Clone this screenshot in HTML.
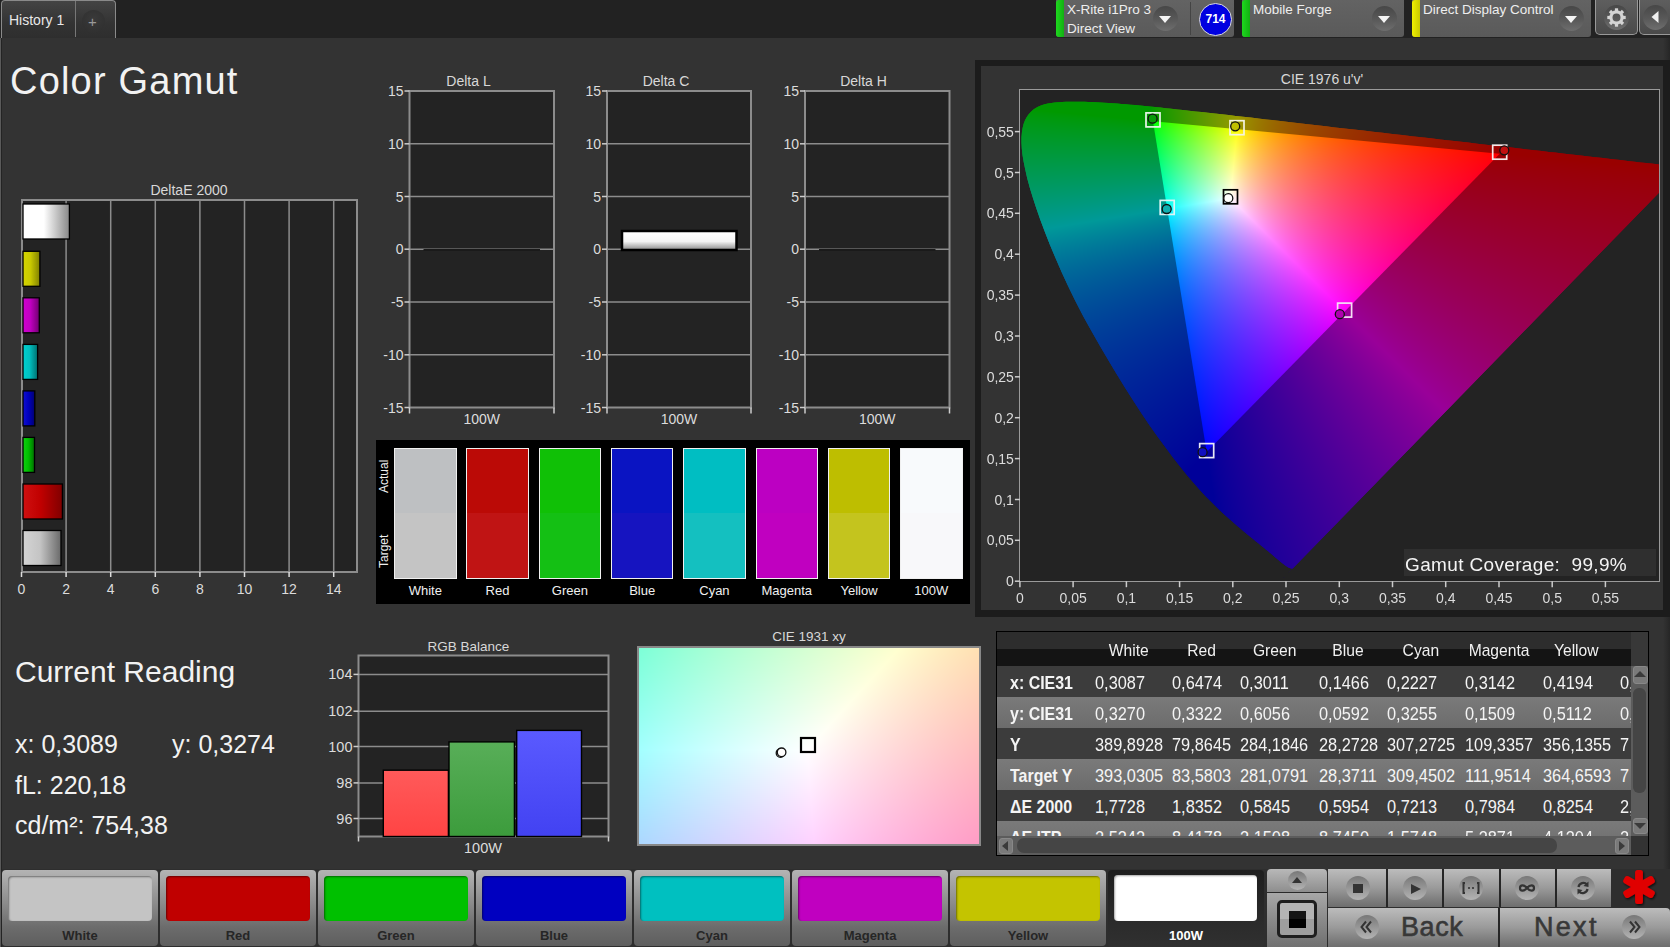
<!DOCTYPE html>
<html><head><meta charset="utf-8">
<style>
*{box-sizing:border-box;margin:0;padding:0}
html,body{width:1670px;height:947px;overflow:hidden;background:#2e2e2e;font-family:"Liberation Sans",sans-serif;color:#e6e6e6}
.a{position:absolute}
.t{position:absolute;white-space:nowrap;line-height:1}
.dd{width:25px;height:25px;border-radius:50%;background:linear-gradient(#474747,#595959 55%,#6e6e6e)}
.dd::after{content:"";position:absolute;left:6px;top:10px;border-left:6.5px solid transparent;border-right:6.5px solid transparent;border-top:7px solid #f4f4f4}
#main{position:absolute;left:2px;top:38px;width:1668px;height:831px;background:#333333}
svg text{font-family:"Liberation Sans",sans-serif}
</style></head><body>
<div class="a" style="left:0;top:0;width:1670px;height:38px;background:#222"></div>
<div id="main"></div><div class="a" style="left:0;top:38px;width:1px;height:909px;background:#5a5a5a"></div><div class="a" style="left:1px;top:38px;width:1px;height:909px;background:#242424"></div><div class="a" style="left:1663px;top:38px;width:7px;height:831px;background:linear-gradient(90deg,#333,#262626)"></div>
<!-- TAB -->
<div class="a" style="left:1px;top:0;width:115px;height:38px;border:1px solid #8a8a8a;border-bottom:none;border-radius:4px 4px 0 0;background:linear-gradient(#444,#333 60%,#2e2e2e)"></div>
<div class="a" style="left:75px;top:1px;width:1px;height:36px;background:#777"></div>
<div class="t" style="left:9px;top:13px;font-size:14px;color:#e8e8e8">History 1</div>
<div class="a" style="left:82px;top:10px;width:23px;height:23px;border-radius:50%;background:radial-gradient(circle at 50% 40%,#3a3a3a,#2d2d2d)"></div>
<div class="t" style="left:88px;top:14px;font-size:15px;color:#999">+</div>

<!-- DEVICE CHIPS -->
<div class="a" style="left:1056px;top:0;width:178px;height:37px;border-radius:0 0 3px 3px;background:linear-gradient(#636363,#5a5a5a)"></div>
<div class="a" style="left:1056px;top:0;width:8px;height:37px;border-radius:3px 0 0 3px;background:linear-gradient(90deg,#1ed81e,#12b012)"></div>
<div class="a" style="left:1190px;top:2px;width:1px;height:33px;background:#444"></div>
<div class="t" style="left:1067px;top:3px;font-size:13.5px;color:#eee">X-Rite i1Pro 3</div>
<div class="t" style="left:1067px;top:22px;font-size:13.5px;color:#eee">Direct View</div>
<div class="a dd" style="left:1153px;top:6px"></div>
<div class="a" style="left:1199px;top:3px;width:33px;height:33px;border-radius:50%;background:#0000e0;border:1.5px solid #ddd"></div>
<div class="t" style="left:1199px;top:13px;width:33px;text-align:center;font-size:12px;font-weight:bold;color:#fff">714</div>

<div class="a" style="left:1242px;top:0;width:162px;height:37px;border-radius:0 0 3px 3px;background:linear-gradient(#636363,#5a5a5a)"></div>
<div class="a" style="left:1242px;top:0;width:8px;height:37px;border-radius:3px 0 0 3px;background:linear-gradient(90deg,#1ed81e,#12b012)"></div>
<div class="t" style="left:1253px;top:3px;font-size:13.5px;color:#eee">Mobile Forge</div>
<div class="a dd" style="left:1372px;top:6px"></div>

<div class="a" style="left:1412px;top:0;width:179px;height:37px;border-radius:0 0 3px 3px;background:linear-gradient(#636363,#5a5a5a)"></div>
<div class="a" style="left:1412px;top:0;width:8px;height:37px;border-radius:3px 0 0 3px;background:linear-gradient(90deg,#f0f000,#c8c800)"></div>
<div class="t" style="left:1423px;top:3px;font-size:13.5px;color:#eee">Direct Display Control</div>
<div class="a dd" style="left:1559px;top:6px"></div>

<div class="a" style="left:1595px;top:0;width:43px;height:35px;border:1px solid #999;border-top:none;border-radius:0 0 5px 5px;background:linear-gradient(#5e5e5e,#4a4a4a)"></div>
<div class="a" style="left:1604px;top:5px;width:25px;height:25px;border-radius:50%;background:linear-gradient(#474747,#595959 55%,#6e6e6e)"></div>
<svg class="a" style="left:1604px;top:5px" width="25" height="25" viewBox="0 0 25 25"><g transform="translate(12.5 12.5)"><circle r="5.6" fill="none" stroke="#d4d4d4" stroke-width="3.2"/><rect x="-1.6" y="-9.2" width="3.2" height="4" fill="#d4d4d4" transform="rotate(0)"/><rect x="-1.6" y="-9.2" width="3.2" height="4" fill="#d4d4d4" transform="rotate(45)"/><rect x="-1.6" y="-9.2" width="3.2" height="4" fill="#d4d4d4" transform="rotate(90)"/><rect x="-1.6" y="-9.2" width="3.2" height="4" fill="#d4d4d4" transform="rotate(135)"/><rect x="-1.6" y="-9.2" width="3.2" height="4" fill="#d4d4d4" transform="rotate(180)"/><rect x="-1.6" y="-9.2" width="3.2" height="4" fill="#d4d4d4" transform="rotate(225)"/><rect x="-1.6" y="-9.2" width="3.2" height="4" fill="#d4d4d4" transform="rotate(270)"/><rect x="-1.6" y="-9.2" width="3.2" height="4" fill="#d4d4d4" transform="rotate(315)"/></g></svg>
<div class="a" style="left:1639px;top:0;width:35px;height:35px;border:1px solid #999;border-top:none;border-radius:0 0 0 5px;background:linear-gradient(#5e5e5e,#4a4a4a)"></div>
<div class="a" style="left:1643px;top:5px;width:25px;height:25px;border-radius:50%;background:linear-gradient(#474747,#595959 55%,#6e6e6e)"></div>
<svg class="a" style="left:1643px;top:5px" width="25" height="25"><path d="M8.5 12 L15.5 6 L15.5 18 Z" fill="#f0f0f0"/></svg>


<div class="t" style="left:10px;top:62px;font-size:38px;letter-spacing:1.2px;color:#f2f2f2">Color Gamut</div>
<svg class="a" style="left:0;top:0" width="370" height="610">
<text x="189" y="195" font-size="14" fill="#d8d8d8" text-anchor="middle">DeltaE 2000</text>
<rect x="22" y="200" width="335" height="372" fill="#232323" stroke="#8c8c8c" stroke-width="2"/>
<line x1="66.1" y1="200" x2="66.1" y2="572" stroke="#8c8c8c" stroke-width="1.5"/>
<line x1="110.7" y1="200" x2="110.7" y2="572" stroke="#8c8c8c" stroke-width="1.5"/>
<line x1="155.3" y1="200" x2="155.3" y2="572" stroke="#8c8c8c" stroke-width="1.5"/>
<line x1="199.9" y1="200" x2="199.9" y2="572" stroke="#8c8c8c" stroke-width="1.5"/>
<line x1="244.5" y1="200" x2="244.5" y2="572" stroke="#8c8c8c" stroke-width="1.5"/>
<line x1="289.1" y1="200" x2="289.1" y2="572" stroke="#8c8c8c" stroke-width="1.5"/>
<line x1="333.7" y1="200" x2="333.7" y2="572" stroke="#8c8c8c" stroke-width="1.5"/>
<line x1="21.5" y1="572" x2="21.5" y2="577" stroke="#ddd" stroke-width="1.5"/>
<text x="21.5" y="594" font-size="14" fill="#dcdcdc" text-anchor="middle">0</text>
<line x1="66.1" y1="572" x2="66.1" y2="577" stroke="#ddd" stroke-width="1.5"/>
<text x="66.1" y="594" font-size="14" fill="#dcdcdc" text-anchor="middle">2</text>
<line x1="110.7" y1="572" x2="110.7" y2="577" stroke="#ddd" stroke-width="1.5"/>
<text x="110.7" y="594" font-size="14" fill="#dcdcdc" text-anchor="middle">4</text>
<line x1="155.3" y1="572" x2="155.3" y2="577" stroke="#ddd" stroke-width="1.5"/>
<text x="155.3" y="594" font-size="14" fill="#dcdcdc" text-anchor="middle">6</text>
<line x1="199.9" y1="572" x2="199.9" y2="577" stroke="#ddd" stroke-width="1.5"/>
<text x="199.9" y="594" font-size="14" fill="#dcdcdc" text-anchor="middle">8</text>
<line x1="244.5" y1="572" x2="244.5" y2="577" stroke="#ddd" stroke-width="1.5"/>
<text x="244.5" y="594" font-size="14" fill="#dcdcdc" text-anchor="middle">10</text>
<line x1="289.1" y1="572" x2="289.1" y2="577" stroke="#ddd" stroke-width="1.5"/>
<text x="289.1" y="594" font-size="14" fill="#dcdcdc" text-anchor="middle">12</text>
<line x1="333.7" y1="572" x2="333.7" y2="577" stroke="#ddd" stroke-width="1.5"/>
<text x="333.7" y="594" font-size="14" fill="#dcdcdc" text-anchor="middle">14</text>
<defs>
<linearGradient id="dg0" x1="0" x2="1" y1="0" y2="0"><stop offset="0" stop-color="#ffffff"/><stop offset="0.45" stop-color="#ffffff"/><stop offset="1" stop-color="#888"/></linearGradient>
<linearGradient id="dg1" x1="0" x2="1" y1="0" y2="0"><stop offset="0" stop-color="#d4d400"/><stop offset="0.45" stop-color="#c8c800"/><stop offset="1" stop-color="#808000"/></linearGradient>
<linearGradient id="dg2" x1="0" x2="1" y1="0" y2="0"><stop offset="0" stop-color="#d000d0"/><stop offset="0.45" stop-color="#c000c0"/><stop offset="1" stop-color="#700070"/></linearGradient>
<linearGradient id="dg3" x1="0" x2="1" y1="0" y2="0"><stop offset="0" stop-color="#00d0d0"/><stop offset="0.45" stop-color="#00c0c0"/><stop offset="1" stop-color="#007070"/></linearGradient>
<linearGradient id="dg4" x1="0" x2="1" y1="0" y2="0"><stop offset="0" stop-color="#1010d0"/><stop offset="0.45" stop-color="#0000c0"/><stop offset="1" stop-color="#000070"/></linearGradient>
<linearGradient id="dg5" x1="0" x2="1" y1="0" y2="0"><stop offset="0" stop-color="#10d010"/><stop offset="0.45" stop-color="#00c000"/><stop offset="1" stop-color="#007000"/></linearGradient>
<linearGradient id="dg6" x1="0" x2="1" y1="0" y2="0"><stop offset="0" stop-color="#d01010"/><stop offset="0.45" stop-color="#c00000"/><stop offset="1" stop-color="#800000"/></linearGradient>
<linearGradient id="dg7" x1="0" x2="1" y1="0" y2="0"><stop offset="0" stop-color="#d4d4d4"/><stop offset="0.45" stop-color="#c4c4c4"/><stop offset="1" stop-color="#6a6a6a"/></linearGradient>
</defs>
<rect x="23" y="204.0" width="46.4" height="35" fill="url(#dg0)" stroke="#000" stroke-width="1.3"/>
<rect x="23" y="251.3" width="16.9" height="35" fill="url(#dg1)" stroke="#000" stroke-width="1.3"/>
<rect x="23" y="297.8" width="16.3" height="35" fill="url(#dg2)" stroke="#000" stroke-width="1.3"/>
<rect x="23" y="344.4" width="14.6" height="35" fill="url(#dg3)" stroke="#000" stroke-width="1.3"/>
<rect x="23" y="390.9" width="11.8" height="35" fill="url(#dg4)" stroke="#000" stroke-width="1.3"/>
<rect x="23" y="437.4" width="11.5" height="35" fill="url(#dg5)" stroke="#000" stroke-width="1.3"/>
<rect x="23" y="484.0" width="39.4" height="35" fill="url(#dg6)" stroke="#000" stroke-width="1.3"/>
<rect x="23" y="530.5" width="38.0" height="35" fill="url(#dg7)" stroke="#000" stroke-width="1.3"/>
</svg>
<svg class="a" style="left:370px;top:60px" width="600" height="380">
<defs><linearGradient id="cbar" x1="0" x2="0" y1="0" y2="1"><stop offset="0" stop-color="#fff"/><stop offset="0.55" stop-color="#f4f4f4"/><stop offset="1" stop-color="#8a8a8a"/></linearGradient></defs>
<text x="98.5" y="26" font-size="14" fill="#d8d8d8" text-anchor="middle">Delta L</text>
<rect x="39.5" y="31" width="144.5" height="316.5" fill="#232323" stroke="#8c8c8c" stroke-width="2"/>
<line x1="34.5" y1="31.0" x2="39.5" y2="31.0" stroke="#ccc" stroke-width="1.5"/>
<text x="33.5" y="36.0" font-size="14" fill="#dcdcdc" text-anchor="end">15</text>
<line x1="39.5" y1="83.8" x2="184" y2="83.8" stroke="#8c8c8c" stroke-width="1.5"/>
<line x1="34.5" y1="83.8" x2="39.5" y2="83.8" stroke="#ccc" stroke-width="1.5"/>
<text x="33.5" y="88.8" font-size="14" fill="#dcdcdc" text-anchor="end">10</text>
<line x1="39.5" y1="136.5" x2="184" y2="136.5" stroke="#8c8c8c" stroke-width="1.5"/>
<line x1="34.5" y1="136.5" x2="39.5" y2="136.5" stroke="#ccc" stroke-width="1.5"/>
<text x="33.5" y="141.5" font-size="14" fill="#dcdcdc" text-anchor="end">5</text>
<line x1="39.5" y1="189.2" x2="184" y2="189.2" stroke="#8c8c8c" stroke-width="1.5"/>
<line x1="34.5" y1="189.2" x2="39.5" y2="189.2" stroke="#ccc" stroke-width="1.5"/>
<text x="33.5" y="194.2" font-size="14" fill="#dcdcdc" text-anchor="end">0</text>
<line x1="39.5" y1="242.0" x2="184" y2="242.0" stroke="#8c8c8c" stroke-width="1.5"/>
<line x1="34.5" y1="242.0" x2="39.5" y2="242.0" stroke="#ccc" stroke-width="1.5"/>
<text x="33.5" y="247.0" font-size="14" fill="#dcdcdc" text-anchor="end">-5</text>
<line x1="39.5" y1="294.8" x2="184" y2="294.8" stroke="#8c8c8c" stroke-width="1.5"/>
<line x1="34.5" y1="294.8" x2="39.5" y2="294.8" stroke="#ccc" stroke-width="1.5"/>
<text x="33.5" y="299.8" font-size="14" fill="#dcdcdc" text-anchor="end">-10</text>
<line x1="34.5" y1="347.5" x2="39.5" y2="347.5" stroke="#ccc" stroke-width="1.5"/>
<text x="33.5" y="352.5" font-size="14" fill="#dcdcdc" text-anchor="end">-15</text>
<line x1="39.5" y1="347.5" x2="39.5" y2="353.5" stroke="#ccc" stroke-width="1.5"/>
<line x1="184" y1="347.5" x2="184" y2="353.5" stroke="#ccc" stroke-width="1.5"/>
<text x="111.75" y="364" font-size="14" fill="#dcdcdc" text-anchor="middle">100W</text>
<line x1="53.5" y1="190" x2="170" y2="190" stroke="#1a1a1a" stroke-width="2"/>
<text x="296" y="26" font-size="14" fill="#d8d8d8" text-anchor="middle">Delta C</text>
<rect x="237" y="31" width="144" height="316.5" fill="#232323" stroke="#8c8c8c" stroke-width="2"/>
<line x1="232" y1="31.0" x2="237" y2="31.0" stroke="#ccc" stroke-width="1.5"/>
<text x="231" y="36.0" font-size="14" fill="#dcdcdc" text-anchor="end">15</text>
<line x1="237" y1="83.8" x2="381" y2="83.8" stroke="#8c8c8c" stroke-width="1.5"/>
<line x1="232" y1="83.8" x2="237" y2="83.8" stroke="#ccc" stroke-width="1.5"/>
<text x="231" y="88.8" font-size="14" fill="#dcdcdc" text-anchor="end">10</text>
<line x1="237" y1="136.5" x2="381" y2="136.5" stroke="#8c8c8c" stroke-width="1.5"/>
<line x1="232" y1="136.5" x2="237" y2="136.5" stroke="#ccc" stroke-width="1.5"/>
<text x="231" y="141.5" font-size="14" fill="#dcdcdc" text-anchor="end">5</text>
<line x1="237" y1="189.2" x2="381" y2="189.2" stroke="#8c8c8c" stroke-width="1.5"/>
<line x1="232" y1="189.2" x2="237" y2="189.2" stroke="#ccc" stroke-width="1.5"/>
<text x="231" y="194.2" font-size="14" fill="#dcdcdc" text-anchor="end">0</text>
<line x1="237" y1="242.0" x2="381" y2="242.0" stroke="#8c8c8c" stroke-width="1.5"/>
<line x1="232" y1="242.0" x2="237" y2="242.0" stroke="#ccc" stroke-width="1.5"/>
<text x="231" y="247.0" font-size="14" fill="#dcdcdc" text-anchor="end">-5</text>
<line x1="237" y1="294.8" x2="381" y2="294.8" stroke="#8c8c8c" stroke-width="1.5"/>
<line x1="232" y1="294.8" x2="237" y2="294.8" stroke="#ccc" stroke-width="1.5"/>
<text x="231" y="299.8" font-size="14" fill="#dcdcdc" text-anchor="end">-10</text>
<line x1="232" y1="347.5" x2="237" y2="347.5" stroke="#ccc" stroke-width="1.5"/>
<text x="231" y="352.5" font-size="14" fill="#dcdcdc" text-anchor="end">-15</text>
<line x1="237" y1="347.5" x2="237" y2="353.5" stroke="#ccc" stroke-width="1.5"/>
<line x1="381" y1="347.5" x2="381" y2="353.5" stroke="#ccc" stroke-width="1.5"/>
<text x="309.0" y="364" font-size="14" fill="#dcdcdc" text-anchor="middle">100W</text>
<rect x="252" y="171" width="114.5" height="19" fill="url(#cbar)" stroke="#000" stroke-width="2.5"/>
<text x="493.5" y="26" font-size="14" fill="#d8d8d8" text-anchor="middle">Delta H</text>
<rect x="435" y="31" width="144.5" height="316.5" fill="#232323" stroke="#8c8c8c" stroke-width="2"/>
<line x1="430" y1="31.0" x2="435" y2="31.0" stroke="#ccc" stroke-width="1.5"/>
<text x="429" y="36.0" font-size="14" fill="#dcdcdc" text-anchor="end">15</text>
<line x1="435" y1="83.8" x2="579.5" y2="83.8" stroke="#8c8c8c" stroke-width="1.5"/>
<line x1="430" y1="83.8" x2="435" y2="83.8" stroke="#ccc" stroke-width="1.5"/>
<text x="429" y="88.8" font-size="14" fill="#dcdcdc" text-anchor="end">10</text>
<line x1="435" y1="136.5" x2="579.5" y2="136.5" stroke="#8c8c8c" stroke-width="1.5"/>
<line x1="430" y1="136.5" x2="435" y2="136.5" stroke="#ccc" stroke-width="1.5"/>
<text x="429" y="141.5" font-size="14" fill="#dcdcdc" text-anchor="end">5</text>
<line x1="435" y1="189.2" x2="579.5" y2="189.2" stroke="#8c8c8c" stroke-width="1.5"/>
<line x1="430" y1="189.2" x2="435" y2="189.2" stroke="#ccc" stroke-width="1.5"/>
<text x="429" y="194.2" font-size="14" fill="#dcdcdc" text-anchor="end">0</text>
<line x1="435" y1="242.0" x2="579.5" y2="242.0" stroke="#8c8c8c" stroke-width="1.5"/>
<line x1="430" y1="242.0" x2="435" y2="242.0" stroke="#ccc" stroke-width="1.5"/>
<text x="429" y="247.0" font-size="14" fill="#dcdcdc" text-anchor="end">-5</text>
<line x1="435" y1="294.8" x2="579.5" y2="294.8" stroke="#8c8c8c" stroke-width="1.5"/>
<line x1="430" y1="294.8" x2="435" y2="294.8" stroke="#ccc" stroke-width="1.5"/>
<text x="429" y="299.8" font-size="14" fill="#dcdcdc" text-anchor="end">-10</text>
<line x1="430" y1="347.5" x2="435" y2="347.5" stroke="#ccc" stroke-width="1.5"/>
<text x="429" y="352.5" font-size="14" fill="#dcdcdc" text-anchor="end">-15</text>
<line x1="435" y1="347.5" x2="435" y2="353.5" stroke="#ccc" stroke-width="1.5"/>
<line x1="579.5" y1="347.5" x2="579.5" y2="353.5" stroke="#ccc" stroke-width="1.5"/>
<text x="507.25" y="364" font-size="14" fill="#dcdcdc" text-anchor="middle">100W</text>
<line x1="449" y1="190" x2="565.5" y2="190" stroke="#1a1a1a" stroke-width="2"/>
</svg>
<div class="a" style="left:376px;top:440px;width:594px;height:164px;background:#000"></div>
<div class="a" style="left:394.0px;top:448px;width:62.5px;height:131px;border:1.5px solid #f0f0f0;background:linear-gradient(#bec0c2 50%,#c4c4c4 50%)"></div>
<div class="t" style="left:374.0px;top:584px;width:102.5px;text-align:center;font-size:13px;color:#f0f0f0">White</div>
<div class="a" style="left:466.3px;top:448px;width:62.5px;height:131px;border:1.5px solid #f0f0f0;background:linear-gradient(#bb0a06 50%,#c01414 50%)"></div>
<div class="t" style="left:446.3px;top:584px;width:102.5px;text-align:center;font-size:13px;color:#f0f0f0">Red</div>
<div class="a" style="left:538.6px;top:448px;width:62.5px;height:131px;border:1.5px solid #f0f0f0;background:linear-gradient(#10c006 50%,#14c014 50%)"></div>
<div class="t" style="left:518.6px;top:584px;width:102.5px;text-align:center;font-size:13px;color:#f0f0f0">Green</div>
<div class="a" style="left:610.9px;top:448px;width:62.5px;height:131px;border:1.5px solid #f0f0f0;background:linear-gradient(#0a14c2 50%,#1614c0 50%)"></div>
<div class="t" style="left:590.9px;top:584px;width:102.5px;text-align:center;font-size:13px;color:#f0f0f0">Blue</div>
<div class="a" style="left:683.2px;top:448px;width:62.5px;height:131px;border:1.5px solid #f0f0f0;background:linear-gradient(#00bec2 50%,#14c0c0 50%)"></div>
<div class="t" style="left:663.2px;top:584px;width:102.5px;text-align:center;font-size:13px;color:#f0f0f0">Cyan</div>
<div class="a" style="left:755.5px;top:448px;width:62.5px;height:131px;border:1.5px solid #f0f0f0;background:linear-gradient(#bc00c2 50%,#c000c0 50%)"></div>
<div class="t" style="left:735.5px;top:584px;width:102.5px;text-align:center;font-size:13px;color:#f0f0f0">Magenta</div>
<div class="a" style="left:827.8px;top:448px;width:62.5px;height:131px;border:1.5px solid #f0f0f0;background:linear-gradient(#bebe00 50%,#c4c41e 50%)"></div>
<div class="t" style="left:807.8px;top:584px;width:102.5px;text-align:center;font-size:13px;color:#f0f0f0">Yellow</div>
<div class="a" style="left:900.1px;top:448px;width:62.5px;height:131px;border:1.5px solid #f0f0f0;background:linear-gradient(#f8fafc 50%,#f8f8fa 50%)"></div>
<div class="t" style="left:880.1px;top:584px;width:102.5px;text-align:center;font-size:13px;color:#f0f0f0">100W</div>
<div class="t" style="left:378px;top:469px;font-size:12px;color:#eee;transform:rotate(-90deg);transform-origin:0 0;top:493px">Actual</div>
<div class="t" style="left:378px;top:568px;font-size:12px;color:#eee;transform:rotate(-90deg);transform-origin:0 0">Target</div>
<div class="a" style="left:975px;top:60px;width:695px;height:557px;background:#1c1c1c"></div>
<div class="a" style="left:981px;top:66px;width:682px;height:544px;background:#333"></div>
<div class="t" style="left:981px;top:72px;width:682px;text-align:center;font-size:14px;color:#d8d8d8">CIE 1976 u'v'</div>
<div class="a" style="left:1019px;top:89px;width:641px;height:493px;background:#232323;border:1.5px solid #9a9a9a"></div>
<svg class="a" style="left:1020px;top:90px" width="639" height="491"><defs><clipPath id="lc"><polygon points="273.4,477.8 245.9,506.0 248.8,503.0 264.0,487.4 273.0,478.1 272.8,478.2 272.7,478.3 272.5,478.3 272.2,478.4 272.0,478.4 271.7,478.4 271.4,478.4 271.0,478.4 270.5,478.3 269.8,478.1 269.2,477.9 268.5,477.6 267.9,477.2 267.2,476.8 266.5,476.3 265.7,475.8 264.9,475.2 264.0,474.5 263.1,473.7 262.0,472.9 260.8,472.0 259.5,470.9 258.1,469.8 256.6,468.6 255.1,467.2 253.4,465.8 251.7,464.3 249.9,462.8 247.9,461.1 245.8,459.4 243.6,457.6 241.3,455.7 238.7,453.6 236.0,451.4 233.1,449.0 230.0,446.5 226.9,443.9 223.6,441.2 220.1,438.3 216.5,435.2 212.6,431.8 208.6,428.2 204.3,424.4 199.8,420.2 195.2,415.8 190.5,411.1 185.4,405.9 179.9,399.9 173.8,393.0 167.3,385.4 160.5,377.0 153.4,368.0 146.0,358.1 138.2,347.5 130.2,336.3 122.1,324.3 113.8,311.6 105.2,298.1 96.6,284.1 88.2,270.0 79.7,255.6 71.3,240.8 63.1,225.9 55.5,211.3 48.4,196.8 41.8,182.4 35.6,168.3 30.0,154.9 24.9,142.1 20.3,129.8 16.2,118.1 12.7,107.3 9.7,97.4 7.2,88.2 5.3,79.8 3.7,72.0 2.5,64.9 1.8,58.5 1.5,52.7 1.5,47.4 1.9,42.5 2.6,38.0 3.6,34.1 4.9,30.5 6.6,27.2 8.5,24.4 10.7,21.9 13.1,19.7 15.7,17.9 18.5,16.4 21.5,15.3 24.6,14.3 27.9,13.5 31.3,12.9 34.8,12.5 38.3,12.2 42.0,12.0 45.7,11.8 49.5,11.8 53.3,11.7 57.1,11.7 60.8,11.7 64.6,11.8 68.5,11.9 72.4,12.1 76.3,12.2 80.3,12.4 84.3,12.7 88.5,12.9 92.7,13.2 97.0,13.5 101.4,13.9 105.9,14.3 110.5,14.7 115.2,15.1 120.0,15.6 124.9,16.0 129.9,16.5 135.1,17.1 140.4,17.6 145.8,18.2 151.4,18.8 157.1,19.4 163.0,20.0 169.0,20.7 175.2,21.4 181.5,22.1 188.0,22.8 194.7,23.6 201.5,24.3 208.5,25.1 215.7,25.9 223.0,26.8 230.6,27.6 238.2,28.5 246.1,29.4 254.1,30.3 262.4,31.3 270.7,32.3 279.3,33.2 288.0,34.2 296.9,35.3 305.9,36.3 315.1,37.4 324.4,38.4 333.8,39.5 343.4,40.6 352.9,41.7 362.6,42.8 372.4,43.9 382.2,45.1 391.8,46.2 401.4,47.3 410.8,48.3 420.2,49.4 429.5,50.5 438.9,51.6 448.2,52.6 457.3,53.7 466.2,54.7 474.9,55.7 483.3,56.6 491.5,57.6 499.5,58.5 507.2,59.4 514.7,60.2 521.9,61.1 528.9,61.9 535.1,62.6 540.8,63.2 546.8,63.9 553.9,64.8 562.8,65.8 573.0,66.9 583.2,68.1 592.5,69.2 600.5,70.1 607.8,70.9 614.6,71.7 620.7,72.4 626.2,73.1 631.1,73.6 635.4,74.1 639.3,74.5 642.6,74.9 645.4,75.2 647.9,75.5 650.3,75.8 653.0,76.1 655.6,76.4 658.0,76.7 659.9,76.9 670.5,67.7 686.8,52.2 690.6,49.1 663.7,77.3"/></clipPath><clipPath id="tc"><polygon points="479.7,63.7 133.0,31.4 186.7,362.1"/></clipPath></defs><g clip-path="url(#lc)"><path fill="#009900" d="M0 0h14v14h-14z"/><path fill="#009900" d="M14 0h14v14h-14z"/><path fill="#009900" d="M28 0h14v14h-14z"/><path fill="#009900" d="M42 0h14v14h-14z"/><path fill="#009900" d="M56 0h14v14h-14z"/><path fill="#009900" d="M70 0h14v14h-14z"/><path fill="#009900" d="M84 0h14v14h-14z"/><path fill="#009900" d="M98 0h14v14h-14z"/><path fill="#009900" d="M112 0h14v14h-14z"/><path fill="#0a9900" d="M126 0h14v14h-14z"/><path fill="#239900" d="M140 0h14v14h-14z"/><path fill="#3a9900" d="M154 0h14v14h-14z"/><path fill="#509900" d="M168 0h14v14h-14z"/><path fill="#669900" d="M182 0h14v14h-14z"/><path fill="#7c9900" d="M196 0h14v14h-14z"/><path fill="#949900" d="M210 0h14v14h-14z"/><path fill="#998800" d="M224 0h14v14h-14z"/><path fill="#997600" d="M238 0h14v14h-14z"/><path fill="#996800" d="M252 0h14v14h-14z"/><path fill="#995c00" d="M266 0h14v14h-14z"/><path fill="#995100" d="M280 0h14v14h-14z"/><path fill="#994900" d="M294 0h14v14h-14z"/><path fill="#994100" d="M308 0h14v14h-14z"/><path fill="#993a00" d="M322 0h14v14h-14z"/><path fill="#993400" d="M336 0h14v14h-14z"/><path fill="#992f00" d="M350 0h14v14h-14z"/><path fill="#992a00" d="M364 0h14v14h-14z"/><path fill="#992500" d="M378 0h14v14h-14z"/><path fill="#992100" d="M392 0h14v14h-14z"/><path fill="#991d00" d="M406 0h14v14h-14z"/><path fill="#991900" d="M420 0h14v14h-14z"/><path fill="#991600" d="M434 0h14v14h-14z"/><path fill="#991300" d="M448 0h14v14h-14z"/><path fill="#990f00" d="M462 0h14v14h-14z"/><path fill="#990c00" d="M476 0h14v14h-14z"/><path fill="#990900" d="M490 0h14v14h-14z"/><path fill="#990600" d="M504 0h14v14h-14z"/><path fill="#990300" d="M518 0h14v14h-14z"/><path fill="#990000" d="M532 0h14v14h-14z"/><path fill="#990000" d="M546 0h14v14h-14z"/><path fill="#990000" d="M560 0h14v14h-14z"/><path fill="#990000" d="M574 0h14v14h-14z"/><path fill="#990000" d="M588 0h14v14h-14z"/><path fill="#990000" d="M602 0h14v14h-14z"/><path fill="#990000" d="M616 0h14v14h-14z"/><path fill="#990000" d="M630 0h14v14h-14z"/><path fill="#009903" d="M0 14h14v14h-14z"/><path fill="#009900" d="M14 14h14v14h-14z"/><path fill="#009900" d="M28 14h14v14h-14z"/><path fill="#009900" d="M42 14h14v14h-14z"/><path fill="#009900" d="M56 14h14v14h-14z"/><path fill="#009900" d="M70 14h14v14h-14z"/><path fill="#009900" d="M84 14h14v14h-14z"/><path fill="#009900" d="M98 14h14v14h-14z"/><path fill="#009900" d="M112 14h14v14h-14z"/><path fill="#059900" d="M126 14h14v14h-14z"/><path fill="#219900" d="M140 14h14v14h-14z"/><path fill="#389900" d="M154 14h14v14h-14z"/><path fill="#4f9900" d="M168 14h14v14h-14z"/><path fill="#669900" d="M182 14h14v14h-14z"/><path fill="#7d9900" d="M196 14h14v14h-14z"/><path fill="#969900" d="M210 14h14v14h-14z"/><path fill="#998500" d="M224 14h14v14h-14z"/><path fill="#997300" d="M238 14h14v14h-14z"/><path fill="#996500" d="M252 14h14v14h-14z"/><path fill="#995900" d="M266 14h14v14h-14z"/><path fill="#994f00" d="M280 14h14v14h-14z"/><path fill="#994600" d="M294 14h14v14h-14z"/><path fill="#993e00" d="M308 14h14v14h-14z"/><path fill="#993700" d="M322 14h14v14h-14z"/><path fill="#993100" d="M336 14h14v14h-14z"/><path fill="#992c00" d="M350 14h14v14h-14z"/><path fill="#992700" d="M364 14h14v14h-14z"/><path fill="#992300" d="M378 14h14v14h-14z"/><path fill="#991e00" d="M392 14h14v14h-14z"/><path fill="#991a00" d="M406 14h14v14h-14z"/><path fill="#991700" d="M420 14h14v14h-14z"/><path fill="#991300" d="M434 14h14v14h-14z"/><path fill="#991000" d="M448 14h14v14h-14z"/><path fill="#990d00" d="M462 14h14v14h-14z"/><path fill="#990a00" d="M476 14h14v14h-14z"/><path fill="#990700" d="M490 14h14v14h-14z"/><path fill="#990300" d="M504 14h14v14h-14z"/><path fill="#990000" d="M518 14h14v14h-14z"/><path fill="#990000" d="M532 14h14v14h-14z"/><path fill="#990000" d="M546 14h14v14h-14z"/><path fill="#990000" d="M560 14h14v14h-14z"/><path fill="#990000" d="M574 14h14v14h-14z"/><path fill="#990000" d="M588 14h14v14h-14z"/><path fill="#990000" d="M602 14h14v14h-14z"/><path fill="#990000" d="M616 14h14v14h-14z"/><path fill="#990000" d="M630 14h14v14h-14z"/><path fill="#009918" d="M0 28h14v14h-14z"/><path fill="#009917" d="M14 28h14v14h-14z"/><path fill="#009916" d="M28 28h14v14h-14z"/><path fill="#009914" d="M42 28h14v14h-14z"/><path fill="#009913" d="M56 28h14v14h-14z"/><path fill="#009912" d="M70 28h14v14h-14z"/><path fill="#009910" d="M84 28h14v14h-14z"/><path fill="#00990e" d="M98 28h14v14h-14z"/><path fill="#00990c" d="M112 28h14v14h-14z"/><path fill="#00990a" d="M126 28h14v14h-14z"/><path fill="#1e9907" d="M140 28h14v14h-14z"/><path fill="#369904" d="M154 28h14v14h-14z"/><path fill="#4e9900" d="M168 28h14v14h-14z"/><path fill="#669900" d="M182 28h14v14h-14z"/><path fill="#7f9900" d="M196 28h14v14h-14z"/><path fill="#989900" d="M210 28h14v14h-14z"/><path fill="#998300" d="M224 28h14v14h-14z"/><path fill="#997100" d="M238 28h14v14h-14z"/><path fill="#996200" d="M252 28h14v14h-14z"/><path fill="#995600" d="M266 28h14v14h-14z"/><path fill="#994c00" d="M280 28h14v14h-14z"/><path fill="#994300" d="M294 28h14v14h-14z"/><path fill="#993b00" d="M308 28h14v14h-14z"/><path fill="#993500" d="M322 28h14v14h-14z"/><path fill="#992f00" d="M336 28h14v14h-14z"/><path fill="#992900" d="M350 28h14v14h-14z"/><path fill="#992400" d="M364 28h14v14h-14z"/><path fill="#992000" d="M378 28h14v14h-14z"/><path fill="#991c00" d="M392 28h14v14h-14z"/><path fill="#991800" d="M406 28h14v14h-14z"/><path fill="#991400" d="M420 28h14v14h-14z"/><path fill="#991100" d="M434 28h14v14h-14z"/><path fill="#990d00" d="M448 28h14v14h-14z"/><path fill="#990a00" d="M462 28h14v14h-14z"/><path fill="#990700" d="M476 28h14v14h-14z"/><path fill="#990300" d="M490 28h14v14h-14z"/><path fill="#990000" d="M504 28h14v14h-14z"/><path fill="#990000" d="M518 28h14v14h-14z"/><path fill="#990000" d="M532 28h14v14h-14z"/><path fill="#990000" d="M546 28h14v14h-14z"/><path fill="#990000" d="M560 28h14v14h-14z"/><path fill="#990000" d="M574 28h14v14h-14z"/><path fill="#990000" d="M588 28h14v14h-14z"/><path fill="#990000" d="M602 28h14v14h-14z"/><path fill="#990000" d="M616 28h14v14h-14z"/><path fill="#990000" d="M630 28h14v14h-14z"/><path fill="#009929" d="M0 42h14v14h-14z"/><path fill="#009929" d="M14 42h14v14h-14z"/><path fill="#009928" d="M28 42h14v14h-14z"/><path fill="#009928" d="M42 42h14v14h-14z"/><path fill="#009927" d="M56 42h14v14h-14z"/><path fill="#009926" d="M70 42h14v14h-14z"/><path fill="#009926" d="M84 42h14v14h-14z"/><path fill="#009925" d="M98 42h14v14h-14z"/><path fill="#009924" d="M112 42h14v14h-14z"/><path fill="#009923" d="M126 42h14v14h-14z"/><path fill="#1a9922" d="M140 42h14v14h-14z"/><path fill="#349921" d="M154 42h14v14h-14z"/><path fill="#4d9920" d="M168 42h14v14h-14z"/><path fill="#66991e" d="M182 42h14v14h-14z"/><path fill="#80991d" d="M196 42h14v14h-14z"/><path fill="#99971b" d="M210 42h14v14h-14z"/><path fill="#998015" d="M224 42h14v14h-14z"/><path fill="#996e10" d="M238 42h14v14h-14z"/><path fill="#995f0d" d="M252 42h14v14h-14z"/><path fill="#99530a" d="M266 42h14v14h-14z"/><path fill="#994907" d="M280 42h14v14h-14z"/><path fill="#994004" d="M294 42h14v14h-14z"/><path fill="#993902" d="M308 42h14v14h-14z"/><path fill="#993200" d="M322 42h14v14h-14z"/><path fill="#992c00" d="M336 42h14v14h-14z"/><path fill="#992700" d="M350 42h14v14h-14z"/><path fill="#992200" d="M364 42h14v14h-14z"/><path fill="#991d00" d="M378 42h14v14h-14z"/><path fill="#991900" d="M392 42h14v14h-14z"/><path fill="#991500" d="M406 42h14v14h-14z"/><path fill="#991200" d="M420 42h14v14h-14z"/><path fill="#990e00" d="M434 42h14v14h-14z"/><path fill="#990b00" d="M448 42h14v14h-14z"/><path fill="#990700" d="M462 42h14v14h-14z"/><path fill="#990400" d="M476 42h14v14h-14z"/><path fill="#990000" d="M490 42h14v14h-14z"/><path fill="#990000" d="M504 42h14v14h-14z"/><path fill="#990000" d="M518 42h14v14h-14z"/><path fill="#990000" d="M532 42h14v14h-14z"/><path fill="#990000" d="M546 42h14v14h-14z"/><path fill="#990000" d="M560 42h14v14h-14z"/><path fill="#990000" d="M574 42h14v14h-14z"/><path fill="#990000" d="M588 42h14v14h-14z"/><path fill="#990000" d="M602 42h14v14h-14z"/><path fill="#990000" d="M616 42h14v14h-14z"/><path fill="#990000" d="M630 42h14v14h-14z"/><path fill="#00993a" d="M0 56h14v14h-14z"/><path fill="#00993a" d="M14 56h14v14h-14z"/><path fill="#00993a" d="M28 56h14v14h-14z"/><path fill="#00993a" d="M42 56h14v14h-14z"/><path fill="#00993a" d="M56 56h14v14h-14z"/><path fill="#00993a" d="M70 56h14v14h-14z"/><path fill="#00993a" d="M84 56h14v14h-14z"/><path fill="#00993a" d="M98 56h14v14h-14z"/><path fill="#00993a" d="M112 56h14v14h-14z"/><path fill="#00993a" d="M126 56h14v14h-14z"/><path fill="#179939" d="M140 56h14v14h-14z"/><path fill="#329939" d="M154 56h14v14h-14z"/><path fill="#4c9939" d="M168 56h14v14h-14z"/><path fill="#669939" d="M182 56h14v14h-14z"/><path fill="#819939" d="M196 56h14v14h-14z"/><path fill="#999537" d="M210 56h14v14h-14z"/><path fill="#997d2f" d="M224 56h14v14h-14z"/><path fill="#996a28" d="M238 56h14v14h-14z"/><path fill="#995c22" d="M252 56h14v14h-14z"/><path fill="#99501e" d="M266 56h14v14h-14z"/><path fill="#99461a" d="M280 56h14v14h-14z"/><path fill="#993d17" d="M294 56h14v14h-14z"/><path fill="#993614" d="M308 56h14v14h-14z"/><path fill="#992f11" d="M322 56h14v14h-14z"/><path fill="#99290f" d="M336 56h14v14h-14z"/><path fill="#99240d" d="M350 56h14v14h-14z"/><path fill="#991f0b" d="M364 56h14v14h-14z"/><path fill="#991a09" d="M378 56h14v14h-14z"/><path fill="#991608" d="M392 56h14v14h-14z"/><path fill="#991206" d="M406 56h14v14h-14z"/><path fill="#990f05" d="M420 56h14v14h-14z"/><path fill="#990b03" d="M434 56h14v14h-14z"/><path fill="#990802" d="M448 56h14v14h-14z"/><path fill="#990400" d="M462 56h14v14h-14z"/><path fill="#990000" d="M476 56h14v14h-14z"/><path fill="#990000" d="M490 56h14v14h-14z"/><path fill="#990000" d="M504 56h14v14h-14z"/><path fill="#990000" d="M518 56h14v14h-14z"/><path fill="#990000" d="M532 56h14v14h-14z"/><path fill="#990000" d="M546 56h14v14h-14z"/><path fill="#990000" d="M560 56h14v14h-14z"/><path fill="#990000" d="M574 56h14v14h-14z"/><path fill="#990000" d="M588 56h14v14h-14z"/><path fill="#990000" d="M602 56h14v14h-14z"/><path fill="#990000" d="M616 56h14v14h-14z"/><path fill="#990000" d="M630 56h14v14h-14z"/><path fill="#00994a" d="M0 70h14v14h-14z"/><path fill="#00994b" d="M14 70h14v14h-14z"/><path fill="#00994b" d="M28 70h14v14h-14z"/><path fill="#00994c" d="M42 70h14v14h-14z"/><path fill="#00994c" d="M56 70h14v14h-14z"/><path fill="#00994d" d="M70 70h14v14h-14z"/><path fill="#00994d" d="M84 70h14v14h-14z"/><path fill="#00994e" d="M98 70h14v14h-14z"/><path fill="#00994f" d="M112 70h14v14h-14z"/><path fill="#009950" d="M126 70h14v14h-14z"/><path fill="#139951" d="M140 70h14v14h-14z"/><path fill="#309951" d="M154 70h14v14h-14z"/><path fill="#4b9953" d="M168 70h14v14h-14z"/><path fill="#679954" d="M182 70h14v14h-14z"/><path fill="#839955" d="M196 70h14v14h-14z"/><path fill="#999252" d="M210 70h14v14h-14z"/><path fill="#997a46" d="M224 70h14v14h-14z"/><path fill="#99673d" d="M238 70h14v14h-14z"/><path fill="#995935" d="M252 70h14v14h-14z"/><path fill="#994d2f" d="M266 70h14v14h-14z"/><path fill="#99432a" d="M280 70h14v14h-14z"/><path fill="#993a26" d="M294 70h14v14h-14z"/><path fill="#993322" d="M308 70h14v14h-14z"/><path fill="#992c1f" d="M322 70h14v14h-14z"/><path fill="#99261c" d="M336 70h14v14h-14z"/><path fill="#992119" d="M350 70h14v14h-14z"/><path fill="#991c17" d="M364 70h14v14h-14z"/><path fill="#991815" d="M378 70h14v14h-14z"/><path fill="#991313" d="M392 70h14v14h-14z"/><path fill="#990f12" d="M406 70h14v14h-14z"/><path fill="#990c10" d="M420 70h14v14h-14z"/><path fill="#99080e" d="M434 70h14v14h-14z"/><path fill="#99040d" d="M448 70h14v14h-14z"/><path fill="#99000c" d="M462 70h14v14h-14z"/><path fill="#99000b" d="M476 70h14v14h-14z"/><path fill="#990009" d="M490 70h14v14h-14z"/><path fill="#990008" d="M504 70h14v14h-14z"/><path fill="#990007" d="M518 70h14v14h-14z"/><path fill="#990006" d="M532 70h14v14h-14z"/><path fill="#990005" d="M546 70h14v14h-14z"/><path fill="#990004" d="M560 70h14v14h-14z"/><path fill="#990003" d="M574 70h14v14h-14z"/><path fill="#990002" d="M588 70h14v14h-14z"/><path fill="#990001" d="M602 70h14v14h-14z"/><path fill="#990000" d="M616 70h14v14h-14z"/><path fill="#990000" d="M630 70h14v14h-14z"/><path fill="#00995a" d="M0 84h14v14h-14z"/><path fill="#00995b" d="M14 84h14v14h-14z"/><path fill="#00995c" d="M28 84h14v14h-14z"/><path fill="#00995d" d="M42 84h14v14h-14z"/><path fill="#00995f" d="M56 84h14v14h-14z"/><path fill="#009960" d="M70 84h14v14h-14z"/><path fill="#009961" d="M84 84h14v14h-14z"/><path fill="#009963" d="M98 84h14v14h-14z"/><path fill="#009964" d="M112 84h14v14h-14z"/><path fill="#009966" d="M126 84h14v14h-14z"/><path fill="#0e9968" d="M140 84h14v14h-14z"/><path fill="#2d996a" d="M154 84h14v14h-14z"/><path fill="#4a996c" d="M168 84h14v14h-14z"/><path fill="#67996f" d="M182 84h14v14h-14z"/><path fill="#859971" d="M196 84h14v14h-14z"/><path fill="#998f6c" d="M210 84h14v14h-14z"/><path fill="#99765c" d="M224 84h14v14h-14z"/><path fill="#996451" d="M238 84h14v14h-14z"/><path fill="#995547" d="M252 84h14v14h-14z"/><path fill="#994940" d="M266 84h14v14h-14z"/><path fill="#993f39" d="M280 84h14v14h-14z"/><path fill="#993734" d="M294 84h14v14h-14z"/><path fill="#992f2f" d="M308 84h14v14h-14z"/><path fill="#99292b" d="M322 84h14v14h-14z"/><path fill="#992328" d="M336 84h14v14h-14z"/><path fill="#991e25" d="M350 84h14v14h-14z"/><path fill="#991922" d="M364 84h14v14h-14z"/><path fill="#991420" d="M378 84h14v14h-14z"/><path fill="#99101d" d="M392 84h14v14h-14z"/><path fill="#990c1b" d="M406 84h14v14h-14z"/><path fill="#990819" d="M420 84h14v14h-14z"/><path fill="#990418" d="M434 84h14v14h-14z"/><path fill="#990016" d="M448 84h14v14h-14z"/><path fill="#990014" d="M462 84h14v14h-14z"/><path fill="#990013" d="M476 84h14v14h-14z"/><path fill="#990012" d="M490 84h14v14h-14z"/><path fill="#990010" d="M504 84h14v14h-14z"/><path fill="#99000f" d="M518 84h14v14h-14z"/><path fill="#99000e" d="M532 84h14v14h-14z"/><path fill="#99000d" d="M546 84h14v14h-14z"/><path fill="#99000c" d="M560 84h14v14h-14z"/><path fill="#99000b" d="M574 84h14v14h-14z"/><path fill="#99000a" d="M588 84h14v14h-14z"/><path fill="#990009" d="M602 84h14v14h-14z"/><path fill="#990008" d="M616 84h14v14h-14z"/><path fill="#990008" d="M630 84h14v14h-14z"/><path fill="#00996b" d="M0 98h14v14h-14z"/><path fill="#00996c" d="M14 98h14v14h-14z"/><path fill="#00996e" d="M28 98h14v14h-14z"/><path fill="#009970" d="M42 98h14v14h-14z"/><path fill="#009972" d="M56 98h14v14h-14z"/><path fill="#009974" d="M70 98h14v14h-14z"/><path fill="#009976" d="M84 98h14v14h-14z"/><path fill="#009978" d="M98 98h14v14h-14z"/><path fill="#00997a" d="M112 98h14v14h-14z"/><path fill="#00997d" d="M126 98h14v14h-14z"/><path fill="#089980" d="M140 98h14v14h-14z"/><path fill="#2a9983" d="M154 98h14v14h-14z"/><path fill="#499987" d="M168 98h14v14h-14z"/><path fill="#67998b" d="M182 98h14v14h-14z"/><path fill="#87998f" d="M196 98h14v14h-14z"/><path fill="#998b87" d="M210 98h14v14h-14z"/><path fill="#997373" d="M224 98h14v14h-14z"/><path fill="#996064" d="M238 98h14v14h-14z"/><path fill="#995259" d="M252 98h14v14h-14z"/><path fill="#99464f" d="M266 98h14v14h-14z"/><path fill="#993c48" d="M280 98h14v14h-14z"/><path fill="#993342" d="M294 98h14v14h-14z"/><path fill="#992c3c" d="M308 98h14v14h-14z"/><path fill="#992637" d="M322 98h14v14h-14z"/><path fill="#992033" d="M336 98h14v14h-14z"/><path fill="#991b30" d="M350 98h14v14h-14z"/><path fill="#99162c" d="M364 98h14v14h-14z"/><path fill="#991129" d="M378 98h14v14h-14z"/><path fill="#990d27" d="M392 98h14v14h-14z"/><path fill="#990924" d="M406 98h14v14h-14z"/><path fill="#990522" d="M420 98h14v14h-14z"/><path fill="#990020" d="M434 98h14v14h-14z"/><path fill="#99001e" d="M448 98h14v14h-14z"/><path fill="#99001c" d="M462 98h14v14h-14z"/><path fill="#99001b" d="M476 98h14v14h-14z"/><path fill="#990019" d="M490 98h14v14h-14z"/><path fill="#990018" d="M504 98h14v14h-14z"/><path fill="#990016" d="M518 98h14v14h-14z"/><path fill="#990015" d="M532 98h14v14h-14z"/><path fill="#990014" d="M546 98h14v14h-14z"/><path fill="#990013" d="M560 98h14v14h-14z"/><path fill="#990012" d="M574 98h14v14h-14z"/><path fill="#990011" d="M588 98h14v14h-14z"/><path fill="#990010" d="M602 98h14v14h-14z"/><path fill="#99000f" d="M616 98h14v14h-14z"/><path fill="#99000e" d="M630 98h14v14h-14z"/><path fill="#00997c" d="M0 112h14v14h-14z"/><path fill="#00997e" d="M14 112h14v14h-14z"/><path fill="#009980" d="M28 112h14v14h-14z"/><path fill="#009983" d="M42 112h14v14h-14z"/><path fill="#009985" d="M56 112h14v14h-14z"/><path fill="#009988" d="M70 112h14v14h-14z"/><path fill="#00998b" d="M84 112h14v14h-14z"/><path fill="#00998e" d="M98 112h14v14h-14z"/><path fill="#009991" d="M112 112h14v14h-14z"/><path fill="#009995" d="M126 112h14v14h-14z"/><path fill="#009999" d="M140 112h14v14h-14z"/><path fill="#269499" d="M154 112h14v14h-14z"/><path fill="#439099" d="M168 112h14v14h-14z"/><path fill="#5e8b99" d="M182 112h14v14h-14z"/><path fill="#788699" d="M196 112h14v14h-14z"/><path fill="#918199" d="M210 112h14v14h-14z"/><path fill="#996f89" d="M224 112h14v14h-14z"/><path fill="#995c78" d="M238 112h14v14h-14z"/><path fill="#994e6a" d="M252 112h14v14h-14z"/><path fill="#99425f" d="M266 112h14v14h-14z"/><path fill="#993856" d="M280 112h14v14h-14z"/><path fill="#99304f" d="M294 112h14v14h-14z"/><path fill="#992948" d="M308 112h14v14h-14z"/><path fill="#992243" d="M322 112h14v14h-14z"/><path fill="#991c3e" d="M336 112h14v14h-14z"/><path fill="#99173a" d="M350 112h14v14h-14z"/><path fill="#991236" d="M364 112h14v14h-14z"/><path fill="#990e33" d="M378 112h14v14h-14z"/><path fill="#990930" d="M392 112h14v14h-14z"/><path fill="#99052d" d="M406 112h14v14h-14z"/><path fill="#99002a" d="M420 112h14v14h-14z"/><path fill="#990028" d="M434 112h14v14h-14z"/><path fill="#990026" d="M448 112h14v14h-14z"/><path fill="#990024" d="M462 112h14v14h-14z"/><path fill="#990022" d="M476 112h14v14h-14z"/><path fill="#990020" d="M490 112h14v14h-14z"/><path fill="#99001f" d="M504 112h14v14h-14z"/><path fill="#99001d" d="M518 112h14v14h-14z"/><path fill="#99001c" d="M532 112h14v14h-14z"/><path fill="#99001a" d="M546 112h14v14h-14z"/><path fill="#990019" d="M560 112h14v14h-14z"/><path fill="#990018" d="M574 112h14v14h-14z"/><path fill="#990017" d="M588 112h14v14h-14z"/><path fill="#990016" d="M602 112h14v14h-14z"/><path fill="#990015" d="M616 112h14v14h-14z"/><path fill="#990014" d="M630 112h14v14h-14z"/><path fill="#00998d" d="M0 126h14v14h-14z"/><path fill="#009990" d="M14 126h14v14h-14z"/><path fill="#009993" d="M28 126h14v14h-14z"/><path fill="#009996" d="M42 126h14v14h-14z"/><path fill="#009999" d="M56 126h14v14h-14z"/><path fill="#009599" d="M70 126h14v14h-14z"/><path fill="#009299" d="M84 126h14v14h-14z"/><path fill="#008e99" d="M98 126h14v14h-14z"/><path fill="#008a99" d="M112 126h14v14h-14z"/><path fill="#008699" d="M126 126h14v14h-14z"/><path fill="#008299" d="M140 126h14v14h-14z"/><path fill="#1d7e99" d="M154 126h14v14h-14z"/><path fill="#377999" d="M168 126h14v14h-14z"/><path fill="#4f7599" d="M182 126h14v14h-14z"/><path fill="#667099" d="M196 126h14v14h-14z"/><path fill="#7c6b99" d="M210 126h14v14h-14z"/><path fill="#926699" d="M224 126h14v14h-14z"/><path fill="#99588b" d="M238 126h14v14h-14z"/><path fill="#994a7c" d="M252 126h14v14h-14z"/><path fill="#993e6f" d="M266 126h14v14h-14z"/><path fill="#993465" d="M280 126h14v14h-14z"/><path fill="#992c5c" d="M294 126h14v14h-14z"/><path fill="#992555" d="M308 126h14v14h-14z"/><path fill="#991e4e" d="M322 126h14v14h-14z"/><path fill="#991949" d="M336 126h14v14h-14z"/><path fill="#991444" d="M350 126h14v14h-14z"/><path fill="#990f40" d="M364 126h14v14h-14z"/><path fill="#990a3c" d="M378 126h14v14h-14z"/><path fill="#990538" d="M392 126h14v14h-14z"/><path fill="#990035" d="M406 126h14v14h-14z"/><path fill="#990032" d="M420 126h14v14h-14z"/><path fill="#990030" d="M434 126h14v14h-14z"/><path fill="#99002d" d="M448 126h14v14h-14z"/><path fill="#99002b" d="M462 126h14v14h-14z"/><path fill="#990029" d="M476 126h14v14h-14z"/><path fill="#990027" d="M490 126h14v14h-14z"/><path fill="#990025" d="M504 126h14v14h-14z"/><path fill="#990024" d="M518 126h14v14h-14z"/><path fill="#990022" d="M532 126h14v14h-14z"/><path fill="#990021" d="M546 126h14v14h-14z"/><path fill="#99001f" d="M560 126h14v14h-14z"/><path fill="#99001e" d="M574 126h14v14h-14z"/><path fill="#99001d" d="M588 126h14v14h-14z"/><path fill="#99001b" d="M602 126h14v14h-14z"/><path fill="#99001a" d="M616 126h14v14h-14z"/><path fill="#990019" d="M630 126h14v14h-14z"/><path fill="#009399" d="M0 140h14v14h-14z"/><path fill="#009099" d="M14 140h14v14h-14z"/><path fill="#008d99" d="M28 140h14v14h-14z"/><path fill="#008999" d="M42 140h14v14h-14z"/><path fill="#008699" d="M56 140h14v14h-14z"/><path fill="#008399" d="M70 140h14v14h-14z"/><path fill="#007f99" d="M84 140h14v14h-14z"/><path fill="#007c99" d="M98 140h14v14h-14z"/><path fill="#007899" d="M112 140h14v14h-14z"/><path fill="#007499" d="M126 140h14v14h-14z"/><path fill="#007099" d="M140 140h14v14h-14z"/><path fill="#166c99" d="M154 140h14v14h-14z"/><path fill="#2e6899" d="M168 140h14v14h-14z"/><path fill="#446499" d="M182 140h14v14h-14z"/><path fill="#585f99" d="M196 140h14v14h-14z"/><path fill="#6c5b99" d="M210 140h14v14h-14z"/><path fill="#805699" d="M224 140h14v14h-14z"/><path fill="#935199" d="M238 140h14v14h-14z"/><path fill="#99468d" d="M252 140h14v14h-14z"/><path fill="#993a7f" d="M266 140h14v14h-14z"/><path fill="#993073" d="M280 140h14v14h-14z"/><path fill="#992869" d="M294 140h14v14h-14z"/><path fill="#992161" d="M308 140h14v14h-14z"/><path fill="#991b5a" d="M322 140h14v14h-14z"/><path fill="#991553" d="M336 140h14v14h-14z"/><path fill="#99104e" d="M350 140h14v14h-14z"/><path fill="#990b49" d="M364 140h14v14h-14z"/><path fill="#990645" d="M378 140h14v14h-14z"/><path fill="#990041" d="M392 140h14v14h-14z"/><path fill="#99003d" d="M406 140h14v14h-14z"/><path fill="#99003a" d="M420 140h14v14h-14z"/><path fill="#990037" d="M434 140h14v14h-14z"/><path fill="#990035" d="M448 140h14v14h-14z"/><path fill="#990032" d="M462 140h14v14h-14z"/><path fill="#990030" d="M476 140h14v14h-14z"/><path fill="#99002e" d="M490 140h14v14h-14z"/><path fill="#99002c" d="M504 140h14v14h-14z"/><path fill="#99002a" d="M518 140h14v14h-14z"/><path fill="#990028" d="M532 140h14v14h-14z"/><path fill="#990026" d="M546 140h14v14h-14z"/><path fill="#990025" d="M560 140h14v14h-14z"/><path fill="#990023" d="M574 140h14v14h-14z"/><path fill="#990022" d="M588 140h14v14h-14z"/><path fill="#990021" d="M602 140h14v14h-14z"/><path fill="#99001f" d="M616 140h14v14h-14z"/><path fill="#99001e" d="M630 140h14v14h-14z"/><path fill="#008399" d="M0 154h14v14h-14z"/><path fill="#008099" d="M14 154h14v14h-14z"/><path fill="#007d99" d="M28 154h14v14h-14z"/><path fill="#007a99" d="M42 154h14v14h-14z"/><path fill="#007799" d="M56 154h14v14h-14z"/><path fill="#007499" d="M70 154h14v14h-14z"/><path fill="#007099" d="M84 154h14v14h-14z"/><path fill="#006d99" d="M98 154h14v14h-14z"/><path fill="#006999" d="M112 154h14v14h-14z"/><path fill="#006699" d="M126 154h14v14h-14z"/><path fill="#006299" d="M140 154h14v14h-14z"/><path fill="#105e99" d="M154 154h14v14h-14z"/><path fill="#275a99" d="M168 154h14v14h-14z"/><path fill="#3b5699" d="M182 154h14v14h-14z"/><path fill="#4d5299" d="M196 154h14v14h-14z"/><path fill="#5f4d99" d="M210 154h14v14h-14z"/><path fill="#714999" d="M224 154h14v14h-14z"/><path fill="#824499" d="M238 154h14v14h-14z"/><path fill="#933f99" d="M252 154h14v14h-14z"/><path fill="#99368e" d="M266 154h14v14h-14z"/><path fill="#992c81" d="M280 154h14v14h-14z"/><path fill="#992476" d="M294 154h14v14h-14z"/><path fill="#991d6d" d="M308 154h14v14h-14z"/><path fill="#991765" d="M322 154h14v14h-14z"/><path fill="#99115e" d="M336 154h14v14h-14z"/><path fill="#990b58" d="M350 154h14v14h-14z"/><path fill="#990652" d="M364 154h14v14h-14z"/><path fill="#99004e" d="M378 154h14v14h-14z"/><path fill="#990049" d="M392 154h14v14h-14z"/><path fill="#990045" d="M406 154h14v14h-14z"/><path fill="#990042" d="M420 154h14v14h-14z"/><path fill="#99003f" d="M434 154h14v14h-14z"/><path fill="#99003c" d="M448 154h14v14h-14z"/><path fill="#990039" d="M462 154h14v14h-14z"/><path fill="#990036" d="M476 154h14v14h-14z"/><path fill="#990034" d="M490 154h14v14h-14z"/><path fill="#990032" d="M504 154h14v14h-14z"/><path fill="#990030" d="M518 154h14v14h-14z"/><path fill="#99002e" d="M532 154h14v14h-14z"/><path fill="#99002c" d="M546 154h14v14h-14z"/><path fill="#99002a" d="M560 154h14v14h-14z"/><path fill="#990029" d="M574 154h14v14h-14z"/><path fill="#990027" d="M588 154h14v14h-14z"/><path fill="#990026" d="M602 154h14v14h-14z"/><path fill="#990025" d="M616 154h14v14h-14z"/><path fill="#990023" d="M630 154h14v14h-14z"/><path fill="#007699" d="M0 168h14v14h-14z"/><path fill="#007399" d="M14 168h14v14h-14z"/><path fill="#007099" d="M28 168h14v14h-14z"/><path fill="#006d99" d="M42 168h14v14h-14z"/><path fill="#006a99" d="M56 168h14v14h-14z"/><path fill="#006799" d="M70 168h14v14h-14z"/><path fill="#006499" d="M84 168h14v14h-14z"/><path fill="#006099" d="M98 168h14v14h-14z"/><path fill="#005d99" d="M112 168h14v14h-14z"/><path fill="#005999" d="M126 168h14v14h-14z"/><path fill="#005699" d="M140 168h14v14h-14z"/><path fill="#0b5299" d="M154 168h14v14h-14z"/><path fill="#204e99" d="M168 168h14v14h-14z"/><path fill="#334a99" d="M182 168h14v14h-14z"/><path fill="#444699" d="M196 168h14v14h-14z"/><path fill="#554299" d="M210 168h14v14h-14z"/><path fill="#653e99" d="M224 168h14v14h-14z"/><path fill="#753999" d="M238 168h14v14h-14z"/><path fill="#843499" d="M252 168h14v14h-14z"/><path fill="#942f99" d="M266 168h14v14h-14z"/><path fill="#99288f" d="M280 168h14v14h-14z"/><path fill="#991f83" d="M294 168h14v14h-14z"/><path fill="#991879" d="M308 168h14v14h-14z"/><path fill="#991270" d="M322 168h14v14h-14z"/><path fill="#990c68" d="M336 168h14v14h-14z"/><path fill="#990762" d="M350 168h14v14h-14z"/><path fill="#99005c" d="M364 168h14v14h-14z"/><path fill="#990056" d="M378 168h14v14h-14z"/><path fill="#990052" d="M392 168h14v14h-14z"/><path fill="#99004d" d="M406 168h14v14h-14z"/><path fill="#99004a" d="M420 168h14v14h-14z"/><path fill="#990046" d="M434 168h14v14h-14z"/><path fill="#990043" d="M448 168h14v14h-14z"/><path fill="#990040" d="M462 168h14v14h-14z"/><path fill="#99003d" d="M476 168h14v14h-14z"/><path fill="#99003a" d="M490 168h14v14h-14z"/><path fill="#990038" d="M504 168h14v14h-14z"/><path fill="#990036" d="M518 168h14v14h-14z"/><path fill="#990034" d="M532 168h14v14h-14z"/><path fill="#990032" d="M546 168h14v14h-14z"/><path fill="#990030" d="M560 168h14v14h-14z"/><path fill="#99002e" d="M574 168h14v14h-14z"/><path fill="#99002d" d="M588 168h14v14h-14z"/><path fill="#99002b" d="M602 168h14v14h-14z"/><path fill="#990029" d="M616 168h14v14h-14z"/><path fill="#990028" d="M630 168h14v14h-14z"/><path fill="#006b99" d="M0 182h14v14h-14z"/><path fill="#006899" d="M14 182h14v14h-14z"/><path fill="#006599" d="M28 182h14v14h-14z"/><path fill="#006299" d="M42 182h14v14h-14z"/><path fill="#005f99" d="M56 182h14v14h-14z"/><path fill="#005c99" d="M70 182h14v14h-14z"/><path fill="#005999" d="M84 182h14v14h-14z"/><path fill="#005699" d="M98 182h14v14h-14z"/><path fill="#005399" d="M112 182h14v14h-14z"/><path fill="#004f99" d="M126 182h14v14h-14z"/><path fill="#004c99" d="M140 182h14v14h-14z"/><path fill="#064899" d="M154 182h14v14h-14z"/><path fill="#1b4499" d="M168 182h14v14h-14z"/><path fill="#2d4199" d="M182 182h14v14h-14z"/><path fill="#3d3d99" d="M196 182h14v14h-14z"/><path fill="#4c3999" d="M210 182h14v14h-14z"/><path fill="#5b3499" d="M224 182h14v14h-14z"/><path fill="#6a3099" d="M238 182h14v14h-14z"/><path fill="#782b99" d="M252 182h14v14h-14z"/><path fill="#862799" d="M266 182h14v14h-14z"/><path fill="#942299" d="M280 182h14v14h-14z"/><path fill="#991b90" d="M294 182h14v14h-14z"/><path fill="#991485" d="M308 182h14v14h-14z"/><path fill="#990d7b" d="M322 182h14v14h-14z"/><path fill="#990773" d="M336 182h14v14h-14z"/><path fill="#99006b" d="M350 182h14v14h-14z"/><path fill="#990065" d="M364 182h14v14h-14z"/><path fill="#99005f" d="M378 182h14v14h-14z"/><path fill="#99005a" d="M392 182h14v14h-14z"/><path fill="#990055" d="M406 182h14v14h-14z"/><path fill="#990051" d="M420 182h14v14h-14z"/><path fill="#99004d" d="M434 182h14v14h-14z"/><path fill="#99004a" d="M448 182h14v14h-14z"/><path fill="#990046" d="M462 182h14v14h-14z"/><path fill="#990043" d="M476 182h14v14h-14z"/><path fill="#990041" d="M490 182h14v14h-14z"/><path fill="#99003e" d="M504 182h14v14h-14z"/><path fill="#99003c" d="M518 182h14v14h-14z"/><path fill="#990039" d="M532 182h14v14h-14z"/><path fill="#990037" d="M546 182h14v14h-14z"/><path fill="#990035" d="M560 182h14v14h-14z"/><path fill="#990033" d="M574 182h14v14h-14z"/><path fill="#990032" d="M588 182h14v14h-14z"/><path fill="#990030" d="M602 182h14v14h-14z"/><path fill="#99002e" d="M616 182h14v14h-14z"/><path fill="#99002d" d="M630 182h14v14h-14z"/><path fill="#006199" d="M0 196h14v14h-14z"/><path fill="#005e99" d="M14 196h14v14h-14z"/><path fill="#005c99" d="M28 196h14v14h-14z"/><path fill="#005999" d="M42 196h14v14h-14z"/><path fill="#005699" d="M56 196h14v14h-14z"/><path fill="#005399" d="M70 196h14v14h-14z"/><path fill="#005099" d="M84 196h14v14h-14z"/><path fill="#004d99" d="M98 196h14v14h-14z"/><path fill="#004a99" d="M112 196h14v14h-14z"/><path fill="#004699" d="M126 196h14v14h-14z"/><path fill="#004399" d="M140 196h14v14h-14z"/><path fill="#013f99" d="M154 196h14v14h-14z"/><path fill="#163c99" d="M168 196h14v14h-14z"/><path fill="#273899" d="M182 196h14v14h-14z"/><path fill="#363499" d="M196 196h14v14h-14z"/><path fill="#453199" d="M210 196h14v14h-14z"/><path fill="#532c99" d="M224 196h14v14h-14z"/><path fill="#602899" d="M238 196h14v14h-14z"/><path fill="#6e2499" d="M252 196h14v14h-14z"/><path fill="#7b1f99" d="M266 196h14v14h-14z"/><path fill="#881a99" d="M280 196h14v14h-14z"/><path fill="#951599" d="M294 196h14v14h-14z"/><path fill="#990e91" d="M308 196h14v14h-14z"/><path fill="#990886" d="M322 196h14v14h-14z"/><path fill="#99007d" d="M336 196h14v14h-14z"/><path fill="#990075" d="M350 196h14v14h-14z"/><path fill="#99006e" d="M364 196h14v14h-14z"/><path fill="#990068" d="M378 196h14v14h-14z"/><path fill="#990062" d="M392 196h14v14h-14z"/><path fill="#99005d" d="M406 196h14v14h-14z"/><path fill="#990059" d="M420 196h14v14h-14z"/><path fill="#990054" d="M434 196h14v14h-14z"/><path fill="#990051" d="M448 196h14v14h-14z"/><path fill="#99004d" d="M462 196h14v14h-14z"/><path fill="#99004a" d="M476 196h14v14h-14z"/><path fill="#990047" d="M490 196h14v14h-14z"/><path fill="#990044" d="M504 196h14v14h-14z"/><path fill="#990041" d="M518 196h14v14h-14z"/><path fill="#99003f" d="M532 196h14v14h-14z"/><path fill="#99003d" d="M546 196h14v14h-14z"/><path fill="#99003b" d="M560 196h14v14h-14z"/><path fill="#990039" d="M574 196h14v14h-14z"/><path fill="#990037" d="M588 196h14v14h-14z"/><path fill="#990035" d="M602 196h14v14h-14z"/><path fill="#990033" d="M616 196h14v14h-14z"/><path fill="#990031" d="M630 196h14v14h-14z"/><path fill="#005999" d="M0 210h14v14h-14z"/><path fill="#005699" d="M14 210h14v14h-14z"/><path fill="#005399" d="M28 210h14v14h-14z"/><path fill="#005099" d="M42 210h14v14h-14z"/><path fill="#004e99" d="M56 210h14v14h-14z"/><path fill="#004b99" d="M70 210h14v14h-14z"/><path fill="#004899" d="M84 210h14v14h-14z"/><path fill="#004599" d="M98 210h14v14h-14z"/><path fill="#004299" d="M112 210h14v14h-14z"/><path fill="#003f99" d="M126 210h14v14h-14z"/><path fill="#003b99" d="M140 210h14v14h-14z"/><path fill="#003899" d="M154 210h14v14h-14z"/><path fill="#123499" d="M168 210h14v14h-14z"/><path fill="#223199" d="M182 210h14v14h-14z"/><path fill="#312d99" d="M196 210h14v14h-14z"/><path fill="#3e2999" d="M210 210h14v14h-14z"/><path fill="#4b2599" d="M224 210h14v14h-14z"/><path fill="#582199" d="M238 210h14v14h-14z"/><path fill="#641d99" d="M252 210h14v14h-14z"/><path fill="#711899" d="M266 210h14v14h-14z"/><path fill="#7d1499" d="M280 210h14v14h-14z"/><path fill="#890e99" d="M294 210h14v14h-14z"/><path fill="#950899" d="M308 210h14v14h-14z"/><path fill="#990092" d="M322 210h14v14h-14z"/><path fill="#990088" d="M336 210h14v14h-14z"/><path fill="#99007f" d="M350 210h14v14h-14z"/><path fill="#990077" d="M364 210h14v14h-14z"/><path fill="#990071" d="M378 210h14v14h-14z"/><path fill="#99006a" d="M392 210h14v14h-14z"/><path fill="#990065" d="M406 210h14v14h-14z"/><path fill="#990060" d="M420 210h14v14h-14z"/><path fill="#99005c" d="M434 210h14v14h-14z"/><path fill="#990057" d="M448 210h14v14h-14z"/><path fill="#990054" d="M462 210h14v14h-14z"/><path fill="#990050" d="M476 210h14v14h-14z"/><path fill="#99004d" d="M490 210h14v14h-14z"/><path fill="#99004a" d="M504 210h14v14h-14z"/><path fill="#990047" d="M518 210h14v14h-14z"/><path fill="#990045" d="M532 210h14v14h-14z"/><path fill="#990042" d="M546 210h14v14h-14z"/><path fill="#990040" d="M560 210h14v14h-14z"/><path fill="#99003e" d="M574 210h14v14h-14z"/><path fill="#99003c" d="M588 210h14v14h-14z"/><path fill="#99003a" d="M602 210h14v14h-14z"/><path fill="#990038" d="M616 210h14v14h-14z"/><path fill="#990036" d="M630 210h14v14h-14z"/><path fill="#005199" d="M0 224h14v14h-14z"/><path fill="#004e99" d="M14 224h14v14h-14z"/><path fill="#004c99" d="M28 224h14v14h-14z"/><path fill="#004999" d="M42 224h14v14h-14z"/><path fill="#004699" d="M56 224h14v14h-14z"/><path fill="#004499" d="M70 224h14v14h-14z"/><path fill="#004199" d="M84 224h14v14h-14z"/><path fill="#003e99" d="M98 224h14v14h-14z"/><path fill="#003b99" d="M112 224h14v14h-14z"/><path fill="#003899" d="M126 224h14v14h-14z"/><path fill="#003599" d="M140 224h14v14h-14z"/><path fill="#003199" d="M154 224h14v14h-14z"/><path fill="#0f2e99" d="M168 224h14v14h-14z"/><path fill="#1e2a99" d="M182 224h14v14h-14z"/><path fill="#2c2799" d="M196 224h14v14h-14z"/><path fill="#392399" d="M210 224h14v14h-14z"/><path fill="#451f99" d="M224 224h14v14h-14z"/><path fill="#511b99" d="M238 224h14v14h-14z"/><path fill="#5d1799" d="M252 224h14v14h-14z"/><path fill="#681299" d="M266 224h14v14h-14z"/><path fill="#740d99" d="M280 224h14v14h-14z"/><path fill="#7f0899" d="M294 224h14v14h-14z"/><path fill="#8a0199" d="M308 224h14v14h-14z"/><path fill="#950099" d="M322 224h14v14h-14z"/><path fill="#990092" d="M336 224h14v14h-14z"/><path fill="#990089" d="M350 224h14v14h-14z"/><path fill="#990081" d="M364 224h14v14h-14z"/><path fill="#990079" d="M378 224h14v14h-14z"/><path fill="#990073" d="M392 224h14v14h-14z"/><path fill="#99006d" d="M406 224h14v14h-14z"/><path fill="#990068" d="M420 224h14v14h-14z"/><path fill="#990063" d="M434 224h14v14h-14z"/><path fill="#99005e" d="M448 224h14v14h-14z"/><path fill="#99005a" d="M462 224h14v14h-14z"/><path fill="#990056" d="M476 224h14v14h-14z"/><path fill="#990053" d="M490 224h14v14h-14z"/><path fill="#990050" d="M504 224h14v14h-14z"/><path fill="#99004d" d="M518 224h14v14h-14z"/><path fill="#99004a" d="M532 224h14v14h-14z"/><path fill="#990047" d="M546 224h14v14h-14z"/><path fill="#990045" d="M560 224h14v14h-14z"/><path fill="#990043" d="M574 224h14v14h-14z"/><path fill="#990041" d="M588 224h14v14h-14z"/><path fill="#99003e" d="M602 224h14v14h-14z"/><path fill="#99003d" d="M616 224h14v14h-14z"/><path fill="#99003b" d="M630 224h14v14h-14z"/><path fill="#004a99" d="M0 238h14v14h-14z"/><path fill="#004899" d="M14 238h14v14h-14z"/><path fill="#004599" d="M28 238h14v14h-14z"/><path fill="#004399" d="M42 238h14v14h-14z"/><path fill="#004099" d="M56 238h14v14h-14z"/><path fill="#003d99" d="M70 238h14v14h-14z"/><path fill="#003a99" d="M84 238h14v14h-14z"/><path fill="#003799" d="M98 238h14v14h-14z"/><path fill="#003599" d="M112 238h14v14h-14z"/><path fill="#003299" d="M126 238h14v14h-14z"/><path fill="#002e99" d="M140 238h14v14h-14z"/><path fill="#002b99" d="M154 238h14v14h-14z"/><path fill="#0b2899" d="M168 238h14v14h-14z"/><path fill="#1a2599" d="M182 238h14v14h-14z"/><path fill="#272199" d="M196 238h14v14h-14z"/><path fill="#341d99" d="M210 238h14v14h-14z"/><path fill="#3f1a99" d="M224 238h14v14h-14z"/><path fill="#4b1699" d="M238 238h14v14h-14z"/><path fill="#561199" d="M252 238h14v14h-14z"/><path fill="#610d99" d="M266 238h14v14h-14z"/><path fill="#6b0799" d="M280 238h14v14h-14z"/><path fill="#760199" d="M294 238h14v14h-14z"/><path fill="#800099" d="M308 238h14v14h-14z"/><path fill="#8b0099" d="M322 238h14v14h-14z"/><path fill="#950099" d="M336 238h14v14h-14z"/><path fill="#990093" d="M350 238h14v14h-14z"/><path fill="#99008a" d="M364 238h14v14h-14z"/><path fill="#990082" d="M378 238h14v14h-14z"/><path fill="#99007b" d="M392 238h14v14h-14z"/><path fill="#990075" d="M406 238h14v14h-14z"/><path fill="#99006f" d="M420 238h14v14h-14z"/><path fill="#99006a" d="M434 238h14v14h-14z"/><path fill="#990065" d="M448 238h14v14h-14z"/><path fill="#990061" d="M462 238h14v14h-14z"/><path fill="#99005d" d="M476 238h14v14h-14z"/><path fill="#990059" d="M490 238h14v14h-14z"/><path fill="#990056" d="M504 238h14v14h-14z"/><path fill="#990052" d="M518 238h14v14h-14z"/><path fill="#990050" d="M532 238h14v14h-14z"/><path fill="#99004d" d="M546 238h14v14h-14z"/><path fill="#99004a" d="M560 238h14v14h-14z"/><path fill="#990048" d="M574 238h14v14h-14z"/><path fill="#990045" d="M588 238h14v14h-14z"/><path fill="#990043" d="M602 238h14v14h-14z"/><path fill="#990041" d="M616 238h14v14h-14z"/><path fill="#99003f" d="M630 238h14v14h-14z"/><path fill="#004499" d="M0 252h14v14h-14z"/><path fill="#004299" d="M14 252h14v14h-14z"/><path fill="#003f99" d="M28 252h14v14h-14z"/><path fill="#003d99" d="M42 252h14v14h-14z"/><path fill="#003a99" d="M56 252h14v14h-14z"/><path fill="#003799" d="M70 252h14v14h-14z"/><path fill="#003599" d="M84 252h14v14h-14z"/><path fill="#003299" d="M98 252h14v14h-14z"/><path fill="#002f99" d="M112 252h14v14h-14z"/><path fill="#002c99" d="M126 252h14v14h-14z"/><path fill="#002999" d="M140 252h14v14h-14z"/><path fill="#002699" d="M154 252h14v14h-14z"/><path fill="#082399" d="M168 252h14v14h-14z"/><path fill="#171f99" d="M182 252h14v14h-14z"/><path fill="#231c99" d="M196 252h14v14h-14z"/><path fill="#2f1899" d="M210 252h14v14h-14z"/><path fill="#3a1499" d="M224 252h14v14h-14z"/><path fill="#451099" d="M238 252h14v14h-14z"/><path fill="#500c99" d="M252 252h14v14h-14z"/><path fill="#5a0799" d="M266 252h14v14h-14z"/><path fill="#640199" d="M280 252h14v14h-14z"/><path fill="#6e0099" d="M294 252h14v14h-14z"/><path fill="#780099" d="M308 252h14v14h-14z"/><path fill="#820099" d="M322 252h14v14h-14z"/><path fill="#8c0099" d="M336 252h14v14h-14z"/><path fill="#950099" d="M350 252h14v14h-14z"/><path fill="#990093" d="M364 252h14v14h-14z"/><path fill="#99008b" d="M378 252h14v14h-14z"/><path fill="#990083" d="M392 252h14v14h-14z"/><path fill="#99007d" d="M406 252h14v14h-14z"/><path fill="#990076" d="M420 252h14v14h-14z"/><path fill="#990071" d="M434 252h14v14h-14z"/><path fill="#99006c" d="M448 252h14v14h-14z"/><path fill="#990067" d="M462 252h14v14h-14z"/><path fill="#990063" d="M476 252h14v14h-14z"/><path fill="#99005f" d="M490 252h14v14h-14z"/><path fill="#99005c" d="M504 252h14v14h-14z"/><path fill="#990058" d="M518 252h14v14h-14z"/><path fill="#990055" d="M532 252h14v14h-14z"/><path fill="#990052" d="M546 252h14v14h-14z"/><path fill="#99004f" d="M560 252h14v14h-14z"/><path fill="#99004d" d="M574 252h14v14h-14z"/><path fill="#99004a" d="M588 252h14v14h-14z"/><path fill="#990048" d="M602 252h14v14h-14z"/><path fill="#990046" d="M616 252h14v14h-14z"/><path fill="#990044" d="M630 252h14v14h-14z"/><path fill="#003e99" d="M0 266h14v14h-14z"/><path fill="#003c99" d="M14 266h14v14h-14z"/><path fill="#003a99" d="M28 266h14v14h-14z"/><path fill="#003799" d="M42 266h14v14h-14z"/><path fill="#003599" d="M56 266h14v14h-14z"/><path fill="#003299" d="M70 266h14v14h-14z"/><path fill="#002f99" d="M84 266h14v14h-14z"/><path fill="#002d99" d="M98 266h14v14h-14z"/><path fill="#002a99" d="M112 266h14v14h-14z"/><path fill="#002799" d="M126 266h14v14h-14z"/><path fill="#002499" d="M140 266h14v14h-14z"/><path fill="#002199" d="M154 266h14v14h-14z"/><path fill="#051e99" d="M168 266h14v14h-14z"/><path fill="#131a99" d="M182 266h14v14h-14z"/><path fill="#201799" d="M196 266h14v14h-14z"/><path fill="#2b1399" d="M210 266h14v14h-14z"/><path fill="#361099" d="M224 266h14v14h-14z"/><path fill="#400b99" d="M238 266h14v14h-14z"/><path fill="#4a0799" d="M252 266h14v14h-14z"/><path fill="#540199" d="M266 266h14v14h-14z"/><path fill="#5e0099" d="M280 266h14v14h-14z"/><path fill="#670099" d="M294 266h14v14h-14z"/><path fill="#710099" d="M308 266h14v14h-14z"/><path fill="#7a0099" d="M322 266h14v14h-14z"/><path fill="#830099" d="M336 266h14v14h-14z"/><path fill="#8c0099" d="M350 266h14v14h-14z"/><path fill="#960099" d="M364 266h14v14h-14z"/><path fill="#990094" d="M378 266h14v14h-14z"/><path fill="#99008c" d="M392 266h14v14h-14z"/><path fill="#990084" d="M406 266h14v14h-14z"/><path fill="#99007e" d="M420 266h14v14h-14z"/><path fill="#990078" d="M434 266h14v14h-14z"/><path fill="#990073" d="M448 266h14v14h-14z"/><path fill="#99006e" d="M462 266h14v14h-14z"/><path fill="#990069" d="M476 266h14v14h-14z"/><path fill="#990065" d="M490 266h14v14h-14z"/><path fill="#990061" d="M504 266h14v14h-14z"/><path fill="#99005e" d="M518 266h14v14h-14z"/><path fill="#99005a" d="M532 266h14v14h-14z"/><path fill="#990057" d="M546 266h14v14h-14z"/><path fill="#990054" d="M560 266h14v14h-14z"/><path fill="#990052" d="M574 266h14v14h-14z"/><path fill="#99004f" d="M588 266h14v14h-14z"/><path fill="#99004d" d="M602 266h14v14h-14z"/><path fill="#99004a" d="M616 266h14v14h-14z"/><path fill="#990048" d="M630 266h14v14h-14z"/><path fill="#003999" d="M0 280h14v14h-14z"/><path fill="#003799" d="M14 280h14v14h-14z"/><path fill="#003599" d="M28 280h14v14h-14z"/><path fill="#003299" d="M42 280h14v14h-14z"/><path fill="#003099" d="M56 280h14v14h-14z"/><path fill="#002d99" d="M70 280h14v14h-14z"/><path fill="#002b99" d="M84 280h14v14h-14z"/><path fill="#002899" d="M98 280h14v14h-14z"/><path fill="#002599" d="M112 280h14v14h-14z"/><path fill="#002299" d="M126 280h14v14h-14z"/><path fill="#001f99" d="M140 280h14v14h-14z"/><path fill="#001c99" d="M154 280h14v14h-14z"/><path fill="#011999" d="M168 280h14v14h-14z"/><path fill="#111699" d="M182 280h14v14h-14z"/><path fill="#1d1399" d="M196 280h14v14h-14z"/><path fill="#270f99" d="M210 280h14v14h-14z"/><path fill="#320b99" d="M224 280h14v14h-14z"/><path fill="#3c0799" d="M238 280h14v14h-14z"/><path fill="#450199" d="M252 280h14v14h-14z"/><path fill="#4f0099" d="M266 280h14v14h-14z"/><path fill="#580099" d="M280 280h14v14h-14z"/><path fill="#610099" d="M294 280h14v14h-14z"/><path fill="#6a0099" d="M308 280h14v14h-14z"/><path fill="#730099" d="M322 280h14v14h-14z"/><path fill="#7c0099" d="M336 280h14v14h-14z"/><path fill="#840099" d="M350 280h14v14h-14z"/><path fill="#8d0099" d="M364 280h14v14h-14z"/><path fill="#960099" d="M378 280h14v14h-14z"/><path fill="#990094" d="M392 280h14v14h-14z"/><path fill="#99008c" d="M406 280h14v14h-14z"/><path fill="#990085" d="M420 280h14v14h-14z"/><path fill="#99007f" d="M434 280h14v14h-14z"/><path fill="#99007a" d="M448 280h14v14h-14z"/><path fill="#990074" d="M462 280h14v14h-14z"/><path fill="#990070" d="M476 280h14v14h-14z"/><path fill="#99006b" d="M490 280h14v14h-14z"/><path fill="#990067" d="M504 280h14v14h-14z"/><path fill="#990063" d="M518 280h14v14h-14z"/><path fill="#990060" d="M532 280h14v14h-14z"/><path fill="#99005d" d="M546 280h14v14h-14z"/><path fill="#990059" d="M560 280h14v14h-14z"/><path fill="#990057" d="M574 280h14v14h-14z"/><path fill="#990054" d="M588 280h14v14h-14z"/><path fill="#990051" d="M602 280h14v14h-14z"/><path fill="#99004f" d="M616 280h14v14h-14z"/><path fill="#99004d" d="M630 280h14v14h-14z"/><path fill="#003599" d="M0 294h14v14h-14z"/><path fill="#003299" d="M14 294h14v14h-14z"/><path fill="#003099" d="M28 294h14v14h-14z"/><path fill="#002e99" d="M42 294h14v14h-14z"/><path fill="#002b99" d="M56 294h14v14h-14z"/><path fill="#002999" d="M70 294h14v14h-14z"/><path fill="#002699" d="M84 294h14v14h-14z"/><path fill="#002399" d="M98 294h14v14h-14z"/><path fill="#002199" d="M112 294h14v14h-14z"/><path fill="#001e99" d="M126 294h14v14h-14z"/><path fill="#001b99" d="M140 294h14v14h-14z"/><path fill="#001899" d="M154 294h14v14h-14z"/><path fill="#001599" d="M168 294h14v14h-14z"/><path fill="#0e1299" d="M182 294h14v14h-14z"/><path fill="#1a0e99" d="M196 294h14v14h-14z"/><path fill="#240a99" d="M210 294h14v14h-14z"/><path fill="#2e0699" d="M224 294h14v14h-14z"/><path fill="#380199" d="M238 294h14v14h-14z"/><path fill="#410099" d="M252 294h14v14h-14z"/><path fill="#4a0099" d="M266 294h14v14h-14z"/><path fill="#530099" d="M280 294h14v14h-14z"/><path fill="#5b0099" d="M294 294h14v14h-14z"/><path fill="#640099" d="M308 294h14v14h-14z"/><path fill="#6c0099" d="M322 294h14v14h-14z"/><path fill="#750099" d="M336 294h14v14h-14z"/><path fill="#7d0099" d="M350 294h14v14h-14z"/><path fill="#850099" d="M364 294h14v14h-14z"/><path fill="#8e0099" d="M378 294h14v14h-14z"/><path fill="#960099" d="M392 294h14v14h-14z"/><path fill="#990094" d="M406 294h14v14h-14z"/><path fill="#99008d" d="M420 294h14v14h-14z"/><path fill="#990086" d="M434 294h14v14h-14z"/><path fill="#990080" d="M448 294h14v14h-14z"/><path fill="#99007b" d="M462 294h14v14h-14z"/><path fill="#990076" d="M476 294h14v14h-14z"/><path fill="#990071" d="M490 294h14v14h-14z"/><path fill="#99006d" d="M504 294h14v14h-14z"/><path fill="#990069" d="M518 294h14v14h-14z"/><path fill="#990065" d="M532 294h14v14h-14z"/><path fill="#990062" d="M546 294h14v14h-14z"/><path fill="#99005e" d="M560 294h14v14h-14z"/><path fill="#99005b" d="M574 294h14v14h-14z"/><path fill="#990059" d="M588 294h14v14h-14z"/><path fill="#990056" d="M602 294h14v14h-14z"/><path fill="#990053" d="M616 294h14v14h-14z"/><path fill="#990051" d="M630 294h14v14h-14z"/><path fill="#003099" d="M0 308h14v14h-14z"/><path fill="#002e99" d="M14 308h14v14h-14z"/><path fill="#002c99" d="M28 308h14v14h-14z"/><path fill="#002999" d="M42 308h14v14h-14z"/><path fill="#002799" d="M56 308h14v14h-14z"/><path fill="#002599" d="M70 308h14v14h-14z"/><path fill="#002299" d="M84 308h14v14h-14z"/><path fill="#001f99" d="M98 308h14v14h-14z"/><path fill="#001d99" d="M112 308h14v14h-14z"/><path fill="#001a99" d="M126 308h14v14h-14z"/><path fill="#001799" d="M140 308h14v14h-14z"/><path fill="#001499" d="M154 308h14v14h-14z"/><path fill="#001199" d="M168 308h14v14h-14z"/><path fill="#0b0e99" d="M182 308h14v14h-14z"/><path fill="#170a99" d="M196 308h14v14h-14z"/><path fill="#210699" d="M210 308h14v14h-14z"/><path fill="#2b0199" d="M224 308h14v14h-14z"/><path fill="#340099" d="M238 308h14v14h-14z"/><path fill="#3d0099" d="M252 308h14v14h-14z"/><path fill="#450099" d="M266 308h14v14h-14z"/><path fill="#4e0099" d="M280 308h14v14h-14z"/><path fill="#560099" d="M294 308h14v14h-14z"/><path fill="#5e0099" d="M308 308h14v14h-14z"/><path fill="#660099" d="M322 308h14v14h-14z"/><path fill="#6f0099" d="M336 308h14v14h-14z"/><path fill="#760099" d="M350 308h14v14h-14z"/><path fill="#7e0099" d="M364 308h14v14h-14z"/><path fill="#860099" d="M378 308h14v14h-14z"/><path fill="#8e0099" d="M392 308h14v14h-14z"/><path fill="#960099" d="M406 308h14v14h-14z"/><path fill="#990095" d="M420 308h14v14h-14z"/><path fill="#99008e" d="M434 308h14v14h-14z"/><path fill="#990087" d="M448 308h14v14h-14z"/><path fill="#990081" d="M462 308h14v14h-14z"/><path fill="#99007c" d="M476 308h14v14h-14z"/><path fill="#990077" d="M490 308h14v14h-14z"/><path fill="#990073" d="M504 308h14v14h-14z"/><path fill="#99006f" d="M518 308h14v14h-14z"/><path fill="#99006b" d="M532 308h14v14h-14z"/><path fill="#990067" d="M546 308h14v14h-14z"/><path fill="#990064" d="M560 308h14v14h-14z"/><path fill="#990060" d="M574 308h14v14h-14z"/><path fill="#99005d" d="M588 308h14v14h-14z"/><path fill="#99005b" d="M602 308h14v14h-14z"/><path fill="#990058" d="M616 308h14v14h-14z"/><path fill="#990055" d="M630 308h14v14h-14z"/><path fill="#002c99" d="M0 322h14v14h-14z"/><path fill="#002a99" d="M14 322h14v14h-14z"/><path fill="#002899" d="M28 322h14v14h-14z"/><path fill="#002599" d="M42 322h14v14h-14z"/><path fill="#002399" d="M56 322h14v14h-14z"/><path fill="#002199" d="M70 322h14v14h-14z"/><path fill="#001e99" d="M84 322h14v14h-14z"/><path fill="#001c99" d="M98 322h14v14h-14z"/><path fill="#001999" d="M112 322h14v14h-14z"/><path fill="#001699" d="M126 322h14v14h-14z"/><path fill="#001399" d="M140 322h14v14h-14z"/><path fill="#001099" d="M154 322h14v14h-14z"/><path fill="#000d99" d="M168 322h14v14h-14z"/><path fill="#090a99" d="M182 322h14v14h-14z"/><path fill="#140699" d="M196 322h14v14h-14z"/><path fill="#1e0199" d="M210 322h14v14h-14z"/><path fill="#280099" d="M224 322h14v14h-14z"/><path fill="#300099" d="M238 322h14v14h-14z"/><path fill="#390099" d="M252 322h14v14h-14z"/><path fill="#410099" d="M266 322h14v14h-14z"/><path fill="#4a0099" d="M280 322h14v14h-14z"/><path fill="#520099" d="M294 322h14v14h-14z"/><path fill="#590099" d="M308 322h14v14h-14z"/><path fill="#610099" d="M322 322h14v14h-14z"/><path fill="#690099" d="M336 322h14v14h-14z"/><path fill="#700099" d="M350 322h14v14h-14z"/><path fill="#780099" d="M364 322h14v14h-14z"/><path fill="#800099" d="M378 322h14v14h-14z"/><path fill="#870099" d="M392 322h14v14h-14z"/><path fill="#8f0099" d="M406 322h14v14h-14z"/><path fill="#960099" d="M420 322h14v14h-14z"/><path fill="#990095" d="M434 322h14v14h-14z"/><path fill="#99008e" d="M448 322h14v14h-14z"/><path fill="#990088" d="M462 322h14v14h-14z"/><path fill="#990082" d="M476 322h14v14h-14z"/><path fill="#99007d" d="M490 322h14v14h-14z"/><path fill="#990079" d="M504 322h14v14h-14z"/><path fill="#990074" d="M518 322h14v14h-14z"/><path fill="#990070" d="M532 322h14v14h-14z"/><path fill="#99006c" d="M546 322h14v14h-14z"/><path fill="#990069" d="M560 322h14v14h-14z"/><path fill="#990065" d="M574 322h14v14h-14z"/><path fill="#990062" d="M588 322h14v14h-14z"/><path fill="#99005f" d="M602 322h14v14h-14z"/><path fill="#99005c" d="M616 322h14v14h-14z"/><path fill="#99005a" d="M630 322h14v14h-14z"/><path fill="#002899" d="M0 336h14v14h-14z"/><path fill="#002699" d="M14 336h14v14h-14z"/><path fill="#002499" d="M28 336h14v14h-14z"/><path fill="#002299" d="M42 336h14v14h-14z"/><path fill="#001f99" d="M56 336h14v14h-14z"/><path fill="#001d99" d="M70 336h14v14h-14z"/><path fill="#001b99" d="M84 336h14v14h-14z"/><path fill="#001899" d="M98 336h14v14h-14z"/><path fill="#001599" d="M112 336h14v14h-14z"/><path fill="#001399" d="M126 336h14v14h-14z"/><path fill="#001099" d="M140 336h14v14h-14z"/><path fill="#000d99" d="M154 336h14v14h-14z"/><path fill="#000999" d="M168 336h14v14h-14z"/><path fill="#060699" d="M182 336h14v14h-14z"/><path fill="#120199" d="M196 336h14v14h-14z"/><path fill="#1c0099" d="M210 336h14v14h-14z"/><path fill="#250099" d="M224 336h14v14h-14z"/><path fill="#2d0099" d="M238 336h14v14h-14z"/><path fill="#360099" d="M252 336h14v14h-14z"/><path fill="#3e0099" d="M266 336h14v14h-14z"/><path fill="#460099" d="M280 336h14v14h-14z"/><path fill="#4d0099" d="M294 336h14v14h-14z"/><path fill="#550099" d="M308 336h14v14h-14z"/><path fill="#5c0099" d="M322 336h14v14h-14z"/><path fill="#640099" d="M336 336h14v14h-14z"/><path fill="#6b0099" d="M350 336h14v14h-14z"/><path fill="#720099" d="M364 336h14v14h-14z"/><path fill="#7a0099" d="M378 336h14v14h-14z"/><path fill="#810099" d="M392 336h14v14h-14z"/><path fill="#880099" d="M406 336h14v14h-14z"/><path fill="#8f0099" d="M420 336h14v14h-14z"/><path fill="#960099" d="M434 336h14v14h-14z"/><path fill="#990095" d="M448 336h14v14h-14z"/><path fill="#99008f" d="M462 336h14v14h-14z"/><path fill="#990089" d="M476 336h14v14h-14z"/><path fill="#990083" d="M490 336h14v14h-14z"/><path fill="#99007e" d="M504 336h14v14h-14z"/><path fill="#99007a" d="M518 336h14v14h-14z"/><path fill="#990075" d="M532 336h14v14h-14z"/><path fill="#990071" d="M546 336h14v14h-14z"/><path fill="#99006e" d="M560 336h14v14h-14z"/><path fill="#99006a" d="M574 336h14v14h-14z"/><path fill="#990067" d="M588 336h14v14h-14z"/><path fill="#990064" d="M602 336h14v14h-14z"/><path fill="#990061" d="M616 336h14v14h-14z"/><path fill="#99005e" d="M630 336h14v14h-14z"/><path fill="#002599" d="M0 350h14v14h-14z"/><path fill="#002399" d="M14 350h14v14h-14z"/><path fill="#002199" d="M28 350h14v14h-14z"/><path fill="#001e99" d="M42 350h14v14h-14z"/><path fill="#001c99" d="M56 350h14v14h-14z"/><path fill="#001a99" d="M70 350h14v14h-14z"/><path fill="#001799" d="M84 350h14v14h-14z"/><path fill="#001599" d="M98 350h14v14h-14z"/><path fill="#001299" d="M112 350h14v14h-14z"/><path fill="#000f99" d="M126 350h14v14h-14z"/><path fill="#000c99" d="M140 350h14v14h-14z"/><path fill="#000999" d="M154 350h14v14h-14z"/><path fill="#000699" d="M168 350h14v14h-14z"/><path fill="#040199" d="M182 350h14v14h-14z"/><path fill="#100099" d="M196 350h14v14h-14z"/><path fill="#190099" d="M210 350h14v14h-14z"/><path fill="#220099" d="M224 350h14v14h-14z"/><path fill="#2a0099" d="M238 350h14v14h-14z"/><path fill="#320099" d="M252 350h14v14h-14z"/><path fill="#3a0099" d="M266 350h14v14h-14z"/><path fill="#420099" d="M280 350h14v14h-14z"/><path fill="#490099" d="M294 350h14v14h-14z"/><path fill="#510099" d="M308 350h14v14h-14z"/><path fill="#580099" d="M322 350h14v14h-14z"/><path fill="#5f0099" d="M336 350h14v14h-14z"/><path fill="#660099" d="M350 350h14v14h-14z"/><path fill="#6d0099" d="M364 350h14v14h-14z"/><path fill="#740099" d="M378 350h14v14h-14z"/><path fill="#7b0099" d="M392 350h14v14h-14z"/><path fill="#820099" d="M406 350h14v14h-14z"/><path fill="#890099" d="M420 350h14v14h-14z"/><path fill="#8f0099" d="M434 350h14v14h-14z"/><path fill="#960099" d="M448 350h14v14h-14z"/><path fill="#990095" d="M462 350h14v14h-14z"/><path fill="#99008f" d="M476 350h14v14h-14z"/><path fill="#990089" d="M490 350h14v14h-14z"/><path fill="#990084" d="M504 350h14v14h-14z"/><path fill="#99007f" d="M518 350h14v14h-14z"/><path fill="#99007b" d="M532 350h14v14h-14z"/><path fill="#990077" d="M546 350h14v14h-14z"/><path fill="#990073" d="M560 350h14v14h-14z"/><path fill="#99006f" d="M574 350h14v14h-14z"/><path fill="#99006c" d="M588 350h14v14h-14z"/><path fill="#990068" d="M602 350h14v14h-14z"/><path fill="#990065" d="M616 350h14v14h-14z"/><path fill="#990062" d="M630 350h14v14h-14z"/><path fill="#002299" d="M0 364h14v14h-14z"/><path fill="#001f99" d="M14 364h14v14h-14z"/><path fill="#001d99" d="M28 364h14v14h-14z"/><path fill="#001b99" d="M42 364h14v14h-14z"/><path fill="#001999" d="M56 364h14v14h-14z"/><path fill="#001699" d="M70 364h14v14h-14z"/><path fill="#001499" d="M84 364h14v14h-14z"/><path fill="#001199" d="M98 364h14v14h-14z"/><path fill="#000f99" d="M112 364h14v14h-14z"/><path fill="#000c99" d="M126 364h14v14h-14z"/><path fill="#000999" d="M140 364h14v14h-14z"/><path fill="#000599" d="M154 364h14v14h-14z"/><path fill="#000199" d="M168 364h14v14h-14z"/><path fill="#010099" d="M182 364h14v14h-14z"/><path fill="#0d0099" d="M196 364h14v14h-14z"/><path fill="#170099" d="M210 364h14v14h-14z"/><path fill="#200099" d="M224 364h14v14h-14z"/><path fill="#280099" d="M238 364h14v14h-14z"/><path fill="#300099" d="M252 364h14v14h-14z"/><path fill="#370099" d="M266 364h14v14h-14z"/><path fill="#3e0099" d="M280 364h14v14h-14z"/><path fill="#460099" d="M294 364h14v14h-14z"/><path fill="#4d0099" d="M308 364h14v14h-14z"/><path fill="#540099" d="M322 364h14v14h-14z"/><path fill="#5b0099" d="M336 364h14v14h-14z"/><path fill="#610099" d="M350 364h14v14h-14z"/><path fill="#680099" d="M364 364h14v14h-14z"/><path fill="#6f0099" d="M378 364h14v14h-14z"/><path fill="#750099" d="M392 364h14v14h-14z"/><path fill="#7c0099" d="M406 364h14v14h-14z"/><path fill="#830099" d="M420 364h14v14h-14z"/><path fill="#890099" d="M434 364h14v14h-14z"/><path fill="#900099" d="M448 364h14v14h-14z"/><path fill="#960099" d="M462 364h14v14h-14z"/><path fill="#990095" d="M476 364h14v14h-14z"/><path fill="#99008f" d="M490 364h14v14h-14z"/><path fill="#99008a" d="M504 364h14v14h-14z"/><path fill="#990085" d="M518 364h14v14h-14z"/><path fill="#990080" d="M532 364h14v14h-14z"/><path fill="#99007c" d="M546 364h14v14h-14z"/><path fill="#990078" d="M560 364h14v14h-14z"/><path fill="#990074" d="M574 364h14v14h-14z"/><path fill="#990070" d="M588 364h14v14h-14z"/><path fill="#99006d" d="M602 364h14v14h-14z"/><path fill="#99006a" d="M616 364h14v14h-14z"/><path fill="#990067" d="M630 364h14v14h-14z"/><path fill="#001e99" d="M0 378h14v14h-14z"/><path fill="#001c99" d="M14 378h14v14h-14z"/><path fill="#001a99" d="M28 378h14v14h-14z"/><path fill="#001899" d="M42 378h14v14h-14z"/><path fill="#001699" d="M56 378h14v14h-14z"/><path fill="#001399" d="M70 378h14v14h-14z"/><path fill="#001199" d="M84 378h14v14h-14z"/><path fill="#000e99" d="M98 378h14v14h-14z"/><path fill="#000c99" d="M112 378h14v14h-14z"/><path fill="#000999" d="M126 378h14v14h-14z"/><path fill="#000599" d="M140 378h14v14h-14z"/><path fill="#000199" d="M154 378h14v14h-14z"/><path fill="#000099" d="M168 378h14v14h-14z"/><path fill="#000099" d="M182 378h14v14h-14z"/><path fill="#0b0099" d="M196 378h14v14h-14z"/><path fill="#150099" d="M210 378h14v14h-14z"/><path fill="#1d0099" d="M224 378h14v14h-14z"/><path fill="#250099" d="M238 378h14v14h-14z"/><path fill="#2d0099" d="M252 378h14v14h-14z"/><path fill="#340099" d="M266 378h14v14h-14z"/><path fill="#3b0099" d="M280 378h14v14h-14z"/><path fill="#420099" d="M294 378h14v14h-14z"/><path fill="#490099" d="M308 378h14v14h-14z"/><path fill="#500099" d="M322 378h14v14h-14z"/><path fill="#560099" d="M336 378h14v14h-14z"/><path fill="#5d0099" d="M350 378h14v14h-14z"/><path fill="#640099" d="M364 378h14v14h-14z"/><path fill="#6a0099" d="M378 378h14v14h-14z"/><path fill="#700099" d="M392 378h14v14h-14z"/><path fill="#770099" d="M406 378h14v14h-14z"/><path fill="#7d0099" d="M420 378h14v14h-14z"/><path fill="#830099" d="M434 378h14v14h-14z"/><path fill="#8a0099" d="M448 378h14v14h-14z"/><path fill="#900099" d="M462 378h14v14h-14z"/><path fill="#960099" d="M476 378h14v14h-14z"/><path fill="#990096" d="M490 378h14v14h-14z"/><path fill="#990090" d="M504 378h14v14h-14z"/><path fill="#99008b" d="M518 378h14v14h-14z"/><path fill="#990086" d="M532 378h14v14h-14z"/><path fill="#990081" d="M546 378h14v14h-14z"/><path fill="#99007d" d="M560 378h14v14h-14z"/><path fill="#990079" d="M574 378h14v14h-14z"/><path fill="#990075" d="M588 378h14v14h-14z"/><path fill="#990072" d="M602 378h14v14h-14z"/><path fill="#99006e" d="M616 378h14v14h-14z"/><path fill="#99006b" d="M630 378h14v14h-14z"/><path fill="#001b99" d="M0 392h14v14h-14z"/><path fill="#001999" d="M14 392h14v14h-14z"/><path fill="#001799" d="M28 392h14v14h-14z"/><path fill="#001599" d="M42 392h14v14h-14z"/><path fill="#001399" d="M56 392h14v14h-14z"/><path fill="#001099" d="M70 392h14v14h-14z"/><path fill="#000e99" d="M84 392h14v14h-14z"/><path fill="#000b99" d="M98 392h14v14h-14z"/><path fill="#000899" d="M112 392h14v14h-14z"/><path fill="#000599" d="M126 392h14v14h-14z"/><path fill="#000199" d="M140 392h14v14h-14z"/><path fill="#000099" d="M154 392h14v14h-14z"/><path fill="#000099" d="M168 392h14v14h-14z"/><path fill="#000099" d="M182 392h14v14h-14z"/><path fill="#090099" d="M196 392h14v14h-14z"/><path fill="#130099" d="M210 392h14v14h-14z"/><path fill="#1b0099" d="M224 392h14v14h-14z"/><path fill="#230099" d="M238 392h14v14h-14z"/><path fill="#2a0099" d="M252 392h14v14h-14z"/><path fill="#310099" d="M266 392h14v14h-14z"/><path fill="#380099" d="M280 392h14v14h-14z"/><path fill="#3f0099" d="M294 392h14v14h-14z"/><path fill="#460099" d="M308 392h14v14h-14z"/><path fill="#4c0099" d="M322 392h14v14h-14z"/><path fill="#530099" d="M336 392h14v14h-14z"/><path fill="#590099" d="M350 392h14v14h-14z"/><path fill="#5f0099" d="M364 392h14v14h-14z"/><path fill="#660099" d="M378 392h14v14h-14z"/><path fill="#6c0099" d="M392 392h14v14h-14z"/><path fill="#720099" d="M406 392h14v14h-14z"/><path fill="#780099" d="M420 392h14v14h-14z"/><path fill="#7e0099" d="M434 392h14v14h-14z"/><path fill="#840099" d="M448 392h14v14h-14z"/><path fill="#8a0099" d="M462 392h14v14h-14z"/><path fill="#900099" d="M476 392h14v14h-14z"/><path fill="#960099" d="M490 392h14v14h-14z"/><path fill="#990096" d="M504 392h14v14h-14z"/><path fill="#990090" d="M518 392h14v14h-14z"/><path fill="#99008b" d="M532 392h14v14h-14z"/><path fill="#990086" d="M546 392h14v14h-14z"/><path fill="#990082" d="M560 392h14v14h-14z"/><path fill="#99007e" d="M574 392h14v14h-14z"/><path fill="#99007a" d="M588 392h14v14h-14z"/><path fill="#990076" d="M602 392h14v14h-14z"/><path fill="#990073" d="M616 392h14v14h-14z"/><path fill="#99006f" d="M630 392h14v14h-14z"/><path fill="#001999" d="M0 406h14v14h-14z"/><path fill="#001799" d="M14 406h14v14h-14z"/><path fill="#001499" d="M28 406h14v14h-14z"/><path fill="#001299" d="M42 406h14v14h-14z"/><path fill="#001099" d="M56 406h14v14h-14z"/><path fill="#000d99" d="M70 406h14v14h-14z"/><path fill="#000b99" d="M84 406h14v14h-14z"/><path fill="#000899" d="M98 406h14v14h-14z"/><path fill="#000599" d="M112 406h14v14h-14z"/><path fill="#000199" d="M126 406h14v14h-14z"/><path fill="#000099" d="M140 406h14v14h-14z"/><path fill="#000099" d="M154 406h14v14h-14z"/><path fill="#000099" d="M168 406h14v14h-14z"/><path fill="#000099" d="M182 406h14v14h-14z"/><path fill="#070099" d="M196 406h14v14h-14z"/><path fill="#110099" d="M210 406h14v14h-14z"/><path fill="#190099" d="M224 406h14v14h-14z"/><path fill="#210099" d="M238 406h14v14h-14z"/><path fill="#280099" d="M252 406h14v14h-14z"/><path fill="#2f0099" d="M266 406h14v14h-14z"/><path fill="#350099" d="M280 406h14v14h-14z"/><path fill="#3c0099" d="M294 406h14v14h-14z"/><path fill="#430099" d="M308 406h14v14h-14z"/><path fill="#490099" d="M322 406h14v14h-14z"/><path fill="#4f0099" d="M336 406h14v14h-14z"/><path fill="#550099" d="M350 406h14v14h-14z"/><path fill="#5b0099" d="M364 406h14v14h-14z"/><path fill="#610099" d="M378 406h14v14h-14z"/><path fill="#670099" d="M392 406h14v14h-14z"/><path fill="#6d0099" d="M406 406h14v14h-14z"/><path fill="#730099" d="M420 406h14v14h-14z"/><path fill="#790099" d="M434 406h14v14h-14z"/><path fill="#7f0099" d="M448 406h14v14h-14z"/><path fill="#850099" d="M462 406h14v14h-14z"/><path fill="#8b0099" d="M476 406h14v14h-14z"/><path fill="#910099" d="M490 406h14v14h-14z"/><path fill="#960099" d="M504 406h14v14h-14z"/><path fill="#990096" d="M518 406h14v14h-14z"/><path fill="#990091" d="M532 406h14v14h-14z"/><path fill="#99008c" d="M546 406h14v14h-14z"/><path fill="#990087" d="M560 406h14v14h-14z"/><path fill="#990083" d="M574 406h14v14h-14z"/><path fill="#99007f" d="M588 406h14v14h-14z"/><path fill="#99007b" d="M602 406h14v14h-14z"/><path fill="#990077" d="M616 406h14v14h-14z"/><path fill="#990074" d="M630 406h14v14h-14z"/><path fill="#001699" d="M0 420h14v14h-14z"/><path fill="#001499" d="M14 420h14v14h-14z"/><path fill="#001299" d="M28 420h14v14h-14z"/><path fill="#000f99" d="M42 420h14v14h-14z"/><path fill="#000d99" d="M56 420h14v14h-14z"/><path fill="#000b99" d="M70 420h14v14h-14z"/><path fill="#000899" d="M84 420h14v14h-14z"/><path fill="#000599" d="M98 420h14v14h-14z"/><path fill="#000199" d="M112 420h14v14h-14z"/><path fill="#000099" d="M126 420h14v14h-14z"/><path fill="#000099" d="M140 420h14v14h-14z"/><path fill="#000099" d="M154 420h14v14h-14z"/><path fill="#000099" d="M168 420h14v14h-14z"/><path fill="#000099" d="M182 420h14v14h-14z"/><path fill="#060099" d="M196 420h14v14h-14z"/><path fill="#0f0099" d="M210 420h14v14h-14z"/><path fill="#170099" d="M224 420h14v14h-14z"/><path fill="#1e0099" d="M238 420h14v14h-14z"/><path fill="#260099" d="M252 420h14v14h-14z"/><path fill="#2c0099" d="M266 420h14v14h-14z"/><path fill="#330099" d="M280 420h14v14h-14z"/><path fill="#390099" d="M294 420h14v14h-14z"/><path fill="#400099" d="M308 420h14v14h-14z"/><path fill="#460099" d="M322 420h14v14h-14z"/><path fill="#4c0099" d="M336 420h14v14h-14z"/><path fill="#520099" d="M350 420h14v14h-14z"/><path fill="#580099" d="M364 420h14v14h-14z"/><path fill="#5e0099" d="M378 420h14v14h-14z"/><path fill="#630099" d="M392 420h14v14h-14z"/><path fill="#690099" d="M406 420h14v14h-14z"/><path fill="#6f0099" d="M420 420h14v14h-14z"/><path fill="#750099" d="M434 420h14v14h-14z"/><path fill="#7a0099" d="M448 420h14v14h-14z"/><path fill="#800099" d="M462 420h14v14h-14z"/><path fill="#860099" d="M476 420h14v14h-14z"/><path fill="#8b0099" d="M490 420h14v14h-14z"/><path fill="#910099" d="M504 420h14v14h-14z"/><path fill="#960099" d="M518 420h14v14h-14z"/><path fill="#990096" d="M532 420h14v14h-14z"/><path fill="#990091" d="M546 420h14v14h-14z"/><path fill="#99008c" d="M560 420h14v14h-14z"/><path fill="#990088" d="M574 420h14v14h-14z"/><path fill="#990083" d="M588 420h14v14h-14z"/><path fill="#99007f" d="M602 420h14v14h-14z"/><path fill="#99007c" d="M616 420h14v14h-14z"/><path fill="#990078" d="M630 420h14v14h-14z"/><path fill="#001399" d="M0 434h14v14h-14z"/><path fill="#001199" d="M14 434h14v14h-14z"/><path fill="#000f99" d="M28 434h14v14h-14z"/><path fill="#000d99" d="M42 434h14v14h-14z"/><path fill="#000a99" d="M56 434h14v14h-14z"/><path fill="#000899" d="M70 434h14v14h-14z"/><path fill="#000599" d="M84 434h14v14h-14z"/><path fill="#000299" d="M98 434h14v14h-14z"/><path fill="#000099" d="M112 434h14v14h-14z"/><path fill="#000099" d="M126 434h14v14h-14z"/><path fill="#000099" d="M140 434h14v14h-14z"/><path fill="#000099" d="M154 434h14v14h-14z"/><path fill="#000099" d="M168 434h14v14h-14z"/><path fill="#000099" d="M182 434h14v14h-14z"/><path fill="#040099" d="M196 434h14v14h-14z"/><path fill="#0d0099" d="M210 434h14v14h-14z"/><path fill="#150099" d="M224 434h14v14h-14z"/><path fill="#1c0099" d="M238 434h14v14h-14z"/><path fill="#230099" d="M252 434h14v14h-14z"/><path fill="#2a0099" d="M266 434h14v14h-14z"/><path fill="#300099" d="M280 434h14v14h-14z"/><path fill="#370099" d="M294 434h14v14h-14z"/><path fill="#3d0099" d="M308 434h14v14h-14z"/><path fill="#430099" d="M322 434h14v14h-14z"/><path fill="#490099" d="M336 434h14v14h-14z"/><path fill="#4f0099" d="M350 434h14v14h-14z"/><path fill="#540099" d="M364 434h14v14h-14z"/><path fill="#5a0099" d="M378 434h14v14h-14z"/><path fill="#600099" d="M392 434h14v14h-14z"/><path fill="#650099" d="M406 434h14v14h-14z"/><path fill="#6b0099" d="M420 434h14v14h-14z"/><path fill="#700099" d="M434 434h14v14h-14z"/><path fill="#760099" d="M448 434h14v14h-14z"/><path fill="#7b0099" d="M462 434h14v14h-14z"/><path fill="#810099" d="M476 434h14v14h-14z"/><path fill="#860099" d="M490 434h14v14h-14z"/><path fill="#8c0099" d="M504 434h14v14h-14z"/><path fill="#910099" d="M518 434h14v14h-14z"/><path fill="#960099" d="M532 434h14v14h-14z"/><path fill="#990096" d="M546 434h14v14h-14z"/><path fill="#990091" d="M560 434h14v14h-14z"/><path fill="#99008d" d="M574 434h14v14h-14z"/><path fill="#990088" d="M588 434h14v14h-14z"/><path fill="#990084" d="M602 434h14v14h-14z"/><path fill="#990080" d="M616 434h14v14h-14z"/><path fill="#99007c" d="M630 434h14v14h-14z"/><path fill="#001199" d="M0 448h14v14h-14z"/><path fill="#000f99" d="M14 448h14v14h-14z"/><path fill="#000c99" d="M28 448h14v14h-14z"/><path fill="#000a99" d="M42 448h14v14h-14z"/><path fill="#000899" d="M56 448h14v14h-14z"/><path fill="#000599" d="M70 448h14v14h-14z"/><path fill="#000299" d="M84 448h14v14h-14z"/><path fill="#000099" d="M98 448h14v14h-14z"/><path fill="#000099" d="M112 448h14v14h-14z"/><path fill="#000099" d="M126 448h14v14h-14z"/><path fill="#000099" d="M140 448h14v14h-14z"/><path fill="#000099" d="M154 448h14v14h-14z"/><path fill="#000099" d="M168 448h14v14h-14z"/><path fill="#000099" d="M182 448h14v14h-14z"/><path fill="#020099" d="M196 448h14v14h-14z"/><path fill="#0b0099" d="M210 448h14v14h-14z"/><path fill="#130099" d="M224 448h14v14h-14z"/><path fill="#1b0099" d="M238 448h14v14h-14z"/><path fill="#210099" d="M252 448h14v14h-14z"/><path fill="#280099" d="M266 448h14v14h-14z"/><path fill="#2e0099" d="M280 448h14v14h-14z"/><path fill="#340099" d="M294 448h14v14h-14z"/><path fill="#3a0099" d="M308 448h14v14h-14z"/><path fill="#400099" d="M322 448h14v14h-14z"/><path fill="#460099" d="M336 448h14v14h-14z"/><path fill="#4b0099" d="M350 448h14v14h-14z"/><path fill="#510099" d="M364 448h14v14h-14z"/><path fill="#570099" d="M378 448h14v14h-14z"/><path fill="#5c0099" d="M392 448h14v14h-14z"/><path fill="#620099" d="M406 448h14v14h-14z"/><path fill="#670099" d="M420 448h14v14h-14z"/><path fill="#6c0099" d="M434 448h14v14h-14z"/><path fill="#720099" d="M448 448h14v14h-14z"/><path fill="#770099" d="M462 448h14v14h-14z"/><path fill="#7c0099" d="M476 448h14v14h-14z"/><path fill="#820099" d="M490 448h14v14h-14z"/><path fill="#870099" d="M504 448h14v14h-14z"/><path fill="#8c0099" d="M518 448h14v14h-14z"/><path fill="#910099" d="M532 448h14v14h-14z"/><path fill="#970099" d="M546 448h14v14h-14z"/><path fill="#990096" d="M560 448h14v14h-14z"/><path fill="#990091" d="M574 448h14v14h-14z"/><path fill="#99008d" d="M588 448h14v14h-14z"/><path fill="#990089" d="M602 448h14v14h-14z"/><path fill="#990085" d="M616 448h14v14h-14z"/><path fill="#990081" d="M630 448h14v14h-14z"/><path fill="#000e99" d="M0 462h14v14h-14z"/><path fill="#000c99" d="M14 462h14v14h-14z"/><path fill="#000a99" d="M28 462h14v14h-14z"/><path fill="#000799" d="M42 462h14v14h-14z"/><path fill="#000599" d="M56 462h14v14h-14z"/><path fill="#000299" d="M70 462h14v14h-14z"/><path fill="#000099" d="M84 462h14v14h-14z"/><path fill="#000099" d="M98 462h14v14h-14z"/><path fill="#000099" d="M112 462h14v14h-14z"/><path fill="#000099" d="M126 462h14v14h-14z"/><path fill="#000099" d="M140 462h14v14h-14z"/><path fill="#000099" d="M154 462h14v14h-14z"/><path fill="#000099" d="M168 462h14v14h-14z"/><path fill="#000099" d="M182 462h14v14h-14z"/><path fill="#000099" d="M196 462h14v14h-14z"/><path fill="#0a0099" d="M210 462h14v14h-14z"/><path fill="#120099" d="M224 462h14v14h-14z"/><path fill="#190099" d="M238 462h14v14h-14z"/><path fill="#1f0099" d="M252 462h14v14h-14z"/><path fill="#260099" d="M266 462h14v14h-14z"/><path fill="#2c0099" d="M280 462h14v14h-14z"/><path fill="#320099" d="M294 462h14v14h-14z"/><path fill="#380099" d="M308 462h14v14h-14z"/><path fill="#3d0099" d="M322 462h14v14h-14z"/><path fill="#430099" d="M336 462h14v14h-14z"/><path fill="#490099" d="M350 462h14v14h-14z"/><path fill="#4e0099" d="M364 462h14v14h-14z"/><path fill="#530099" d="M378 462h14v14h-14z"/><path fill="#590099" d="M392 462h14v14h-14z"/><path fill="#5e0099" d="M406 462h14v14h-14z"/><path fill="#630099" d="M420 462h14v14h-14z"/><path fill="#690099" d="M434 462h14v14h-14z"/><path fill="#6e0099" d="M448 462h14v14h-14z"/><path fill="#730099" d="M462 462h14v14h-14z"/><path fill="#780099" d="M476 462h14v14h-14z"/><path fill="#7d0099" d="M490 462h14v14h-14z"/><path fill="#820099" d="M504 462h14v14h-14z"/><path fill="#870099" d="M518 462h14v14h-14z"/><path fill="#8c0099" d="M532 462h14v14h-14z"/><path fill="#920099" d="M546 462h14v14h-14z"/><path fill="#970099" d="M560 462h14v14h-14z"/><path fill="#990096" d="M574 462h14v14h-14z"/><path fill="#990092" d="M588 462h14v14h-14z"/><path fill="#99008d" d="M602 462h14v14h-14z"/><path fill="#990089" d="M616 462h14v14h-14z"/><path fill="#990085" d="M630 462h14v14h-14z"/><path fill="#000c99" d="M0 476h14v14h-14z"/><path fill="#000a99" d="M14 476h14v14h-14z"/><path fill="#000799" d="M28 476h14v14h-14z"/><path fill="#000599" d="M42 476h14v14h-14z"/><path fill="#000299" d="M56 476h14v14h-14z"/><path fill="#000099" d="M70 476h14v14h-14z"/><path fill="#000099" d="M84 476h14v14h-14z"/><path fill="#000099" d="M98 476h14v14h-14z"/><path fill="#000099" d="M112 476h14v14h-14z"/><path fill="#000099" d="M126 476h14v14h-14z"/><path fill="#000099" d="M140 476h14v14h-14z"/><path fill="#000099" d="M154 476h14v14h-14z"/><path fill="#000099" d="M168 476h14v14h-14z"/><path fill="#000099" d="M182 476h14v14h-14z"/><path fill="#000099" d="M196 476h14v14h-14z"/><path fill="#080099" d="M210 476h14v14h-14z"/><path fill="#100099" d="M224 476h14v14h-14z"/><path fill="#170099" d="M238 476h14v14h-14z"/><path fill="#1e0099" d="M252 476h14v14h-14z"/><path fill="#240099" d="M266 476h14v14h-14z"/><path fill="#2a0099" d="M280 476h14v14h-14z"/><path fill="#300099" d="M294 476h14v14h-14z"/><path fill="#350099" d="M308 476h14v14h-14z"/><path fill="#3b0099" d="M322 476h14v14h-14z"/><path fill="#400099" d="M336 476h14v14h-14z"/><path fill="#460099" d="M350 476h14v14h-14z"/><path fill="#4b0099" d="M364 476h14v14h-14z"/><path fill="#500099" d="M378 476h14v14h-14z"/><path fill="#560099" d="M392 476h14v14h-14z"/><path fill="#5b0099" d="M406 476h14v14h-14z"/><path fill="#600099" d="M420 476h14v14h-14z"/><path fill="#650099" d="M434 476h14v14h-14z"/><path fill="#6a0099" d="M448 476h14v14h-14z"/><path fill="#6f0099" d="M462 476h14v14h-14z"/><path fill="#740099" d="M476 476h14v14h-14z"/><path fill="#790099" d="M490 476h14v14h-14z"/><path fill="#7e0099" d="M504 476h14v14h-14z"/><path fill="#830099" d="M518 476h14v14h-14z"/><path fill="#880099" d="M532 476h14v14h-14z"/><path fill="#8d0099" d="M546 476h14v14h-14z"/><path fill="#920099" d="M560 476h14v14h-14z"/><path fill="#970099" d="M574 476h14v14h-14z"/><path fill="#990097" d="M588 476h14v14h-14z"/><path fill="#990092" d="M602 476h14v14h-14z"/><path fill="#99008e" d="M616 476h14v14h-14z"/><path fill="#99008a" d="M630 476h14v14h-14z"/></g><g clip-path="url(#tc)"><path fill="#00ff10" d="M126 28h14v14h-14z"/><path fill="#32ff0c" d="M140 28h14v14h-14z"/><path fill="#5bff06" d="M154 28h14v14h-14z"/><path fill="#82ff00" d="M168 28h14v14h-14z"/><path fill="#aaff00" d="M182 28h14v14h-14z"/><path fill="#d3ff00" d="M196 28h14v14h-14z"/><path fill="#feff00" d="M210 28h14v14h-14z"/><path fill="#ffda00" d="M224 28h14v14h-14z"/><path fill="#ffbc00" d="M238 28h14v14h-14z"/><path fill="#00ff3a" d="M126 42h14v14h-14z"/><path fill="#2cff39" d="M140 42h14v14h-14z"/><path fill="#57ff37" d="M154 42h14v14h-14z"/><path fill="#81ff35" d="M168 42h14v14h-14z"/><path fill="#aaff32" d="M182 42h14v14h-14z"/><path fill="#d5ff30" d="M196 42h14v14h-14z"/><path fill="#fffc2c" d="M210 42h14v14h-14z"/><path fill="#ffd523" d="M224 42h14v14h-14z"/><path fill="#ffb71b" d="M238 42h14v14h-14z"/><path fill="#ff9e15" d="M252 42h14v14h-14z"/><path fill="#ff8a10" d="M266 42h14v14h-14z"/><path fill="#ff790b" d="M280 42h14v14h-14z"/><path fill="#ff6b07" d="M294 42h14v14h-14z"/><path fill="#ff5e03" d="M308 42h14v14h-14z"/><path fill="#ff5300" d="M322 42h14v14h-14z"/><path fill="#ff4900" d="M336 42h14v14h-14z"/><path fill="#ff4000" d="M350 42h14v14h-14z"/><path fill="#ff3800" d="M364 42h14v14h-14z"/><path fill="#ff3100" d="M378 42h14v14h-14z"/><path fill="#ff2a00" d="M392 42h14v14h-14z"/><path fill="#00ff60" d="M126 56h14v14h-14z"/><path fill="#26ff60" d="M140 56h14v14h-14z"/><path fill="#54ff60" d="M154 56h14v14h-14z"/><path fill="#7fff60" d="M168 56h14v14h-14z"/><path fill="#abff5f" d="M182 56h14v14h-14z"/><path fill="#d8ff5f" d="M196 56h14v14h-14z"/><path fill="#fff85c" d="M210 56h14v14h-14z"/><path fill="#ffd04e" d="M224 56h14v14h-14z"/><path fill="#ffb142" d="M238 56h14v14h-14z"/><path fill="#ff9939" d="M252 56h14v14h-14z"/><path fill="#ff8531" d="M266 56h14v14h-14z"/><path fill="#ff742b" d="M280 56h14v14h-14z"/><path fill="#ff6626" d="M294 56h14v14h-14z"/><path fill="#ff5921" d="M308 56h14v14h-14z"/><path fill="#ff4e1d" d="M322 56h14v14h-14z"/><path fill="#ff4519" d="M336 56h14v14h-14z"/><path fill="#ff3c16" d="M350 56h14v14h-14z"/><path fill="#ff3413" d="M364 56h14v14h-14z"/><path fill="#ff2c10" d="M378 56h14v14h-14z"/><path fill="#ff250d" d="M392 56h14v14h-14z"/><path fill="#ff1f0b" d="M406 56h14v14h-14z"/><path fill="#ff1908" d="M420 56h14v14h-14z"/><path fill="#ff1306" d="M434 56h14v14h-14z"/><path fill="#ff0d03" d="M448 56h14v14h-14z"/><path fill="#ff0601" d="M462 56h14v14h-14z"/><path fill="#00ff85" d="M126 70h14v14h-14z"/><path fill="#1fff86" d="M140 70h14v14h-14z"/><path fill="#50ff88" d="M154 70h14v14h-14z"/><path fill="#7dff8a" d="M168 70h14v14h-14z"/><path fill="#abff8b" d="M182 70h14v14h-14z"/><path fill="#daff8e" d="M196 70h14v14h-14z"/><path fill="#fff389" d="M210 70h14v14h-14z"/><path fill="#ffcb74" d="M224 70h14v14h-14z"/><path fill="#ffac65" d="M238 70h14v14h-14z"/><path fill="#ff9458" d="M252 70h14v14h-14z"/><path fill="#ff804e" d="M266 70h14v14h-14z"/><path fill="#ff6f46" d="M280 70h14v14h-14z"/><path fill="#ff613f" d="M294 70h14v14h-14z"/><path fill="#ff5439" d="M308 70h14v14h-14z"/><path fill="#ff4933" d="M322 70h14v14h-14z"/><path fill="#ff402f" d="M336 70h14v14h-14z"/><path fill="#ff372a" d="M350 70h14v14h-14z"/><path fill="#ff2f27" d="M364 70h14v14h-14z"/><path fill="#ff2723" d="M378 70h14v14h-14z"/><path fill="#ff2020" d="M392 70h14v14h-14z"/><path fill="#ff1a1d" d="M406 70h14v14h-14z"/><path fill="#ff131b" d="M420 70h14v14h-14z"/><path fill="#ff0d18" d="M434 70h14v14h-14z"/><path fill="#ff0716" d="M448 70h14v14h-14z"/><path fill="#ff0014" d="M462 70h14v14h-14z"/><path fill="#17ffad" d="M140 84h14v14h-14z"/><path fill="#4bffb0" d="M154 84h14v14h-14z"/><path fill="#7bffb4" d="M168 84h14v14h-14z"/><path fill="#abffb8" d="M182 84h14v14h-14z"/><path fill="#ddffbd" d="M196 84h14v14h-14z"/><path fill="#ffeeb5" d="M210 84h14v14h-14z"/><path fill="#ffc59a" d="M224 84h14v14h-14z"/><path fill="#ffa686" d="M238 84h14v14h-14z"/><path fill="#ff8e77" d="M252 84h14v14h-14z"/><path fill="#ff7a6a" d="M266 84h14v14h-14z"/><path fill="#ff6a5f" d="M280 84h14v14h-14z"/><path fill="#ff5b57" d="M294 84h14v14h-14z"/><path fill="#ff4f4f" d="M308 84h14v14h-14z"/><path fill="#ff4448" d="M322 84h14v14h-14z"/><path fill="#ff3a42" d="M336 84h14v14h-14z"/><path fill="#ff323d" d="M350 84h14v14h-14z"/><path fill="#ff2a39" d="M364 84h14v14h-14z"/><path fill="#ff2235" d="M378 84h14v14h-14z"/><path fill="#ff1b31" d="M392 84h14v14h-14z"/><path fill="#ff142d" d="M406 84h14v14h-14z"/><path fill="#ff0e2a" d="M420 84h14v14h-14z"/><path fill="#ff0727" d="M434 84h14v14h-14z"/><path fill="#ff0025" d="M448 84h14v14h-14z"/><path fill="#0dffd5" d="M140 98h14v14h-14z"/><path fill="#46ffdb" d="M154 98h14v14h-14z"/><path fill="#79ffe0" d="M168 98h14v14h-14z"/><path fill="#acffe7" d="M182 98h14v14h-14z"/><path fill="#e0ffee" d="M196 98h14v14h-14z"/><path fill="#ffe8e0" d="M210 98h14v14h-14z"/><path fill="#ffbfbf" d="M224 98h14v14h-14z"/><path fill="#ffa0a7" d="M238 98h14v14h-14z"/><path fill="#ff8894" d="M252 98h14v14h-14z"/><path fill="#ff7484" d="M266 98h14v14h-14z"/><path fill="#ff6478" d="M280 98h14v14h-14z"/><path fill="#ff566d" d="M294 98h14v14h-14z"/><path fill="#ff4964" d="M308 98h14v14h-14z"/><path fill="#ff3f5c" d="M322 98h14v14h-14z"/><path fill="#ff3555" d="M336 98h14v14h-14z"/><path fill="#ff2c4f" d="M350 98h14v14h-14z"/><path fill="#ff244a" d="M364 98h14v14h-14z"/><path fill="#ff1d45" d="M378 98h14v14h-14z"/><path fill="#ff1640" d="M392 98h14v14h-14z"/><path fill="#ff0f3c" d="M406 98h14v14h-14z"/><path fill="#ff0839" d="M420 98h14v14h-14z"/><path fill="#ff0035" d="M434 98h14v14h-14z"/><path fill="#00ffff" d="M140 112h14v14h-14z"/><path fill="#3ff7ff" d="M154 112h14v14h-14z"/><path fill="#70f0ff" d="M168 112h14v14h-14z"/><path fill="#9de8ff" d="M182 112h14v14h-14z"/><path fill="#c8e0ff" d="M196 112h14v14h-14z"/><path fill="#f2d7ff" d="M210 112h14v14h-14z"/><path fill="#ffb9e5" d="M224 112h14v14h-14z"/><path fill="#ff9ac8" d="M238 112h14v14h-14z"/><path fill="#ff82b1" d="M252 112h14v14h-14z"/><path fill="#ff6e9f" d="M266 112h14v14h-14z"/><path fill="#ff5e90" d="M280 112h14v14h-14z"/><path fill="#ff5083" d="M294 112h14v14h-14z"/><path fill="#ff4479" d="M308 112h14v14h-14z"/><path fill="#ff3970" d="M322 112h14v14h-14z"/><path fill="#ff2f68" d="M336 112h14v14h-14z"/><path fill="#ff2760" d="M350 112h14v14h-14z"/><path fill="#ff1e5a" d="M364 112h14v14h-14z"/><path fill="#ff1755" d="M378 112h14v14h-14z"/><path fill="#ff104f" d="M392 112h14v14h-14z"/><path fill="#ff084b" d="M406 112h14v14h-14z"/><path fill="#ff0047" d="M420 112h14v14h-14z"/><path fill="#00d9ff" d="M140 126h14v14h-14z"/><path fill="#30d2ff" d="M154 126h14v14h-14z"/><path fill="#5ccaff" d="M168 126h14v14h-14z"/><path fill="#84c3ff" d="M182 126h14v14h-14z"/><path fill="#aabbff" d="M196 126h14v14h-14z"/><path fill="#cfb3ff" d="M210 126h14v14h-14z"/><path fill="#f4abff" d="M224 126h14v14h-14z"/><path fill="#ff93e8" d="M238 126h14v14h-14z"/><path fill="#ff7bce" d="M252 126h14v14h-14z"/><path fill="#ff68b9" d="M266 126h14v14h-14z"/><path fill="#ff57a8" d="M280 126h14v14h-14z"/><path fill="#ff4999" d="M294 126h14v14h-14z"/><path fill="#ff3d8d" d="M308 126h14v14h-14z"/><path fill="#ff3383" d="M322 126h14v14h-14z"/><path fill="#ff2979" d="M336 126h14v14h-14z"/><path fill="#ff2171" d="M350 126h14v14h-14z"/><path fill="#ff186a" d="M364 126h14v14h-14z"/><path fill="#ff1164" d="M378 126h14v14h-14z"/><path fill="#ff095e" d="M392 126h14v14h-14z"/><path fill="#ff0059" d="M406 126h14v14h-14z"/><path fill="#00bbff" d="M140 140h14v14h-14z"/><path fill="#24b4ff" d="M154 140h14v14h-14z"/><path fill="#4dadff" d="M168 140h14v14h-14z"/><path fill="#71a6ff" d="M182 140h14v14h-14z"/><path fill="#939fff" d="M196 140h14v14h-14z"/><path fill="#b497ff" d="M210 140h14v14h-14z"/><path fill="#d58fff" d="M224 140h14v14h-14z"/><path fill="#f587ff" d="M238 140h14v14h-14z"/><path fill="#ff74eb" d="M252 140h14v14h-14z"/><path fill="#ff61d3" d="M266 140h14v14h-14z"/><path fill="#ff51bf" d="M280 140h14v14h-14z"/><path fill="#ff43af" d="M294 140h14v14h-14z"/><path fill="#ff37a1" d="M308 140h14v14h-14z"/><path fill="#ff2c95" d="M322 140h14v14h-14z"/><path fill="#ff238b" d="M336 140h14v14h-14z"/><path fill="#ff1a82" d="M350 140h14v14h-14z"/><path fill="#ff127a" d="M364 140h14v14h-14z"/><path fill="#ff0973" d="M378 140h14v14h-14z"/><path fill="#ff006c" d="M392 140h14v14h-14z"/><path fill="#00a3ff" d="M140 154h14v14h-14z"/><path fill="#1a9dff" d="M154 154h14v14h-14z"/><path fill="#4096ff" d="M168 154h14v14h-14z"/><path fill="#628fff" d="M182 154h14v14h-14z"/><path fill="#8188ff" d="M196 154h14v14h-14z"/><path fill="#9f81ff" d="M210 154h14v14h-14z"/><path fill="#bc79ff" d="M224 154h14v14h-14z"/><path fill="#d971ff" d="M238 154h14v14h-14z"/><path fill="#f669ff" d="M252 154h14v14h-14z"/><path fill="#ff59ed" d="M266 154h14v14h-14z"/><path fill="#ff49d7" d="M280 154h14v14h-14z"/><path fill="#ff3cc5" d="M294 154h14v14h-14z"/><path fill="#ff30b5" d="M308 154h14v14h-14z"/><path fill="#ff26a8" d="M322 154h14v14h-14z"/><path fill="#ff1c9c" d="M336 154h14v14h-14z"/><path fill="#ff1392" d="M350 154h14v14h-14z"/><path fill="#ff0a89" d="M364 154h14v14h-14z"/><path fill="#ff0081" d="M378 154h14v14h-14z"/><path fill="#1289ff" d="M154 168h14v14h-14z"/><path fill="#3683ff" d="M168 168h14v14h-14z"/><path fill="#557cff" d="M182 168h14v14h-14z"/><path fill="#7275ff" d="M196 168h14v14h-14z"/><path fill="#8e6eff" d="M210 168h14v14h-14z"/><path fill="#a867ff" d="M224 168h14v14h-14z"/><path fill="#c35fff" d="M238 168h14v14h-14z"/><path fill="#dd57ff" d="M252 168h14v14h-14z"/><path fill="#f64fff" d="M266 168h14v14h-14z"/><path fill="#ff42ef" d="M280 168h14v14h-14z"/><path fill="#ff34db" d="M294 168h14v14h-14z"/><path fill="#ff29c9" d="M308 168h14v14h-14z"/><path fill="#ff1ebb" d="M322 168h14v14h-14z"/><path fill="#ff14ae" d="M336 168h14v14h-14z"/><path fill="#ff0ba3" d="M350 168h14v14h-14z"/><path fill="#ff0099" d="M364 168h14v14h-14z"/><path fill="#0a78ff" d="M154 182h14v14h-14z"/><path fill="#2d72ff" d="M168 182h14v14h-14z"/><path fill="#4a6cff" d="M182 182h14v14h-14z"/><path fill="#6565ff" d="M196 182h14v14h-14z"/><path fill="#7f5eff" d="M210 182h14v14h-14z"/><path fill="#9857ff" d="M224 182h14v14h-14z"/><path fill="#b050ff" d="M238 182h14v14h-14z"/><path fill="#c848ff" d="M252 182h14v14h-14z"/><path fill="#e040ff" d="M266 182h14v14h-14z"/><path fill="#f738ff" d="M280 182h14v14h-14z"/><path fill="#ff2df1" d="M294 182h14v14h-14z"/><path fill="#ff21dd" d="M308 182h14v14h-14z"/><path fill="#ff16cd" d="M322 182h14v14h-14z"/><path fill="#ff0cbf" d="M336 182h14v14h-14z"/><path fill="#ff00b3" d="M350 182h14v14h-14z"/><path fill="#016aff" d="M154 196h14v14h-14z"/><path fill="#2564ff" d="M168 196h14v14h-14z"/><path fill="#415eff" d="M182 196h14v14h-14z"/><path fill="#5a57ff" d="M196 196h14v14h-14z"/><path fill="#7351ff" d="M210 196h14v14h-14z"/><path fill="#8a4aff" d="M224 196h14v14h-14z"/><path fill="#a043ff" d="M238 196h14v14h-14z"/><path fill="#b73cff" d="M252 196h14v14h-14z"/><path fill="#cc34ff" d="M266 196h14v14h-14z"/><path fill="#e22cff" d="M280 196h14v14h-14z"/><path fill="#f823ff" d="M294 196h14v14h-14z"/><path fill="#ff18f2" d="M308 196h14v14h-14z"/><path fill="#ff0de0" d="M322 196h14v14h-14z"/><path fill="#ff00d1" d="M336 196h14v14h-14z"/><path fill="#005dff" d="M154 210h14v14h-14z"/><path fill="#1e57ff" d="M168 210h14v14h-14z"/><path fill="#3952ff" d="M182 210h14v14h-14z"/><path fill="#514bff" d="M196 210h14v14h-14z"/><path fill="#6845ff" d="M210 210h14v14h-14z"/><path fill="#7e3eff" d="M224 210h14v14h-14z"/><path fill="#9338ff" d="M238 210h14v14h-14z"/><path fill="#a730ff" d="M252 210h14v14h-14z"/><path fill="#bc29ff" d="M266 210h14v14h-14z"/><path fill="#d021ff" d="M280 210h14v14h-14z"/><path fill="#e418ff" d="M294 210h14v14h-14z"/><path fill="#f80eff" d="M308 210h14v14h-14z"/><path fill="#ff01f3" d="M322 210h14v14h-14z"/><path fill="#ff00e2" d="M336 210h14v14h-14z"/><path fill="#0052ff" d="M154 224h14v14h-14z"/><path fill="#184dff" d="M168 224h14v14h-14z"/><path fill="#3247ff" d="M182 224h14v14h-14z"/><path fill="#4941ff" d="M196 224h14v14h-14z"/><path fill="#5e3bff" d="M210 224h14v14h-14z"/><path fill="#7334ff" d="M224 224h14v14h-14z"/><path fill="#872dff" d="M238 224h14v14h-14z"/><path fill="#9a26ff" d="M252 224h14v14h-14z"/><path fill="#ae1fff" d="M266 224h14v14h-14z"/><path fill="#c116ff" d="M280 224h14v14h-14z"/><path fill="#d30dff" d="M294 224h14v14h-14z"/><path fill="#e601ff" d="M308 224h14v14h-14z"/><path fill="#f800ff" d="M322 224h14v14h-14z"/><path fill="#0048ff" d="M154 238h14v14h-14z"/><path fill="#1243ff" d="M168 238h14v14h-14z"/><path fill="#2c3dff" d="M182 238h14v14h-14z"/><path fill="#4237ff" d="M196 238h14v14h-14z"/><path fill="#5631ff" d="M210 238h14v14h-14z"/><path fill="#6a2bff" d="M224 238h14v14h-14z"/><path fill="#7d24ff" d="M238 238h14v14h-14z"/><path fill="#8f1dff" d="M252 238h14v14h-14z"/><path fill="#a115ff" d="M266 238h14v14h-14z"/><path fill="#b30cff" d="M280 238h14v14h-14z"/><path fill="#c501ff" d="M294 238h14v14h-14z"/><path fill="#d600ff" d="M308 238h14v14h-14z"/><path fill="#0d3aff" d="M168 252h14v14h-14z"/><path fill="#2634ff" d="M182 252h14v14h-14z"/><path fill="#3b2eff" d="M196 252h14v14h-14z"/><path fill="#4f28ff" d="M210 252h14v14h-14z"/><path fill="#6122ff" d="M224 252h14v14h-14z"/><path fill="#731bff" d="M238 252h14v14h-14z"/><path fill="#8514ff" d="M252 252h14v14h-14z"/><path fill="#960cff" d="M266 252h14v14h-14z"/><path fill="#a701ff" d="M280 252h14v14h-14z"/><path fill="#b800ff" d="M294 252h14v14h-14z"/><path fill="#0832ff" d="M168 266h14v14h-14z"/><path fill="#202cff" d="M182 266h14v14h-14z"/><path fill="#3526ff" d="M196 266h14v14h-14z"/><path fill="#4820ff" d="M210 266h14v14h-14z"/><path fill="#5a1aff" d="M224 266h14v14h-14z"/><path fill="#6b13ff" d="M238 266h14v14h-14z"/><path fill="#7c0bff" d="M252 266h14v14h-14z"/><path fill="#8c02ff" d="M266 266h14v14h-14z"/><path fill="#9c00ff" d="M280 266h14v14h-14z"/><path fill="#022aff" d="M168 280h14v14h-14z"/><path fill="#1c25ff" d="M182 280h14v14h-14z"/><path fill="#301fff" d="M196 280h14v14h-14z"/><path fill="#4219ff" d="M210 280h14v14h-14z"/><path fill="#5312ff" d="M224 280h14v14h-14z"/><path fill="#640bff" d="M238 280h14v14h-14z"/><path fill="#7402ff" d="M252 280h14v14h-14z"/><path fill="#8300ff" d="M266 280h14v14h-14z"/><path fill="#0023ff" d="M168 294h14v14h-14z"/><path fill="#171eff" d="M182 294h14v14h-14z"/><path fill="#2b18ff" d="M196 294h14v14h-14z"/><path fill="#3c11ff" d="M210 294h14v14h-14z"/><path fill="#4d0bff" d="M224 294h14v14h-14z"/><path fill="#5d02ff" d="M238 294h14v14h-14z"/><path fill="#6c00ff" d="M252 294h14v14h-14z"/><path fill="#001cff" d="M168 308h14v14h-14z"/><path fill="#1317ff" d="M182 308h14v14h-14z"/><path fill="#2611ff" d="M196 308h14v14h-14z"/><path fill="#370aff" d="M210 308h14v14h-14z"/><path fill="#4702ff" d="M224 308h14v14h-14z"/><path fill="#5700ff" d="M238 308h14v14h-14z"/><path fill="#0016ff" d="M168 322h14v14h-14z"/><path fill="#0f10ff" d="M182 322h14v14h-14z"/><path fill="#220aff" d="M196 322h14v14h-14z"/><path fill="#3202ff" d="M210 322h14v14h-14z"/><path fill="#4200ff" d="M224 322h14v14h-14z"/><path fill="#0b0aff" d="M182 336h14v14h-14z"/><path fill="#1e02ff" d="M196 336h14v14h-14z"/><path fill="#2e00ff" d="M210 336h14v14h-14z"/><path fill="#0702ff" d="M182 350h14v14h-14z"/><path fill="#1a00ff" d="M196 350h14v14h-14z"/></g></svg>
<canvas id="cuv" class="a" width="639" height="491" style="left:1020px;top:90px"></canvas>
<svg class="a" style="left:975px;top:60px" width="695" height="557">
<line x1="39.9" y1="521.2" x2="44.9" y2="521.2" stroke="#ccc" stroke-width="1.5"/>
<text x="38.9" y="526.2" font-size="14" fill="#dcdcdc" text-anchor="end">0</text>
<line x1="39.9" y1="480.3" x2="44.9" y2="480.3" stroke="#ccc" stroke-width="1.5"/>
<text x="38.9" y="485.3" font-size="14" fill="#dcdcdc" text-anchor="end">0,05</text>
<line x1="39.9" y1="439.5" x2="44.9" y2="439.5" stroke="#ccc" stroke-width="1.5"/>
<text x="38.9" y="444.5" font-size="14" fill="#dcdcdc" text-anchor="end">0,1</text>
<line x1="39.9" y1="398.6" x2="44.9" y2="398.6" stroke="#ccc" stroke-width="1.5"/>
<text x="38.9" y="403.6" font-size="14" fill="#dcdcdc" text-anchor="end">0,15</text>
<line x1="39.9" y1="357.7" x2="44.9" y2="357.7" stroke="#ccc" stroke-width="1.5"/>
<text x="38.9" y="362.7" font-size="14" fill="#dcdcdc" text-anchor="end">0,2</text>
<line x1="39.9" y1="316.8" x2="44.9" y2="316.8" stroke="#ccc" stroke-width="1.5"/>
<text x="38.9" y="321.8" font-size="14" fill="#dcdcdc" text-anchor="end">0,25</text>
<line x1="39.9" y1="276.0" x2="44.9" y2="276.0" stroke="#ccc" stroke-width="1.5"/>
<text x="38.9" y="281.0" font-size="14" fill="#dcdcdc" text-anchor="end">0,3</text>
<line x1="39.9" y1="235.1" x2="44.9" y2="235.1" stroke="#ccc" stroke-width="1.5"/>
<text x="38.9" y="240.1" font-size="14" fill="#dcdcdc" text-anchor="end">0,35</text>
<line x1="39.9" y1="194.2" x2="44.9" y2="194.2" stroke="#ccc" stroke-width="1.5"/>
<text x="38.9" y="199.2" font-size="14" fill="#dcdcdc" text-anchor="end">0,4</text>
<line x1="39.9" y1="153.3" x2="44.9" y2="153.3" stroke="#ccc" stroke-width="1.5"/>
<text x="38.9" y="158.3" font-size="14" fill="#dcdcdc" text-anchor="end">0,45</text>
<line x1="39.9" y1="112.5" x2="44.9" y2="112.5" stroke="#ccc" stroke-width="1.5"/>
<text x="38.9" y="117.5" font-size="14" fill="#dcdcdc" text-anchor="end">0,5</text>
<line x1="39.9" y1="71.6" x2="44.9" y2="71.6" stroke="#ccc" stroke-width="1.5"/>
<text x="38.9" y="76.6" font-size="14" fill="#dcdcdc" text-anchor="end">0,55</text>
<line x1="44.9" y1="521.2" x2="44.9" y2="527.2" stroke="#ccc" stroke-width="1.5"/>
<text x="44.9" y="543.0" font-size="14" fill="#dcdcdc" text-anchor="middle">0</text>
<line x1="98.1" y1="521.2" x2="98.1" y2="527.2" stroke="#ccc" stroke-width="1.5"/>
<text x="98.1" y="543.0" font-size="14" fill="#dcdcdc" text-anchor="middle">0,05</text>
<line x1="151.4" y1="521.2" x2="151.4" y2="527.2" stroke="#ccc" stroke-width="1.5"/>
<text x="151.4" y="543.0" font-size="14" fill="#dcdcdc" text-anchor="middle">0,1</text>
<line x1="204.6" y1="521.2" x2="204.6" y2="527.2" stroke="#ccc" stroke-width="1.5"/>
<text x="204.6" y="543.0" font-size="14" fill="#dcdcdc" text-anchor="middle">0,15</text>
<line x1="257.8" y1="521.2" x2="257.8" y2="527.2" stroke="#ccc" stroke-width="1.5"/>
<text x="257.8" y="543.0" font-size="14" fill="#dcdcdc" text-anchor="middle">0,2</text>
<line x1="311.0" y1="521.2" x2="311.0" y2="527.2" stroke="#ccc" stroke-width="1.5"/>
<text x="311.0" y="543.0" font-size="14" fill="#dcdcdc" text-anchor="middle">0,25</text>
<line x1="364.3" y1="521.2" x2="364.3" y2="527.2" stroke="#ccc" stroke-width="1.5"/>
<text x="364.3" y="543.0" font-size="14" fill="#dcdcdc" text-anchor="middle">0,3</text>
<line x1="417.5" y1="521.2" x2="417.5" y2="527.2" stroke="#ccc" stroke-width="1.5"/>
<text x="417.5" y="543.0" font-size="14" fill="#dcdcdc" text-anchor="middle">0,35</text>
<line x1="470.7" y1="521.2" x2="470.7" y2="527.2" stroke="#ccc" stroke-width="1.5"/>
<text x="470.7" y="543.0" font-size="14" fill="#dcdcdc" text-anchor="middle">0,4</text>
<line x1="524.0" y1="521.2" x2="524.0" y2="527.2" stroke="#ccc" stroke-width="1.5"/>
<text x="524.0" y="543.0" font-size="14" fill="#dcdcdc" text-anchor="middle">0,45</text>
<line x1="577.2" y1="521.2" x2="577.2" y2="527.2" stroke="#ccc" stroke-width="1.5"/>
<text x="577.2" y="543.0" font-size="14" fill="#dcdcdc" text-anchor="middle">0,5</text>
<line x1="630.4" y1="521.2" x2="630.4" y2="527.2" stroke="#ccc" stroke-width="1.5"/>
<text x="630.4" y="543.0" font-size="14" fill="#dcdcdc" text-anchor="middle">0,55</text>
<rect x="171.0" y="52.9" width="14" height="14" fill="none" stroke="#eaf6ea" stroke-width="1.7"/>
<rect x="517.7" y="85.2" width="14" height="14" fill="none" stroke="#f4e8e8" stroke-width="1.7"/>
<rect x="224.7" y="383.6" width="14" height="14" fill="none" stroke="#e8e8f4" stroke-width="1.7"/>
<rect x="255.0" y="60.7" width="14" height="14" fill="none" stroke="#f4f4e0" stroke-width="1.7"/>
<rect x="185.2" y="140.4" width="14" height="14" fill="none" stroke="#e0f4f4" stroke-width="1.7"/>
<rect x="362.6" y="243.1" width="14" height="14" fill="none" stroke="#f4e0f4" stroke-width="1.7"/>
<rect x="248.5" y="129.8" width="14" height="14" fill="none" stroke="#000" stroke-width="1.7"/>
<circle cx="177.6" cy="58.7" r="4.5" fill="#0a9a0a" stroke="#111" stroke-width="1.3"/>
<circle cx="529.3" cy="90.3" r="4.5" fill="#c01010" stroke="#111" stroke-width="1.3"/>
<circle cx="227.6" cy="392.2" r="4.5" fill="#1010c0" stroke="#111" stroke-width="1.3"/>
<circle cx="260.2" cy="66.3" r="4.5" fill="#c0c000" stroke="#111" stroke-width="1.3"/>
<circle cx="191.7" cy="149.0" r="4.5" fill="#10b0b0" stroke="#111" stroke-width="1.3"/>
<circle cx="364.8" cy="254.2" r="4.5" fill="#b000b0" stroke="#111" stroke-width="1.3"/>
<circle cx="253.3" cy="138.2" r="4.5" fill="#fff" stroke="#111" stroke-width="1.3"/>
</svg>
<div class="a" style="left:1404px;top:549px;width:252px;height:27px;background:#2f2f2f"></div>
<div class="t" style="left:1405px;top:555px;font-size:19px;letter-spacing:0.35px;color:#f4f4f4">Gamut Coverage:&nbsp; 99,9%</div>

<script>
(function(){
var cv=document.getElementById('cuv');var W=cv.width,H=cv.height;
var o1=document.createElement('canvas');o1.width=W;o1.height=H;var c1=o1.getContext('2d');
var o2=document.createElement('canvas');o2.width=W;o2.height=H;var c2=o2.getContext('2d');
var i1=c1.createImageData(W,H),d1=i1.data,i2=c2.createImageData(W,H),d2=i2.data;
function G(c){return Math.pow(Math.max(0,c),0.8);}
for(var j=0;j<H;j++){for(var i=0;i<W;i++){
 var u=(1020+i+0.5-1019.9)/1064.6, v=(581.2-(90+j+0.5))/817.5;
 var den=6*u-16*v+12; var x=9*u/den, y=4*v/den; if(y<=0.0001){y=0.0001;}
 var X=x/y, Y=1, Z=(1-x-y)/y;
 var r=3.2406*X-1.5372*Y-0.4986*Z, gg=-0.9689*X+1.8758*Y+0.0415*Z, b=0.0557*X-0.2040*Y+1.0570*Z;
 r=Math.max(r,0);gg=Math.max(gg,0);b=Math.max(b,0);var m=Math.max(r,gg,b)||1;r/=m;gg/=m;b/=m;
 r=G(r)*255;gg=G(gg)*255;b=G(b)*255;
 var p=(j*W+i)*4; d2[p]=r; d2[p+1]=gg; d2[p+2]=b; d2[p+3]=255;
 d1[p]=r*0.6; d1[p+1]=gg*0.6; d1[p+2]=b*0.6; d1[p+3]=255;
}}
c1.putImageData(i1,0,0);c2.putImageData(i2,0,0);
var ctx=cv.getContext('2d');var P=[273.4,477.8,245.9,506.0,248.8,503.0,264.0,487.4,273.0,478.1,272.8,478.2,272.7,478.3,272.5,478.3,272.2,478.4,272.0,478.4,271.7,478.4,271.4,478.4,271.0,478.4,270.5,478.3,269.8,478.1,269.2,477.9,268.5,477.6,267.9,477.2,267.2,476.8,266.5,476.3,265.7,475.8,264.9,475.2,264.0,474.5,263.1,473.7,262.0,472.9,260.8,472.0,259.5,470.9,258.1,469.8,256.6,468.6,255.1,467.2,253.4,465.8,251.7,464.3,249.9,462.8,247.9,461.1,245.8,459.4,243.6,457.6,241.3,455.7,238.7,453.6,236.0,451.4,233.1,449.0,230.0,446.5,226.9,443.9,223.6,441.2,220.1,438.3,216.5,435.2,212.6,431.8,208.6,428.2,204.3,424.4,199.8,420.2,195.2,415.8,190.5,411.1,185.4,405.9,179.9,399.9,173.8,393.0,167.3,385.4,160.5,377.0,153.4,368.0,146.0,358.1,138.2,347.5,130.2,336.3,122.1,324.3,113.8,311.6,105.2,298.1,96.6,284.1,88.2,270.0,79.7,255.6,71.3,240.8,63.1,225.9,55.5,211.3,48.4,196.8,41.8,182.4,35.6,168.3,30.0,154.9,24.9,142.1,20.3,129.8,16.2,118.1,12.7,107.3,9.7,97.4,7.2,88.2,5.3,79.8,3.7,72.0,2.5,64.9,1.8,58.5,1.5,52.7,1.5,47.4,1.9,42.5,2.6,38.0,3.6,34.1,4.9,30.5,6.6,27.2,8.5,24.4,10.7,21.9,13.1,19.7,15.7,17.9,18.5,16.4,21.5,15.3,24.6,14.3,27.9,13.5,31.3,12.9,34.8,12.5,38.3,12.2,42.0,12.0,45.7,11.8,49.5,11.8,53.3,11.7,57.1,11.7,60.8,11.7,64.6,11.8,68.5,11.9,72.4,12.1,76.3,12.2,80.3,12.4,84.3,12.7,88.5,12.9,92.7,13.2,97.0,13.5,101.4,13.9,105.9,14.3,110.5,14.7,115.2,15.1,120.0,15.6,124.9,16.0,129.9,16.5,135.1,17.1,140.4,17.6,145.8,18.2,151.4,18.8,157.1,19.4,163.0,20.0,169.0,20.7,175.2,21.4,181.5,22.1,188.0,22.8,194.7,23.6,201.5,24.3,208.5,25.1,215.7,25.9,223.0,26.8,230.6,27.6,238.2,28.5,246.1,29.4,254.1,30.3,262.4,31.3,270.7,32.3,279.3,33.2,288.0,34.2,296.9,35.3,305.9,36.3,315.1,37.4,324.4,38.4,333.8,39.5,343.4,40.6,352.9,41.7,362.6,42.8,372.4,43.9,382.2,45.1,391.8,46.2,401.4,47.3,410.8,48.3,420.2,49.4,429.5,50.5,438.9,51.6,448.2,52.6,457.3,53.7,466.2,54.7,474.9,55.7,483.3,56.6,491.5,57.6,499.5,58.5,507.2,59.4,514.7,60.2,521.9,61.1,528.9,61.9,535.1,62.6,540.8,63.2,546.8,63.9,553.9,64.8,562.8,65.8,573.0,66.9,583.2,68.1,592.5,69.2,600.5,70.1,607.8,70.9,614.6,71.7,620.7,72.4,626.2,73.1,631.1,73.6,635.4,74.1,639.3,74.5,642.6,74.9,645.4,75.2,647.9,75.5,650.3,75.8,653.0,76.1,655.6,76.4,658.0,76.7,659.9,76.9,670.5,67.7,686.8,52.2,690.6,49.1,663.7,77.3];
ctx.save();ctx.beginPath();ctx.moveTo(P[0],P[1]);for(var q=2;q<P.length;q+=2)ctx.lineTo(P[q],P[q+1]);ctx.closePath();ctx.clip();
ctx.drawImage(o1,0,0);
ctx.beginPath();ctx.moveTo(479.72,63.74);ctx.lineTo(132.97,31.36);ctx.lineTo(186.67,362.12);ctx.closePath();ctx.clip();
ctx.drawImage(o2,0,0);ctx.restore();
})();
</script>

<div class="a" style="left:1267px;top:869px;width:60px;height:78px;border-radius:4px 4px 0 0;background:#2a2a2a"></div>
<div class="a" style="left:1267px;top:869px;width:60px;height:23px;border-radius:4px 4px 0 0;background:linear-gradient(#b8b8b8,#8e8e8e)"></div>
<div class="a" style="left:1267px;top:893px;width:60px;height:54px;background:linear-gradient(#a8a8a8,#8a8a8a 50%,#707070)"></div>
<div class="a" style="left:1288px;top:871px;width:19px;height:19px;background:linear-gradient(#787878,#9c9c9c 60%,#b4b4b4);border-radius:50%"></div>
<div class="a" style="left:1292px;top:877px;border-left:5.5px solid transparent;border-right:5.5px solid transparent;border-bottom:6px solid #333"></div>
<div class="a" style="left:1277px;top:900px;width:40px;height:38px;border-radius:5px;border:3px solid #1e1e1e;background:linear-gradient(#b4b4b4 50%,#9e9e9e 50%)"></div>
<div class="a" style="left:1289px;top:911px;width:17px;height:17px;background:linear-gradient(#151515 50%,#000 50%)"></div>
<div class="a" style="left:1328px;top:869px;width:283px;height:38px;background:linear-gradient(#bcbcbc,#9a9a9a 50%,#7a7a7a 85%,#6e6e6e)"></div>
<div class="a" style="left:1386px;top:869px;width:2px;height:38px;background:#262626"></div>
<div class="a" style="left:1442px;top:869px;width:2px;height:38px;background:#262626"></div>
<div class="a" style="left:1498.5px;top:869px;width:2px;height:38px;background:#262626"></div>
<div class="a" style="left:1555px;top:869px;width:2px;height:38px;background:#262626"></div>
<div class="a" style="left:1345.5px;top:876px;width:24px;height:24px;background:linear-gradient(#787878,#9c9c9c 60%,#b4b4b4);border-radius:50%"></div>
<div class="a" style="left:1402.5px;top:876px;width:24px;height:24px;background:linear-gradient(#787878,#9c9c9c 60%,#b4b4b4);border-radius:50%"></div>
<div class="a" style="left:1459px;top:876px;width:24px;height:24px;background:linear-gradient(#787878,#9c9c9c 60%,#b4b4b4);border-radius:50%"></div>
<div class="a" style="left:1515px;top:876px;width:24px;height:24px;background:linear-gradient(#787878,#9c9c9c 60%,#b4b4b4);border-radius:50%"></div>
<div class="a" style="left:1571px;top:876px;width:24px;height:24px;background:linear-gradient(#787878,#9c9c9c 60%,#b4b4b4);border-radius:50%"></div>
<div class="a" style="left:1352.5px;top:883.5px;width:10px;height:9.5px;background:#333"></div>
<div class="a" style="left:1411px;top:883.5px;border-top:5.8px solid transparent;border-bottom:5.8px solid transparent;border-left:10.5px solid #333"></div>
<svg class="a" style="left:1459px;top:876px" width="24" height="24"><g fill="none" stroke="#333" stroke-width="2"><path d="M6 7 H4.5 V17 H6"/><path d="M18 7 H19.5 V17 H18"/></g><g fill="#333"><circle cx="10" cy="12" r="1.1"/><circle cx="14" cy="12" r="1.1"/></g></svg>
<svg class="a" style="left:1515px;top:876px" width="24" height="24"><path d="M12 12 C9 8.5 5 8.5 5 12 C5 15.5 9 15.5 12 12 C15 8.5 19 8.5 19 12 C19 15.5 15 15.5 12 12 Z" fill="none" stroke="#333" stroke-width="2.2"/></svg>
<svg class="a" style="left:1571px;top:876px" width="24" height="24"><g fill="none" stroke="#333" stroke-width="2.3"><path d="M7.5 11 A5 5 0 0 1 16 8.5"/><path d="M16.5 13 A5 5 0 0 1 8 15.5"/></g><path d="M17.5 5.5 L17.5 11 L12.5 10 Z" fill="#333"/><path d="M6.5 18.5 L6.5 13 L11.5 14 Z" fill="#333"/></svg>
<div class="a" style="left:1328px;top:908px;width:170px;height:39px;background:linear-gradient(#bcbcbc,#9a9a9a 50%,#7a7a7a 85%,#6e6e6e)"></div>
<div class="a" style="left:1500px;top:908px;width:170px;height:39px;border-radius:0 4px 0 0;background:linear-gradient(#bcbcbc,#9a9a9a 50%,#7a7a7a 85%,#6e6e6e)"></div>
<div class="a" style="left:1498px;top:908px;width:2px;height:39px;background:#262626"></div>
<div class="a" style="left:1355px;top:915px;width:24px;height:24px;background:linear-gradient(#787878,#9c9c9c 60%,#b4b4b4);border-radius:50%"></div>
<div class="a" style="left:1621.5px;top:915px;width:24px;height:24px;background:linear-gradient(#787878,#9c9c9c 60%,#b4b4b4);border-radius:50%"></div>
<svg class="a" style="left:1355px;top:915px" width="24" height="24"><g fill="none" stroke="#333" stroke-width="2"><path d="M11 6.5 L6.5 12 L11 17.5"/><path d="M16 6.5 L11.5 12 L16 17.5"/></g></svg>
<svg class="a" style="left:1621.5px;top:915px" width="24" height="24"><g fill="none" stroke="#333" stroke-width="2"><path d="M8 6.5 L12.5 12 L8 17.5"/><path d="M13 6.5 L17.5 12 L13 17.5"/></g></svg>
<div class="t" style="left:1401px;top:914px;font-size:27px;letter-spacing:0.6px;-webkit-text-stroke:0.6px #383838;color:#383838">Back</div>
<div class="t" style="left:1534px;top:914px;font-size:27px;letter-spacing:2.3px;-webkit-text-stroke:0.6px #383838;color:#383838">Next</div>
<svg class="a" style="left:1618px;top:866px" width="42" height="42"><defs><filter id="ash" x="-30%" y="-30%" width="160%" height="160%"><feDropShadow dx="1" dy="1.2" stdDeviation="0.9" flood-color="#000" flood-opacity="0.8"/></filter></defs><g transform="translate(21 21)" filter="url(#ash)"><g id="ast"><rect x="-3.9" y="-17" width="7.8" height="34" rx="2.5" fill="#e00000"/></g><use href="#ast" transform="rotate(60)"/><use href="#ast" transform="rotate(-60)"/></g></svg>
<div class="t" style="left:15px;top:657px;font-size:30px;color:#f2f2f2">Current Reading</div>
<div class="t" style="left:15px;top:732px;font-size:25px;color:#f2f2f2">x: 0,3089</div>
<div class="t" style="left:172px;top:732px;font-size:25px;color:#f2f2f2">y: 0,3274</div>
<div class="t" style="left:15px;top:773px;font-size:25px;color:#f2f2f2">fL: 220,18</div>
<div class="t" style="left:15px;top:813px;font-size:25px;color:#f2f2f2">cd/m²: 754,38</div>
<svg class="a" style="left:300px;top:620px" width="330" height="245">
<defs><linearGradient id="rb0" x1="0" x2="0" y1="0" y2="1"><stop offset="0" stop-color="#ff5a5a"/><stop offset="1" stop-color="#ff4444"/></linearGradient><linearGradient id="rb1" x1="0" x2="0" y1="0" y2="1"><stop offset="0" stop-color="#58ae58"/><stop offset="1" stop-color="#3c9c3c"/></linearGradient><linearGradient id="rb2" x1="0" x2="0" y1="0" y2="1"><stop offset="0" stop-color="#5a5aff"/><stop offset="1" stop-color="#4242f2"/></linearGradient></defs>
<text x="168.39999999999998" y="31" font-size="13.5" fill="#d8d8d8" text-anchor="middle">RGB Balance</text>
<rect x="58.5" y="35.5" width="250.0" height="181.0" fill="#232323" stroke="#8c8c8c" stroke-width="2"/>
<line x1="58.5" y1="54.39999999999998" x2="308.5" y2="54.39999999999998" stroke="#8c8c8c" stroke-width="1.5"/>
<line x1="53.5" y1="54.39999999999998" x2="58.5" y2="54.39999999999998" stroke="#ccc" stroke-width="1.5"/>
<text x="52.5" y="59.39999999999998" font-size="14.5" fill="#dcdcdc" text-anchor="end">104</text>
<line x1="58.5" y1="91.20000000000005" x2="308.5" y2="91.20000000000005" stroke="#8c8c8c" stroke-width="1.5"/>
<line x1="53.5" y1="91.20000000000005" x2="58.5" y2="91.20000000000005" stroke="#ccc" stroke-width="1.5"/>
<text x="52.5" y="96.20000000000005" font-size="14.5" fill="#dcdcdc" text-anchor="end">102</text>
<line x1="58.5" y1="126.5" x2="308.5" y2="126.5" stroke="#8c8c8c" stroke-width="1.5"/>
<line x1="53.5" y1="126.5" x2="58.5" y2="126.5" stroke="#ccc" stroke-width="1.5"/>
<text x="52.5" y="131.5" font-size="14.5" fill="#dcdcdc" text-anchor="end">100</text>
<line x1="58.5" y1="162.89999999999998" x2="308.5" y2="162.89999999999998" stroke="#8c8c8c" stroke-width="1.5"/>
<line x1="53.5" y1="162.89999999999998" x2="58.5" y2="162.89999999999998" stroke="#ccc" stroke-width="1.5"/>
<text x="52.5" y="167.89999999999998" font-size="14.5" fill="#dcdcdc" text-anchor="end">98</text>
<line x1="58.5" y1="198.5" x2="308.5" y2="198.5" stroke="#8c8c8c" stroke-width="1.5"/>
<line x1="53.5" y1="198.5" x2="58.5" y2="198.5" stroke="#ccc" stroke-width="1.5"/>
<text x="52.5" y="203.5" font-size="14.5" fill="#dcdcdc" text-anchor="end">96</text>
<line x1="58.5" y1="216.5" x2="58.5" y2="221.5" stroke="#ccc" stroke-width="1.5"/>
<line x1="308.5" y1="216.5" x2="308.5" y2="221.5" stroke="#ccc" stroke-width="1.5"/>
<rect x="83.30000000000001" y="150.20000000000005" width="65.09999999999997" height="66.29999999999995" fill="url(#rb0)" stroke="#000" stroke-width="1.4"/>
<rect x="149" y="121.89999999999998" width="65.39999999999998" height="94.60000000000002" fill="url(#rb1)" stroke="#000" stroke-width="1.4"/>
<rect x="216.70000000000005" y="110.39999999999998" width="64.79999999999995" height="106.10000000000002" fill="url(#rb2)" stroke="#000" stroke-width="1.4"/>
<text x="183" y="233" font-size="14.5" fill="#dcdcdc" text-anchor="middle">100W</text>
</svg>
<div class="t" style="left:638px;top:630px;width:342px;text-align:center;font-size:13.5px;color:#d8d8d8">CIE 1931 xy</div>
<div class="a" style="left:637px;top:646px;width:344px;height:200px;background:#888"></div>
<svg class="a" style="left:639px;top:648px" width="340" height="196"><path fill="#84ffd9" d="M0 0h14v14h-14z"/><path fill="#8cffd9" d="M14 0h14v14h-14z"/><path fill="#94ffd9" d="M28 0h14v14h-14z"/><path fill="#9cffd8" d="M42 0h14v14h-14z"/><path fill="#a4ffd8" d="M56 0h14v14h-14z"/><path fill="#abffd7" d="M70 0h14v14h-14z"/><path fill="#b2ffd7" d="M84 0h14v14h-14z"/><path fill="#baffd7" d="M98 0h14v14h-14z"/><path fill="#c0ffd6" d="M112 0h14v14h-14z"/><path fill="#c7ffd6" d="M126 0h14v14h-14z"/><path fill="#ceffd5" d="M140 0h14v14h-14z"/><path fill="#d5ffd5" d="M154 0h14v14h-14z"/><path fill="#dbffd4" d="M168 0h14v14h-14z"/><path fill="#e2ffd4" d="M182 0h14v14h-14z"/><path fill="#e8ffd4" d="M196 0h14v14h-14z"/><path fill="#efffd3" d="M210 0h14v14h-14z"/><path fill="#f5ffd3" d="M224 0h14v14h-14z"/><path fill="#fbffd2" d="M238 0h14v14h-14z"/><path fill="#fffccf" d="M252 0h14v14h-14z"/><path fill="#fff6ca" d="M266 0h14v14h-14z"/><path fill="#fff1c5" d="M280 0h14v14h-14z"/><path fill="#ffebc0" d="M294 0h14v14h-14z"/><path fill="#ffe6bb" d="M308 0h14v14h-14z"/><path fill="#ffe1b7" d="M322 0h14v14h-14z"/><path fill="#ffdcb2" d="M336 0h14v14h-14z"/><path fill="#89ffde" d="M0 14h14v14h-14z"/><path fill="#91ffde" d="M14 14h14v14h-14z"/><path fill="#99ffde" d="M28 14h14v14h-14z"/><path fill="#a1ffdd" d="M42 14h14v14h-14z"/><path fill="#a9ffdd" d="M56 14h14v14h-14z"/><path fill="#b0ffdd" d="M70 14h14v14h-14z"/><path fill="#b7ffdc" d="M84 14h14v14h-14z"/><path fill="#bfffdc" d="M98 14h14v14h-14z"/><path fill="#c6ffdc" d="M112 14h14v14h-14z"/><path fill="#ccffdb" d="M126 14h14v14h-14z"/><path fill="#d3ffdb" d="M140 14h14v14h-14z"/><path fill="#daffdb" d="M154 14h14v14h-14z"/><path fill="#e1ffda" d="M168 14h14v14h-14z"/><path fill="#e7ffda" d="M182 14h14v14h-14z"/><path fill="#eeffd9" d="M196 14h14v14h-14z"/><path fill="#f4ffd9" d="M210 14h14v14h-14z"/><path fill="#fbffd9" d="M224 14h14v14h-14z"/><path fill="#fffdd6" d="M238 14h14v14h-14z"/><path fill="#fff7d1" d="M252 14h14v14h-14z"/><path fill="#fff1cb" d="M266 14h14v14h-14z"/><path fill="#ffebc6" d="M280 14h14v14h-14z"/><path fill="#ffe6c1" d="M294 14h14v14h-14z"/><path fill="#ffe1bd" d="M308 14h14v14h-14z"/><path fill="#ffdcb8" d="M322 14h14v14h-14z"/><path fill="#ffd8b4" d="M336 14h14v14h-14z"/><path fill="#8effe4" d="M0 28h14v14h-14z"/><path fill="#96ffe3" d="M14 28h14v14h-14z"/><path fill="#9effe3" d="M28 28h14v14h-14z"/><path fill="#a6ffe3" d="M42 28h14v14h-14z"/><path fill="#aeffe3" d="M56 28h14v14h-14z"/><path fill="#b5ffe2" d="M70 28h14v14h-14z"/><path fill="#bdffe2" d="M84 28h14v14h-14z"/><path fill="#c4ffe2" d="M98 28h14v14h-14z"/><path fill="#cbffe1" d="M112 28h14v14h-14z"/><path fill="#d2ffe1" d="M126 28h14v14h-14z"/><path fill="#d9ffe1" d="M140 28h14v14h-14z"/><path fill="#dfffe1" d="M154 28h14v14h-14z"/><path fill="#e6ffe0" d="M168 28h14v14h-14z"/><path fill="#edffe0" d="M182 28h14v14h-14z"/><path fill="#f3ffe0" d="M196 28h14v14h-14z"/><path fill="#faffdf" d="M210 28h14v14h-14z"/><path fill="#fffede" d="M224 28h14v14h-14z"/><path fill="#fff7d8" d="M238 28h14v14h-14z"/><path fill="#fff1d2" d="M252 28h14v14h-14z"/><path fill="#ffeccd" d="M266 28h14v14h-14z"/><path fill="#ffe6c8" d="M280 28h14v14h-14z"/><path fill="#ffe1c3" d="M294 28h14v14h-14z"/><path fill="#ffdcbe" d="M308 28h14v14h-14z"/><path fill="#ffd7ba" d="M322 28h14v14h-14z"/><path fill="#ffd3b6" d="M336 28h14v14h-14z"/><path fill="#93ffe9" d="M0 42h14v14h-14z"/><path fill="#9bffe9" d="M14 42h14v14h-14z"/><path fill="#a3ffe9" d="M28 42h14v14h-14z"/><path fill="#abffe9" d="M42 42h14v14h-14z"/><path fill="#b3ffe8" d="M56 42h14v14h-14z"/><path fill="#baffe8" d="M70 42h14v14h-14z"/><path fill="#c2ffe8" d="M84 42h14v14h-14z"/><path fill="#c9ffe8" d="M98 42h14v14h-14z"/><path fill="#d0ffe7" d="M112 42h14v14h-14z"/><path fill="#d7ffe7" d="M126 42h14v14h-14z"/><path fill="#deffe7" d="M140 42h14v14h-14z"/><path fill="#e5ffe7" d="M154 42h14v14h-14z"/><path fill="#ecffe6" d="M168 42h14v14h-14z"/><path fill="#f2ffe6" d="M182 42h14v14h-14z"/><path fill="#f9ffe6" d="M196 42h14v14h-14z"/><path fill="#fffee5" d="M210 42h14v14h-14z"/><path fill="#fff8df" d="M224 42h14v14h-14z"/><path fill="#fff2d9" d="M238 42h14v14h-14z"/><path fill="#ffecd3" d="M252 42h14v14h-14z"/><path fill="#ffe6ce" d="M266 42h14v14h-14z"/><path fill="#ffe1c9" d="M280 42h14v14h-14z"/><path fill="#ffdcc4" d="M294 42h14v14h-14z"/><path fill="#ffd7c0" d="M308 42h14v14h-14z"/><path fill="#ffd2bb" d="M322 42h14v14h-14z"/><path fill="#ffceb7" d="M336 42h14v14h-14z"/><path fill="#98ffef" d="M0 56h14v14h-14z"/><path fill="#a1ffef" d="M14 56h14v14h-14z"/><path fill="#a9ffee" d="M28 56h14v14h-14z"/><path fill="#b0ffee" d="M42 56h14v14h-14z"/><path fill="#b8ffee" d="M56 56h14v14h-14z"/><path fill="#c0ffee" d="M70 56h14v14h-14z"/><path fill="#c7ffee" d="M84 56h14v14h-14z"/><path fill="#ceffee" d="M98 56h14v14h-14z"/><path fill="#d6ffed" d="M112 56h14v14h-14z"/><path fill="#ddffed" d="M126 56h14v14h-14z"/><path fill="#e4ffed" d="M140 56h14v14h-14z"/><path fill="#ebffed" d="M154 56h14v14h-14z"/><path fill="#f2ffed" d="M168 56h14v14h-14z"/><path fill="#f8ffec" d="M182 56h14v14h-14z"/><path fill="#ffffec" d="M196 56h14v14h-14z"/><path fill="#fff8e6" d="M210 56h14v14h-14z"/><path fill="#fff2e0" d="M224 56h14v14h-14z"/><path fill="#ffecda" d="M238 56h14v14h-14z"/><path fill="#ffe6d5" d="M252 56h14v14h-14z"/><path fill="#ffe1cf" d="M266 56h14v14h-14z"/><path fill="#ffdcca" d="M280 56h14v14h-14z"/><path fill="#ffd7c6" d="M294 56h14v14h-14z"/><path fill="#ffd2c1" d="M308 56h14v14h-14z"/><path fill="#ffcebd" d="M322 56h14v14h-14z"/><path fill="#ffc9b9" d="M336 56h14v14h-14z"/><path fill="#9dfff5" d="M0 70h14v14h-14z"/><path fill="#a6fff4" d="M14 70h14v14h-14z"/><path fill="#aefff4" d="M28 70h14v14h-14z"/><path fill="#b6fff4" d="M42 70h14v14h-14z"/><path fill="#befff4" d="M56 70h14v14h-14z"/><path fill="#c5fff4" d="M70 70h14v14h-14z"/><path fill="#cdfff4" d="M84 70h14v14h-14z"/><path fill="#d4fff4" d="M98 70h14v14h-14z"/><path fill="#dbfff4" d="M112 70h14v14h-14z"/><path fill="#e2fff4" d="M126 70h14v14h-14z"/><path fill="#eafff3" d="M140 70h14v14h-14z"/><path fill="#f1fff3" d="M154 70h14v14h-14z"/><path fill="#f8fff3" d="M168 70h14v14h-14z"/><path fill="#fffff3" d="M182 70h14v14h-14z"/><path fill="#fff9ed" d="M196 70h14v14h-14z"/><path fill="#fff2e7" d="M210 70h14v14h-14z"/><path fill="#ffece1" d="M224 70h14v14h-14z"/><path fill="#ffe6db" d="M238 70h14v14h-14z"/><path fill="#ffe1d6" d="M252 70h14v14h-14z"/><path fill="#ffdcd1" d="M266 70h14v14h-14z"/><path fill="#ffd7cc" d="M280 70h14v14h-14z"/><path fill="#ffd2c7" d="M294 70h14v14h-14z"/><path fill="#ffcdc3" d="M308 70h14v14h-14z"/><path fill="#ffc9be" d="M322 70h14v14h-14z"/><path fill="#ffc5ba" d="M336 70h14v14h-14z"/><path fill="#a3fffa" d="M0 84h14v14h-14z"/><path fill="#abfffa" d="M14 84h14v14h-14z"/><path fill="#b3fffa" d="M28 84h14v14h-14z"/><path fill="#bbfffa" d="M42 84h14v14h-14z"/><path fill="#c3fffa" d="M56 84h14v14h-14z"/><path fill="#cbfffa" d="M70 84h14v14h-14z"/><path fill="#d2fffa" d="M84 84h14v14h-14z"/><path fill="#dafffa" d="M98 84h14v14h-14z"/><path fill="#e1fffa" d="M112 84h14v14h-14z"/><path fill="#e8fffa" d="M126 84h14v14h-14z"/><path fill="#f0fffa" d="M140 84h14v14h-14z"/><path fill="#f7fffa" d="M154 84h14v14h-14z"/><path fill="#fefffa" d="M168 84h14v14h-14z"/><path fill="#fff9f4" d="M182 84h14v14h-14z"/><path fill="#fff3ee" d="M196 84h14v14h-14z"/><path fill="#ffece8" d="M210 84h14v14h-14z"/><path fill="#ffe6e2" d="M224 84h14v14h-14z"/><path fill="#ffe1dc" d="M238 84h14v14h-14z"/><path fill="#ffdbd7" d="M252 84h14v14h-14z"/><path fill="#ffd6d2" d="M266 84h14v14h-14z"/><path fill="#ffd1cd" d="M280 84h14v14h-14z"/><path fill="#ffcdc8" d="M294 84h14v14h-14z"/><path fill="#ffc8c4" d="M308 84h14v14h-14z"/><path fill="#ffc4c0" d="M322 84h14v14h-14z"/><path fill="#ffc0bc" d="M336 84h14v14h-14z"/><path fill="#a7fdff" d="M0 98h14v14h-14z"/><path fill="#b0fdff" d="M14 98h14v14h-14z"/><path fill="#b8fdff" d="M28 98h14v14h-14z"/><path fill="#c0fdff" d="M42 98h14v14h-14z"/><path fill="#c8fdff" d="M56 98h14v14h-14z"/><path fill="#cffdff" d="M70 98h14v14h-14z"/><path fill="#d7fdff" d="M84 98h14v14h-14z"/><path fill="#defdff" d="M98 98h14v14h-14z"/><path fill="#e6fdff" d="M112 98h14v14h-14z"/><path fill="#edfdff" d="M126 98h14v14h-14z"/><path fill="#f4fdff" d="M140 98h14v14h-14z"/><path fill="#fbfdff" d="M154 98h14v14h-14z"/><path fill="#fffafc" d="M168 98h14v14h-14z"/><path fill="#fff3f5" d="M182 98h14v14h-14z"/><path fill="#ffedee" d="M196 98h14v14h-14z"/><path fill="#ffe6e8" d="M210 98h14v14h-14z"/><path fill="#ffe1e3" d="M224 98h14v14h-14z"/><path fill="#ffdbdd" d="M238 98h14v14h-14z"/><path fill="#ffd6d8" d="M252 98h14v14h-14z"/><path fill="#ffd1d3" d="M266 98h14v14h-14z"/><path fill="#ffccce" d="M280 98h14v14h-14z"/><path fill="#ffc8ca" d="M294 98h14v14h-14z"/><path fill="#ffc3c5" d="M308 98h14v14h-14z"/><path fill="#ffbfc1" d="M322 98h14v14h-14z"/><path fill="#ffbbbd" d="M336 98h14v14h-14z"/><path fill="#a9f7ff" d="M0 112h14v14h-14z"/><path fill="#b1f7ff" d="M14 112h14v14h-14z"/><path fill="#b9f7ff" d="M28 112h14v14h-14z"/><path fill="#c1f7ff" d="M42 112h14v14h-14z"/><path fill="#c8f7ff" d="M56 112h14v14h-14z"/><path fill="#d0f7ff" d="M70 112h14v14h-14z"/><path fill="#d7f7ff" d="M84 112h14v14h-14z"/><path fill="#def7ff" d="M98 112h14v14h-14z"/><path fill="#e6f6ff" d="M112 112h14v14h-14z"/><path fill="#edf6ff" d="M126 112h14v14h-14z"/><path fill="#f4f6ff" d="M140 112h14v14h-14z"/><path fill="#fbf6ff" d="M154 112h14v14h-14z"/><path fill="#fff3fc" d="M168 112h14v14h-14z"/><path fill="#ffedf6" d="M182 112h14v14h-14z"/><path fill="#ffe7ef" d="M196 112h14v14h-14z"/><path fill="#ffe1e9" d="M210 112h14v14h-14z"/><path fill="#ffdbe4" d="M224 112h14v14h-14z"/><path fill="#ffd6de" d="M238 112h14v14h-14z"/><path fill="#ffd1d9" d="M252 112h14v14h-14z"/><path fill="#ffccd4" d="M266 112h14v14h-14z"/><path fill="#ffc7cf" d="M280 112h14v14h-14z"/><path fill="#ffc3cb" d="M294 112h14v14h-14z"/><path fill="#ffbec6" d="M308 112h14v14h-14z"/><path fill="#ffbac2" d="M322 112h14v14h-14z"/><path fill="#ffb6be" d="M336 112h14v14h-14z"/><path fill="#aaf1ff" d="M0 126h14v14h-14z"/><path fill="#b2f1ff" d="M14 126h14v14h-14z"/><path fill="#baf1ff" d="M28 126h14v14h-14z"/><path fill="#c1f1ff" d="M42 126h14v14h-14z"/><path fill="#c9f1ff" d="M56 126h14v14h-14z"/><path fill="#d0f0ff" d="M70 126h14v14h-14z"/><path fill="#d7f0ff" d="M84 126h14v14h-14z"/><path fill="#dff0ff" d="M98 126h14v14h-14z"/><path fill="#e6f0ff" d="M112 126h14v14h-14z"/><path fill="#edf0ff" d="M126 126h14v14h-14z"/><path fill="#f4efff" d="M140 126h14v14h-14z"/><path fill="#faefff" d="M154 126h14v14h-14z"/><path fill="#ffedfd" d="M168 126h14v14h-14z"/><path fill="#ffe7f6" d="M182 126h14v14h-14z"/><path fill="#ffe1f0" d="M196 126h14v14h-14z"/><path fill="#ffdbea" d="M210 126h14v14h-14z"/><path fill="#ffd5e5" d="M224 126h14v14h-14z"/><path fill="#ffd0df" d="M238 126h14v14h-14z"/><path fill="#ffcbda" d="M252 126h14v14h-14z"/><path fill="#ffc7d5" d="M266 126h14v14h-14z"/><path fill="#ffc2d1" d="M280 126h14v14h-14z"/><path fill="#ffbecc" d="M294 126h14v14h-14z"/><path fill="#ffb9c8" d="M308 126h14v14h-14z"/><path fill="#ffb5c4" d="M322 126h14v14h-14z"/><path fill="#ffb1c0" d="M336 126h14v14h-14z"/><path fill="#acebff" d="M0 140h14v14h-14z"/><path fill="#b3ebff" d="M14 140h14v14h-14z"/><path fill="#bbebff" d="M28 140h14v14h-14z"/><path fill="#c2ebff" d="M42 140h14v14h-14z"/><path fill="#caeaff" d="M56 140h14v14h-14z"/><path fill="#d1eaff" d="M70 140h14v14h-14z"/><path fill="#d8eaff" d="M84 140h14v14h-14z"/><path fill="#dfeaff" d="M98 140h14v14h-14z"/><path fill="#e6e9ff" d="M112 140h14v14h-14z"/><path fill="#ece9ff" d="M126 140h14v14h-14z"/><path fill="#f3e9ff" d="M140 140h14v14h-14z"/><path fill="#fae9ff" d="M154 140h14v14h-14z"/><path fill="#ffe7fd" d="M168 140h14v14h-14z"/><path fill="#ffe1f7" d="M182 140h14v14h-14z"/><path fill="#ffdbf1" d="M196 140h14v14h-14z"/><path fill="#ffd5eb" d="M210 140h14v14h-14z"/><path fill="#ffd0e5" d="M224 140h14v14h-14z"/><path fill="#ffcbe0" d="M238 140h14v14h-14z"/><path fill="#ffc6db" d="M252 140h14v14h-14z"/><path fill="#ffc1d6" d="M266 140h14v14h-14z"/><path fill="#ffbdd2" d="M280 140h14v14h-14z"/><path fill="#ffb9cd" d="M294 140h14v14h-14z"/><path fill="#ffb5c9" d="M308 140h14v14h-14z"/><path fill="#ffb1c5" d="M322 140h14v14h-14z"/><path fill="#ffadc1" d="M336 140h14v14h-14z"/><path fill="#ade5ff" d="M0 154h14v14h-14z"/><path fill="#b4e5ff" d="M14 154h14v14h-14z"/><path fill="#bce5ff" d="M28 154h14v14h-14z"/><path fill="#c3e4ff" d="M42 154h14v14h-14z"/><path fill="#cae4ff" d="M56 154h14v14h-14z"/><path fill="#d1e4ff" d="M70 154h14v14h-14z"/><path fill="#d8e4ff" d="M84 154h14v14h-14z"/><path fill="#dfe3ff" d="M98 154h14v14h-14z"/><path fill="#e6e3ff" d="M112 154h14v14h-14z"/><path fill="#ece3ff" d="M126 154h14v14h-14z"/><path fill="#f3e2ff" d="M140 154h14v14h-14z"/><path fill="#fae2ff" d="M154 154h14v14h-14z"/><path fill="#ffe0fe" d="M168 154h14v14h-14z"/><path fill="#ffdaf7" d="M182 154h14v14h-14z"/><path fill="#ffd5f1" d="M196 154h14v14h-14z"/><path fill="#ffcfec" d="M210 154h14v14h-14z"/><path fill="#ffcae6" d="M224 154h14v14h-14z"/><path fill="#ffc5e1" d="M238 154h14v14h-14z"/><path fill="#ffc1dc" d="M252 154h14v14h-14z"/><path fill="#ffbcd7" d="M266 154h14v14h-14z"/><path fill="#ffb8d3" d="M280 154h14v14h-14z"/><path fill="#ffb4ce" d="M294 154h14v14h-14z"/><path fill="#ffb0ca" d="M308 154h14v14h-14z"/><path fill="#ffacc6" d="M322 154h14v14h-14z"/><path fill="#ffa8c2" d="M336 154h14v14h-14z"/><path fill="#aee0ff" d="M0 168h14v14h-14z"/><path fill="#b5dfff" d="M14 168h14v14h-14z"/><path fill="#bddfff" d="M28 168h14v14h-14z"/><path fill="#c4deff" d="M42 168h14v14h-14z"/><path fill="#cbdeff" d="M56 168h14v14h-14z"/><path fill="#d2deff" d="M70 168h14v14h-14z"/><path fill="#d8ddff" d="M84 168h14v14h-14z"/><path fill="#dfddff" d="M98 168h14v14h-14z"/><path fill="#e6ddff" d="M112 168h14v14h-14z"/><path fill="#ecdcff" d="M126 168h14v14h-14z"/><path fill="#f3dcff" d="M140 168h14v14h-14z"/><path fill="#f9dbff" d="M154 168h14v14h-14z"/><path fill="#ffdafe" d="M168 168h14v14h-14z"/><path fill="#ffd4f8" d="M182 168h14v14h-14z"/><path fill="#ffcff2" d="M196 168h14v14h-14z"/><path fill="#ffcaec" d="M210 168h14v14h-14z"/><path fill="#ffc5e7" d="M224 168h14v14h-14z"/><path fill="#ffc0e2" d="M238 168h14v14h-14z"/><path fill="#ffbbdd" d="M252 168h14v14h-14z"/><path fill="#ffb7d8" d="M266 168h14v14h-14z"/><path fill="#ffb3d4" d="M280 168h14v14h-14z"/><path fill="#ffafcf" d="M294 168h14v14h-14z"/><path fill="#ffabcb" d="M308 168h14v14h-14z"/><path fill="#ffa7c7" d="M322 168h14v14h-14z"/><path fill="#ffa3c3" d="M336 168h14v14h-14z"/><path fill="#afdaff" d="M0 182h14v14h-14z"/><path fill="#b6d9ff" d="M14 182h14v14h-14z"/><path fill="#bed9ff" d="M28 182h14v14h-14z"/><path fill="#c4d9ff" d="M42 182h14v14h-14z"/><path fill="#cbd8ff" d="M56 182h14v14h-14z"/><path fill="#d2d8ff" d="M70 182h14v14h-14z"/><path fill="#d9d7ff" d="M84 182h14v14h-14z"/><path fill="#dfd7ff" d="M98 182h14v14h-14z"/><path fill="#e6d6ff" d="M112 182h14v14h-14z"/><path fill="#ecd6ff" d="M126 182h14v14h-14z"/><path fill="#f3d5ff" d="M140 182h14v14h-14z"/><path fill="#f9d5ff" d="M154 182h14v14h-14z"/><path fill="#ffd4ff" d="M168 182h14v14h-14z"/><path fill="#ffcef9" d="M182 182h14v14h-14z"/><path fill="#ffc9f3" d="M196 182h14v14h-14z"/><path fill="#ffc4ed" d="M210 182h14v14h-14z"/><path fill="#ffbfe8" d="M224 182h14v14h-14z"/><path fill="#ffbae3" d="M238 182h14v14h-14z"/><path fill="#ffb6de" d="M252 182h14v14h-14z"/><path fill="#ffb2d9" d="M266 182h14v14h-14z"/><path fill="#ffadd5" d="M280 182h14v14h-14z"/><path fill="#ffa9d0" d="M294 182h14v14h-14z"/><path fill="#ffa6cc" d="M308 182h14v14h-14z"/><path fill="#ffa2c8" d="M322 182h14v14h-14z"/><path fill="#ff9ec4" d="M336 182h14v14h-14z"/></svg>
<canvas id="cxy" class="a" width="340" height="196" style="left:639px;top:648px"></canvas>
<svg class="a" style="left:637px;top:646px" width="344" height="200">
<rect x="164" y="92" width="14" height="14" fill="none" stroke="#000" stroke-width="2.2"/>
<circle cx="143.5" cy="107" r="4.3" fill="#fff" stroke="#111" stroke-width="1.3"/>
<circle cx="144.6" cy="106.3" r="4.3" fill="#fff" stroke="#111" stroke-width="1.3"/>
</svg>
<script>
(function(){
var cv=document.getElementById('cxy');var W=cv.width,H=cv.height;var ctx=cv.getContext('2d');
var img=ctx.createImageData(W,H);var d=img.data;
var x0=0.3127,y0=0.329, sx=0.00028, sy=0.00042, cx=168, cy=101;
for(var j=0;j<H;j++){for(var i=0;i<W;i++){
 var x=x0+(i-cx)*sx, y=y0-(j-cy)*sy;
 var X=x/y,Y=1,Z=(1-x-y)/y;
 var r=3.2406*X-1.5372*Y-0.4986*Z, g=-0.9689*X+1.8758*Y+0.0415*Z, b=0.0557*X-0.2040*Y+1.0570*Z;
 r=Math.max(r,0);g=Math.max(g,0);b=Math.max(b,0);var m=Math.max(r,g,b)||1;r/=m;g/=m;b/=m;
 r=Math.pow(r,0.5);g=Math.pow(g,0.5);b=Math.pow(b,0.5);
 var p=(j*W+i)*4;d[p]=r*255;d[p+1]=g*255;d[p+2]=b*255;d[p+3]=255;
}}
ctx.putImageData(img,0,0);
})();
</script>
<div class="a" style="left:996px;top:631px;width:653px;height:225px;background:#000"></div>
<div class="a" style="left:997px;top:632px;width:651px;height:223px;background:#3a3a3a;overflow:hidden" id="tbl">
<div class="a" style="left:0;top:0;width:634px;height:17px;background:#2d2d2d"></div>
<div class="a" style="left:0;top:17px;width:634px;height:17px;background:#141414"></div>
<div class="a" style="left:634px;top:0;width:17px;height:34px;background:#383838"></div>
<div class="t" style="left:81.4px;top:9.5px;width:100px;text-align:center;font-size:17px;color:#f0f0f0"><span style="display:inline-block;transform:scaleX(0.92)">White</span></div>
<div class="t" style="left:154.7px;top:9.5px;width:100px;text-align:center;font-size:17px;color:#f0f0f0"><span style="display:inline-block;transform:scaleX(0.92)">Red</span></div>
<div class="t" style="left:228.0px;top:9.5px;width:100px;text-align:center;font-size:17px;color:#f0f0f0"><span style="display:inline-block;transform:scaleX(0.92)">Green</span></div>
<div class="t" style="left:301.3px;top:9.5px;width:100px;text-align:center;font-size:17px;color:#f0f0f0"><span style="display:inline-block;transform:scaleX(0.92)">Blue</span></div>
<div class="t" style="left:373.8px;top:9.5px;width:100px;text-align:center;font-size:17px;color:#f0f0f0"><span style="display:inline-block;transform:scaleX(0.92)">Cyan</span></div>
<div class="t" style="left:452.0px;top:9.5px;width:100px;text-align:center;font-size:17px;color:#f0f0f0"><span style="display:inline-block;transform:scaleX(0.92)">Magenta</span></div>
<div class="t" style="left:529.3px;top:9.5px;width:100px;text-align:center;font-size:17px;color:#f0f0f0"><span style="display:inline-block;transform:scaleX(0.92)">Yellow</span></div>
<div class="a" style="left:0;top:34px;width:634px;height:31px;background:#3c3c3c"></div>
<div class="t" style="left:13px;top:40.5px;font-size:19px;font-weight:bold;color:#f4f4f4;transform:scaleX(0.84);transform-origin:0 0">x: CIE31</div>
<div class="t" style="left:98.0px;top:40.5px;font-size:19px;color:#f4f4f4;transform:scaleX(0.86);transform-origin:0 0">0,3087</div>
<div class="t" style="left:175.4px;top:40.5px;font-size:19px;color:#f4f4f4;transform:scaleX(0.86);transform-origin:0 0">0,6474</div>
<div class="t" style="left:243.4px;top:40.5px;font-size:19px;color:#f4f4f4;transform:scaleX(0.86);transform-origin:0 0">0,3011</div>
<div class="t" style="left:321.6px;top:40.5px;font-size:19px;color:#f4f4f4;transform:scaleX(0.86);transform-origin:0 0">0,1466</div>
<div class="t" style="left:390.0px;top:40.5px;font-size:19px;color:#f4f4f4;transform:scaleX(0.86);transform-origin:0 0">0,2227</div>
<div class="t" style="left:468.0px;top:40.5px;font-size:19px;color:#f4f4f4;transform:scaleX(0.86);transform-origin:0 0">0,3142</div>
<div class="t" style="left:545.5px;top:40.5px;font-size:19px;color:#f4f4f4;transform:scaleX(0.86);transform-origin:0 0">0,4194</div>
<div class="t" style="left:623.3px;top:40.5px;font-size:19px;color:#f4f4f4;transform:scaleX(0.86);transform-origin:0 0">0,</div>
<div class="a" style="left:0;top:65px;width:634px;height:31px;background:linear-gradient(#7a7a7a,#6c6c6c)"></div>
<div class="t" style="left:13px;top:71.5px;font-size:19px;font-weight:bold;color:#f4f4f4;transform:scaleX(0.84);transform-origin:0 0">y: CIE31</div>
<div class="t" style="left:98.0px;top:71.5px;font-size:19px;color:#f4f4f4;transform:scaleX(0.86);transform-origin:0 0">0,3270</div>
<div class="t" style="left:175.4px;top:71.5px;font-size:19px;color:#f4f4f4;transform:scaleX(0.86);transform-origin:0 0">0,3322</div>
<div class="t" style="left:243.4px;top:71.5px;font-size:19px;color:#f4f4f4;transform:scaleX(0.86);transform-origin:0 0">0,6056</div>
<div class="t" style="left:321.6px;top:71.5px;font-size:19px;color:#f4f4f4;transform:scaleX(0.86);transform-origin:0 0">0,0592</div>
<div class="t" style="left:390.0px;top:71.5px;font-size:19px;color:#f4f4f4;transform:scaleX(0.86);transform-origin:0 0">0,3255</div>
<div class="t" style="left:468.0px;top:71.5px;font-size:19px;color:#f4f4f4;transform:scaleX(0.86);transform-origin:0 0">0,1509</div>
<div class="t" style="left:545.5px;top:71.5px;font-size:19px;color:#f4f4f4;transform:scaleX(0.86);transform-origin:0 0">0,5112</div>
<div class="t" style="left:623.3px;top:71.5px;font-size:19px;color:#f4f4f4;transform:scaleX(0.86);transform-origin:0 0">0,</div>
<div class="a" style="left:0;top:96px;width:634px;height:31px;background:#3c3c3c"></div>
<div class="t" style="left:13px;top:102.5px;font-size:19px;font-weight:bold;color:#f4f4f4;transform:scaleX(0.84);transform-origin:0 0">Y</div>
<div class="t" style="left:98.0px;top:102.5px;font-size:19px;color:#f4f4f4;transform:scaleX(0.86);transform-origin:0 0">389,8928</div>
<div class="t" style="left:175.4px;top:102.5px;font-size:19px;color:#f4f4f4;transform:scaleX(0.86);transform-origin:0 0">79,8645</div>
<div class="t" style="left:243.4px;top:102.5px;font-size:19px;color:#f4f4f4;transform:scaleX(0.86);transform-origin:0 0">284,1846</div>
<div class="t" style="left:321.6px;top:102.5px;font-size:19px;color:#f4f4f4;transform:scaleX(0.86);transform-origin:0 0">28,2728</div>
<div class="t" style="left:390.0px;top:102.5px;font-size:19px;color:#f4f4f4;transform:scaleX(0.86);transform-origin:0 0">307,2725</div>
<div class="t" style="left:468.0px;top:102.5px;font-size:19px;color:#f4f4f4;transform:scaleX(0.86);transform-origin:0 0">109,3357</div>
<div class="t" style="left:545.5px;top:102.5px;font-size:19px;color:#f4f4f4;transform:scaleX(0.86);transform-origin:0 0">356,1355</div>
<div class="t" style="left:623.3px;top:102.5px;font-size:19px;color:#f4f4f4;transform:scaleX(0.86);transform-origin:0 0">7</div>
<div class="a" style="left:0;top:127px;width:634px;height:31px;background:linear-gradient(#7a7a7a,#6c6c6c)"></div>
<div class="t" style="left:13px;top:133.5px;font-size:19px;font-weight:bold;color:#f4f4f4;transform:scaleX(0.84);transform-origin:0 0">Target Y</div>
<div class="t" style="left:98.0px;top:133.5px;font-size:19px;color:#f4f4f4;transform:scaleX(0.86);transform-origin:0 0">393,0305</div>
<div class="t" style="left:175.4px;top:133.5px;font-size:19px;color:#f4f4f4;transform:scaleX(0.86);transform-origin:0 0">83,5803</div>
<div class="t" style="left:243.4px;top:133.5px;font-size:19px;color:#f4f4f4;transform:scaleX(0.86);transform-origin:0 0">281,0791</div>
<div class="t" style="left:321.6px;top:133.5px;font-size:19px;color:#f4f4f4;transform:scaleX(0.86);transform-origin:0 0">28,3711</div>
<div class="t" style="left:390.0px;top:133.5px;font-size:19px;color:#f4f4f4;transform:scaleX(0.86);transform-origin:0 0">309,4502</div>
<div class="t" style="left:468.0px;top:133.5px;font-size:19px;color:#f4f4f4;transform:scaleX(0.86);transform-origin:0 0">111,9514</div>
<div class="t" style="left:545.5px;top:133.5px;font-size:19px;color:#f4f4f4;transform:scaleX(0.86);transform-origin:0 0">364,6593</div>
<div class="t" style="left:623.3px;top:133.5px;font-size:19px;color:#f4f4f4;transform:scaleX(0.86);transform-origin:0 0">7</div>
<div class="a" style="left:0;top:158px;width:634px;height:31px;background:#3c3c3c"></div>
<div class="t" style="left:13px;top:164.5px;font-size:19px;font-weight:bold;color:#f4f4f4;transform:scaleX(0.84);transform-origin:0 0">ΔE 2000</div>
<div class="t" style="left:98.0px;top:164.5px;font-size:19px;color:#f4f4f4;transform:scaleX(0.86);transform-origin:0 0">1,7728</div>
<div class="t" style="left:175.4px;top:164.5px;font-size:19px;color:#f4f4f4;transform:scaleX(0.86);transform-origin:0 0">1,8352</div>
<div class="t" style="left:243.4px;top:164.5px;font-size:19px;color:#f4f4f4;transform:scaleX(0.86);transform-origin:0 0">0,5845</div>
<div class="t" style="left:321.6px;top:164.5px;font-size:19px;color:#f4f4f4;transform:scaleX(0.86);transform-origin:0 0">0,5954</div>
<div class="t" style="left:390.0px;top:164.5px;font-size:19px;color:#f4f4f4;transform:scaleX(0.86);transform-origin:0 0">0,7213</div>
<div class="t" style="left:468.0px;top:164.5px;font-size:19px;color:#f4f4f4;transform:scaleX(0.86);transform-origin:0 0">0,7984</div>
<div class="t" style="left:545.5px;top:164.5px;font-size:19px;color:#f4f4f4;transform:scaleX(0.86);transform-origin:0 0">0,8254</div>
<div class="t" style="left:623.3px;top:164.5px;font-size:19px;color:#f4f4f4;transform:scaleX(0.86);transform-origin:0 0">2,</div>
<div class="a" style="left:0;top:189px;width:634px;height:31px;background:linear-gradient(#7a7a7a,#6c6c6c)"></div>
<div class="t" style="left:13px;top:195.5px;font-size:19px;font-weight:bold;color:#f4f4f4;transform:scaleX(0.84);transform-origin:0 0">ΔE ITP</div>
<div class="t" style="left:98.0px;top:195.5px;font-size:19px;color:#f4f4f4;transform:scaleX(0.86);transform-origin:0 0">2,5342</div>
<div class="t" style="left:175.4px;top:195.5px;font-size:19px;color:#f4f4f4;transform:scaleX(0.86);transform-origin:0 0">8,4178</div>
<div class="t" style="left:243.4px;top:195.5px;font-size:19px;color:#f4f4f4;transform:scaleX(0.86);transform-origin:0 0">3,1508</div>
<div class="t" style="left:321.6px;top:195.5px;font-size:19px;color:#f4f4f4;transform:scaleX(0.86);transform-origin:0 0">8,7450</div>
<div class="t" style="left:390.0px;top:195.5px;font-size:19px;color:#f4f4f4;transform:scaleX(0.86);transform-origin:0 0">1,5748</div>
<div class="t" style="left:468.0px;top:195.5px;font-size:19px;color:#f4f4f4;transform:scaleX(0.86);transform-origin:0 0">5,3871</div>
<div class="t" style="left:545.5px;top:195.5px;font-size:19px;color:#f4f4f4;transform:scaleX(0.86);transform-origin:0 0">4,1304</div>
<div class="t" style="left:623.3px;top:195.5px;font-size:19px;color:#f4f4f4;transform:scaleX(0.86);transform-origin:0 0">2</div>
<div class="a" style="left:634px;top:34px;width:17px;height:170px;background:#5c5c5c"></div>
<div class="a" style="left:635.5px;top:34px;width:15px;height:18px;border-radius:3px;background:#7a7a7a;border:1px solid #888"></div>
<div class="a" style="left:637px;top:39px;border-left:6px solid transparent;border-right:6px solid transparent;border-bottom:6px solid #3a3a3a"></div>
<div class="a" style="left:636px;top:56px;width:13px;height:105px;border-radius:6px;background:#454545"></div>
<div class="a" style="left:635.5px;top:186px;width:15px;height:16px;border-radius:3px;background:#7a7a7a;border:1px solid #888"></div>
<div class="a" style="left:637px;top:191px;border-left:6px solid transparent;border-right:6px solid transparent;border-top:6px solid #3a3a3a"></div>
<div class="a" style="left:0;top:204px;width:634px;height:19px;background:#5c5c5c"></div>
<div class="a" style="left:2px;top:206px;width:14px;height:16px;border-radius:3px;background:#7a7a7a;border:1px solid #888"></div>
<div class="a" style="left:5px;top:208.5px;border-top:5.5px solid transparent;border-bottom:5.5px solid transparent;border-right:6px solid #3a3a3a"></div>
<div class="a" style="left:20px;top:206px;width:540px;height:15px;border-radius:7px;background:#454545"></div>
<div class="a" style="left:618px;top:206px;width:14px;height:16px;border-radius:3px;background:#7a7a7a;border:1px solid #888"></div>
<div class="a" style="left:622px;top:208.5px;border-top:5.5px solid transparent;border-bottom:5.5px solid transparent;border-left:6px solid #3a3a3a"></div>
<div class="a" style="left:634px;top:204px;width:17px;height:20px;background:#333"></div>
</div>
<div class="a" style="left:2px;top:870px;width:156px;height:76px;border-radius:4px;background:linear-gradient(#b4b4b4,#8a8a8a 45%,#6c6c6c 75%,#5e5e5e)"></div>
<div class="a" style="left:8px;top:876px;width:144px;height:45px;border-radius:4px;background:#c4c4c4;box-shadow:inset 1px 1px 2px rgba(0,0,0,0.45)"></div>
<div class="t" style="left:2px;top:929px;width:156px;text-align:center;font-size:13px;font-weight:bold;color:#262626">White</div>
<div class="a" style="left:160px;top:870px;width:156px;height:76px;border-radius:4px;background:linear-gradient(#b4b4b4,#8a8a8a 45%,#6c6c6c 75%,#5e5e5e)"></div>
<div class="a" style="left:166px;top:876px;width:144px;height:45px;border-radius:4px;background:#c00000;box-shadow:inset 1px 1px 2px rgba(0,0,0,0.45)"></div>
<div class="t" style="left:160px;top:929px;width:156px;text-align:center;font-size:13px;font-weight:bold;color:#262626">Red</div>
<div class="a" style="left:318px;top:870px;width:156px;height:76px;border-radius:4px;background:linear-gradient(#b4b4b4,#8a8a8a 45%,#6c6c6c 75%,#5e5e5e)"></div>
<div class="a" style="left:324px;top:876px;width:144px;height:45px;border-radius:4px;background:#00c000;box-shadow:inset 1px 1px 2px rgba(0,0,0,0.45)"></div>
<div class="t" style="left:318px;top:929px;width:156px;text-align:center;font-size:13px;font-weight:bold;color:#262626">Green</div>
<div class="a" style="left:476px;top:870px;width:156px;height:76px;border-radius:4px;background:linear-gradient(#b4b4b4,#8a8a8a 45%,#6c6c6c 75%,#5e5e5e)"></div>
<div class="a" style="left:482px;top:876px;width:144px;height:45px;border-radius:4px;background:#0000c0;box-shadow:inset 1px 1px 2px rgba(0,0,0,0.45)"></div>
<div class="t" style="left:476px;top:929px;width:156px;text-align:center;font-size:13px;font-weight:bold;color:#262626">Blue</div>
<div class="a" style="left:634px;top:870px;width:156px;height:76px;border-radius:4px;background:linear-gradient(#b4b4b4,#8a8a8a 45%,#6c6c6c 75%,#5e5e5e)"></div>
<div class="a" style="left:640px;top:876px;width:144px;height:45px;border-radius:4px;background:#00c0c0;box-shadow:inset 1px 1px 2px rgba(0,0,0,0.45)"></div>
<div class="t" style="left:634px;top:929px;width:156px;text-align:center;font-size:13px;font-weight:bold;color:#262626">Cyan</div>
<div class="a" style="left:792px;top:870px;width:156px;height:76px;border-radius:4px;background:linear-gradient(#b4b4b4,#8a8a8a 45%,#6c6c6c 75%,#5e5e5e)"></div>
<div class="a" style="left:798px;top:876px;width:144px;height:45px;border-radius:4px;background:#c000c0;box-shadow:inset 1px 1px 2px rgba(0,0,0,0.45)"></div>
<div class="t" style="left:792px;top:929px;width:156px;text-align:center;font-size:13px;font-weight:bold;color:#262626">Magenta</div>
<div class="a" style="left:950px;top:870px;width:156px;height:76px;border-radius:4px;background:linear-gradient(#b4b4b4,#8a8a8a 45%,#6c6c6c 75%,#5e5e5e)"></div>
<div class="a" style="left:956px;top:876px;width:144px;height:45px;border-radius:4px;background:#c4c400;box-shadow:inset 1px 1px 2px rgba(0,0,0,0.45)"></div>
<div class="t" style="left:950px;top:929px;width:156px;text-align:center;font-size:13px;font-weight:bold;color:#262626">Yellow</div>
<div class="a" style="left:1108px;top:870px;width:156px;height:77px;border-radius:4px;background:linear-gradient(#1e1e1e,#2a2a2a 60%,#303030)"></div>
<div class="a" style="left:1114px;top:875px;width:143px;height:46px;border-radius:4px;background:#fff;box-shadow:inset 1px 1px 2px rgba(0,0,0,0.35)"></div>
<div class="t" style="left:1108px;top:929px;width:156px;text-align:center;font-size:13px;font-weight:bold;color:#fff">100W</div>
</body></html>
